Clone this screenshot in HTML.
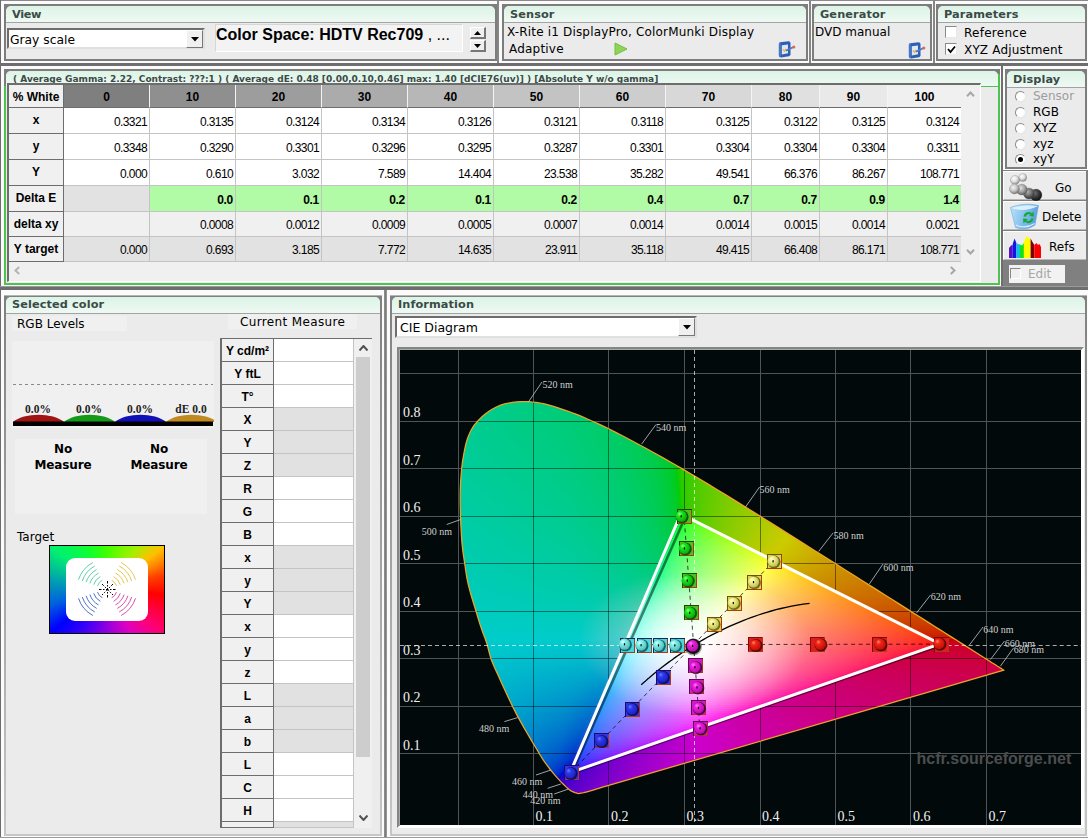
<!DOCTYPE html><html><head><meta charset="utf-8"><title>HCFR Colorimeter</title><style>
*{box-sizing:border-box;margin:0;padding:0}
html,body{width:1088px;height:838px;overflow:hidden;background:#fbfbfb}
body{position:relative;font-family:"DejaVu Sans","Liberation Sans",sans-serif;font-size:12px;color:#000}
div,span,svg{position:absolute}
.pn{background:#7d7d7d}
.pn>.in{left:2px;top:2px;right:2px;bottom:2px;background:#ebebeb;border-radius:5px 5px 0 0;overflow:hidden}
.pn>.in>.hd{left:0;top:0;right:0;height:17px;background:linear-gradient(#dcf4e6,#eef9f3);border-bottom:1px solid #a3a3a3;border-radius:5px 5px 0 0}
.pn .tt{left:6px;top:2px;font-weight:bold;font-size:11.3px;color:#3b4a47;white-space:nowrap;letter-spacing:0.1px}
.t{white-space:nowrap;line-height:1}
.sp{background:#6e6e6e}
.ln{background:#8a8a8a}
.cell{font-family:"Liberation Sans",sans-serif;font-size:12px;white-space:nowrap;line-height:1}
.num{text-align:right;letter-spacing:-0.62px}
.lab{text-align:center;font-weight:bold;letter-spacing:0}
</style></head><body><div class="ln" style="left:0px;top:0px;width:1088px;height:1px;"></div><div class="" style="left:0px;top:0px;width:1px;height:838px;background:#6c6c6c"></div><div class="sp" style="left:0px;top:63px;width:1088px;height:3px;"></div><div class="sp" style="left:0px;top:286px;width:1088px;height:4px;background:linear-gradient(#9a9a9a 0,#9a9a9a 25%,#6e6e6e 25%)"></div><div class="sp" style="left:384px;top:290px;width:3px;height:548px;background:linear-gradient(90deg,#949494,#7c7c7c 50%,#a4a4a4)"></div><div class="sp" style="left:1001px;top:66px;width:2px;height:220px;"></div><div class="" style="left:497px;top:0px;width:2px;height:63px;background:#868686"></div><div class="" style="left:809px;top:0px;width:2px;height:63px;background:#868686"></div><div class="" style="left:933px;top:0px;width:2px;height:63px;background:#868686"></div><div class="" style="left:0px;top:837px;width:1088px;height:1px;background:#9a9a9a"></div><div class="pn" style="left:4px;top:4px;width:493px;height:57px;"><div class="in"><div class="hd" style="height:17px"></div><span class="tt" style="letter-spacing:-0.35px">View</span><div class="" style="left:1px;top:22px;width:198px;height:21px;background:#fff;border:2px solid #6d6d6d;border-right-color:#e0e0e0;border-bottom-color:#e0e0e0"><span class="t" style="left:1px;top:3.5px;font-size:12.3px">Gray scale</span><div style="right:0;top:0;width:17px;height:18px;background:#f0f0f0;border:1px solid #fff;border-right-color:#777;border-bottom-color:#777"></div><svg style="right:4px;top:7px" width="8" height="5"><path d="M0 0H8L4 4.5Z" fill="#000"/></svg></div><div class="" style="left:209px;top:18px;width:248px;height:28px;background:#f3f3f3;border:1px solid #d6d6d6;border-right-color:#fff;border-bottom-color:#fff"><span class="t" style="left:0px;top:2px;font-family:'Liberation Sans',sans-serif;font-weight:bold;font-size:16px;letter-spacing:0">Color Space: HDTV Rec709 <span style="position:static;font-weight:normal">, ...</span></span></div><div class="" style="left:464px;top:21px;width:16px;height:12px;background:#f0f0f0;border:1px solid #fff;border-right:2px solid #777;border-bottom:2px solid #777"><svg style="left:3px;top:3px" width="7" height="4"><path d="M0 4H7L3.5 0Z" fill="#000"/></svg></div><div class="" style="left:464px;top:34px;width:16px;height:12px;background:#f0f0f0;border:1px solid #fff;border-right:2px solid #777;border-bottom:2px solid #777"><svg style="left:3px;top:3px" width="7" height="4"><path d="M0 0H7L3.5 4Z" fill="#000"/></svg></div></div></div><div class="pn" style="left:502px;top:4px;width:306px;height:57px;"><div class="in"><div class="hd" style="height:17px"></div><span class="tt" style="">Sensor</span><span class="t" style="left:3px;top:20px;font-size:12px;letter-spacing:0.17px">X-Rite i1 DisplayPro, ColorMunki Display</span><span class="t" style="left:5px;top:37px;font-size:12px;letter-spacing:0.2px">Adaptive</span><svg style="left:110px;top:36px" width="14" height="14"><path d="M1 1L13 7L1 13Z" fill="#8fd45a" stroke="#6fbf3c" stroke-width="1"/></svg><svg style="left:273px;top:33px" width="20" height="20" viewBox="0 0 20 20"><path d="M3 3.2L11.5 2.2Q13.5 2.2 13.5 4V15.2Q13.5 16.8 12 17.2L4 18.6Q1.8 18.6 1.8 16.6V5Q1.8 3.4 3 3.2Z" fill="#2c5fb4"/><path d="M2.6 4.4L3.4 3.6V18L2.6 17.6Z" fill="#6f9be0"/><path d="M4.8 6.2L11 5.5V14.3L4.8 15.4Z" fill="#dce8f8"/><path d="M5.8 10.5L7.6 12.2L9.2 10" stroke="#e4b740" stroke-width="1.5" fill="none"/><path d="M9 11.6L16 8.3" stroke="#4a78c9" stroke-width="1.8"/><circle cx="16.8" cy="8" r="1.6" fill="#d86a5a"/></svg></div></div><div class="pn" style="left:812px;top:4px;width:120px;height:57px;"><div class="in"><div class="hd" style="height:17px"></div><span class="tt" style="">Generator</span><span class="t" style="left:1px;top:20px;font-size:12px">DVD manual</span><svg style="left:93px;top:34px" width="20" height="20" viewBox="0 0 20 20"><path d="M3 3.2L11.5 2.2Q13.5 2.2 13.5 4V15.2Q13.5 16.8 12 17.2L4 18.6Q1.8 18.6 1.8 16.6V5Q1.8 3.4 3 3.2Z" fill="#2c5fb4"/><path d="M2.6 4.4L3.4 3.6V18L2.6 17.6Z" fill="#6f9be0"/><path d="M4.8 6.2L11 5.5V14.3L4.8 15.4Z" fill="#dce8f8"/><path d="M5.8 10.5L7.6 12.2L9.2 10" stroke="#e4b740" stroke-width="1.5" fill="none"/><path d="M9 11.6L16 8.3" stroke="#4a78c9" stroke-width="1.8"/><circle cx="16.8" cy="8" r="1.6" fill="#d86a5a"/></svg></div></div><div class="pn" style="left:936px;top:4px;width:151px;height:57px;"><div class="in"><div class="hd" style="height:17px"></div><span class="tt" style="">Parameters</span><div class="" style="left:7px;top:20px;width:12px;height:12px;background:#fff;border:1px solid #8a8a8a;border-right-color:#e8e8e8;border-bottom-color:#e8e8e8"></div><div class="" style="left:7px;top:37px;width:12px;height:12px;background:#fff;border:1px solid #8a8a8a;border-right-color:#e8e8e8;border-bottom-color:#e8e8e8"><svg style="left:1px;top:1px" width="9" height="9"><path d="M1 4L3.5 7L8 1.5" fill="none" stroke="#000" stroke-width="1.8"/></svg></div><span class="t" style="left:26px;top:21px;font-size:12px;letter-spacing:0.27px">Reference</span><span class="t" style="left:26px;top:38px;font-size:12px;letter-spacing:0.16px">XYZ Adjustment</span></div></div><div class="" style="left:4px;top:69px;width:996px;height:216px;background:#4fc24f"></div><div class="" style="left:4px;top:69px;width:994px;height:17px;background:#7d7d7d"></div><div class="" style="left:996px;top:69px;width:4px;height:5px;background:#7d7d7d"></div><div class="" style="left:6px;top:71px;width:992px;height:212px;background:#ebebeb;border-radius:5px 5px 0 0;overflow:hidden"><div style="left:0;top:0;right:0;height:15px;background:linear-gradient(#dcf4e6,#eef9f3)"></div><span class="tt t" style="left:7px;top:4px;font-weight:bold;font-size:9px;color:#3b4a47;letter-spacing:0;white-space:nowrap">( Average Gamma: 2.22, Contrast: ???:1 ) ( Average dE: 0.48 [0.00,0.10,0.46] max: 1.40 [dCIE76(uv)] ) [Absolute Y w/o gamma]</span></div><div class="" style="left:981px;top:86px;width:19px;height:1px;background:#4fc24f"></div><div class="" style="left:7px;top:83px;width:974px;height:199px;background:#f0f0f0;border-left:2px solid #6d6d6d;border-top:2px solid #6d6d6d;border-right:1px solid #fff;border-bottom:1px solid #fff"></div><div class="" style="left:9px;top:85px;width:55px;height:23px;background:#f0f0f0;border-right:1px solid #6d6d6d;border-bottom:1px solid #6d6d6d"><span class="cell lab" style="left:0;right:0;top:6px">% White</span></div><div class="" style="left:64px;top:85px;width:86px;height:23px;background:#7f7f7f;border-right:1px solid #f4f4f4;border-bottom:1px solid #6d6d6d"><span class="cell lab" style="left:0;right:0;top:6px">0</span></div><div class="" style="left:150px;top:85px;width:86px;height:23px;background:#8f8f8f;border-right:1px solid #f4f4f4;border-bottom:1px solid #6d6d6d"><span class="cell lab" style="left:0;right:0;top:6px">10</span></div><div class="" style="left:236px;top:85px;width:86px;height:23px;background:#9d9d9d;border-right:1px solid #f4f4f4;border-bottom:1px solid #6d6d6d"><span class="cell lab" style="left:0;right:0;top:6px">20</span></div><div class="" style="left:322px;top:85px;width:86px;height:23px;background:#ababab;border-right:1px solid #f4f4f4;border-bottom:1px solid #6d6d6d"><span class="cell lab" style="left:0;right:0;top:6px">30</span></div><div class="" style="left:408px;top:85px;width:86px;height:23px;background:#b7b7b7;border-right:1px solid #f4f4f4;border-bottom:1px solid #6d6d6d"><span class="cell lab" style="left:0;right:0;top:6px">40</span></div><div class="" style="left:494px;top:85px;width:86px;height:23px;background:#c3c3c3;border-right:1px solid #f4f4f4;border-bottom:1px solid #6d6d6d"><span class="cell lab" style="left:0;right:0;top:6px">50</span></div><div class="" style="left:580px;top:85px;width:86px;height:23px;background:#cdcdcd;border-right:1px solid #f4f4f4;border-bottom:1px solid #6d6d6d"><span class="cell lab" style="left:0;right:0;top:6px">60</span></div><div class="" style="left:666px;top:85px;width:86px;height:23px;background:#d8d8d8;border-right:1px solid #f4f4f4;border-bottom:1px solid #6d6d6d"><span class="cell lab" style="left:0;right:0;top:6px">70</span></div><div class="" style="left:752px;top:85px;width:68px;height:23px;background:#e0e0e0;border-right:1px solid #f4f4f4;border-bottom:1px solid #6d6d6d"><span class="cell lab" style="left:0;right:0;top:6px">80</span></div><div class="" style="left:820px;top:85px;width:68px;height:23px;background:#e9e9e9;border-right:1px solid #f4f4f4;border-bottom:1px solid #6d6d6d"><span class="cell lab" style="left:0;right:0;top:6px">90</span></div><div class="" style="left:888px;top:85px;width:74px;height:23px;background:#f0f0f0;border-right:1px solid #6d6d6d;border-bottom:1px solid #6d6d6d"><span class="cell lab" style="left:0;right:0;top:6px">100</span></div><div class="" style="left:9px;top:108px;width:55px;height:26px;background:#f0f0f0;border-right:1px solid #6d6d6d;border-bottom:1px solid #6d6d6d"><span class="cell lab" style="left:0;right:0;top:6px">x</span></div><div class="" style="left:64px;top:108px;width:86px;height:26px;background:#ffffff;border-right:1px solid #c4c4c4;border-bottom:1px solid #c4c4c4"><span class="cell num" style="right:2px;top:8px;">0.3321</span></div><div class="" style="left:150px;top:108px;width:86px;height:26px;background:#ffffff;border-right:1px solid #c4c4c4;border-bottom:1px solid #c4c4c4"><span class="cell num" style="right:2px;top:8px;">0.3135</span></div><div class="" style="left:236px;top:108px;width:86px;height:26px;background:#ffffff;border-right:1px solid #c4c4c4;border-bottom:1px solid #c4c4c4"><span class="cell num" style="right:2px;top:8px;">0.3124</span></div><div class="" style="left:322px;top:108px;width:86px;height:26px;background:#ffffff;border-right:1px solid #c4c4c4;border-bottom:1px solid #c4c4c4"><span class="cell num" style="right:2px;top:8px;">0.3134</span></div><div class="" style="left:408px;top:108px;width:86px;height:26px;background:#ffffff;border-right:1px solid #c4c4c4;border-bottom:1px solid #c4c4c4"><span class="cell num" style="right:2px;top:8px;">0.3126</span></div><div class="" style="left:494px;top:108px;width:86px;height:26px;background:#ffffff;border-right:1px solid #c4c4c4;border-bottom:1px solid #c4c4c4"><span class="cell num" style="right:2px;top:8px;">0.3121</span></div><div class="" style="left:580px;top:108px;width:86px;height:26px;background:#ffffff;border-right:1px solid #c4c4c4;border-bottom:1px solid #c4c4c4"><span class="cell num" style="right:2px;top:8px;">0.3118</span></div><div class="" style="left:666px;top:108px;width:86px;height:26px;background:#ffffff;border-right:1px solid #c4c4c4;border-bottom:1px solid #c4c4c4"><span class="cell num" style="right:2px;top:8px;">0.3125</span></div><div class="" style="left:752px;top:108px;width:68px;height:26px;background:#ffffff;border-right:1px solid #c4c4c4;border-bottom:1px solid #c4c4c4"><span class="cell num" style="right:2px;top:8px;">0.3122</span></div><div class="" style="left:820px;top:108px;width:68px;height:26px;background:#ffffff;border-right:1px solid #c4c4c4;border-bottom:1px solid #c4c4c4"><span class="cell num" style="right:2px;top:8px;">0.3125</span></div><div class="" style="left:888px;top:108px;width:74px;height:26px;background:#ffffff;border-right:1px solid #c4c4c4;border-bottom:1px solid #c4c4c4"><span class="cell num" style="right:2px;top:8px;">0.3124</span></div><div class="" style="left:9px;top:134px;width:55px;height:26px;background:#f0f0f0;border-right:1px solid #6d6d6d;border-bottom:1px solid #6d6d6d"><span class="cell lab" style="left:0;right:0;top:6px">y</span></div><div class="" style="left:64px;top:134px;width:86px;height:26px;background:#ffffff;border-right:1px solid #c4c4c4;border-bottom:1px solid #c4c4c4"><span class="cell num" style="right:2px;top:8px;">0.3348</span></div><div class="" style="left:150px;top:134px;width:86px;height:26px;background:#ffffff;border-right:1px solid #c4c4c4;border-bottom:1px solid #c4c4c4"><span class="cell num" style="right:2px;top:8px;">0.3290</span></div><div class="" style="left:236px;top:134px;width:86px;height:26px;background:#ffffff;border-right:1px solid #c4c4c4;border-bottom:1px solid #c4c4c4"><span class="cell num" style="right:2px;top:8px;">0.3301</span></div><div class="" style="left:322px;top:134px;width:86px;height:26px;background:#ffffff;border-right:1px solid #c4c4c4;border-bottom:1px solid #c4c4c4"><span class="cell num" style="right:2px;top:8px;">0.3296</span></div><div class="" style="left:408px;top:134px;width:86px;height:26px;background:#ffffff;border-right:1px solid #c4c4c4;border-bottom:1px solid #c4c4c4"><span class="cell num" style="right:2px;top:8px;">0.3295</span></div><div class="" style="left:494px;top:134px;width:86px;height:26px;background:#ffffff;border-right:1px solid #c4c4c4;border-bottom:1px solid #c4c4c4"><span class="cell num" style="right:2px;top:8px;">0.3287</span></div><div class="" style="left:580px;top:134px;width:86px;height:26px;background:#ffffff;border-right:1px solid #c4c4c4;border-bottom:1px solid #c4c4c4"><span class="cell num" style="right:2px;top:8px;">0.3301</span></div><div class="" style="left:666px;top:134px;width:86px;height:26px;background:#ffffff;border-right:1px solid #c4c4c4;border-bottom:1px solid #c4c4c4"><span class="cell num" style="right:2px;top:8px;">0.3304</span></div><div class="" style="left:752px;top:134px;width:68px;height:26px;background:#ffffff;border-right:1px solid #c4c4c4;border-bottom:1px solid #c4c4c4"><span class="cell num" style="right:2px;top:8px;">0.3304</span></div><div class="" style="left:820px;top:134px;width:68px;height:26px;background:#ffffff;border-right:1px solid #c4c4c4;border-bottom:1px solid #c4c4c4"><span class="cell num" style="right:2px;top:8px;">0.3304</span></div><div class="" style="left:888px;top:134px;width:74px;height:26px;background:#ffffff;border-right:1px solid #c4c4c4;border-bottom:1px solid #c4c4c4"><span class="cell num" style="right:2px;top:8px;">0.3311</span></div><div class="" style="left:9px;top:160px;width:55px;height:26px;background:#f0f0f0;border-right:1px solid #6d6d6d;border-bottom:1px solid #6d6d6d"><span class="cell lab" style="left:0;right:0;top:6px">Y</span></div><div class="" style="left:64px;top:160px;width:86px;height:26px;background:#ffffff;border-right:1px solid #c4c4c4;border-bottom:1px solid #c4c4c4"><span class="cell num" style="right:2px;top:8px;">0.000</span></div><div class="" style="left:150px;top:160px;width:86px;height:26px;background:#ffffff;border-right:1px solid #c4c4c4;border-bottom:1px solid #c4c4c4"><span class="cell num" style="right:2px;top:8px;">0.610</span></div><div class="" style="left:236px;top:160px;width:86px;height:26px;background:#ffffff;border-right:1px solid #c4c4c4;border-bottom:1px solid #c4c4c4"><span class="cell num" style="right:2px;top:8px;">3.032</span></div><div class="" style="left:322px;top:160px;width:86px;height:26px;background:#ffffff;border-right:1px solid #c4c4c4;border-bottom:1px solid #c4c4c4"><span class="cell num" style="right:2px;top:8px;">7.589</span></div><div class="" style="left:408px;top:160px;width:86px;height:26px;background:#ffffff;border-right:1px solid #c4c4c4;border-bottom:1px solid #c4c4c4"><span class="cell num" style="right:2px;top:8px;">14.404</span></div><div class="" style="left:494px;top:160px;width:86px;height:26px;background:#ffffff;border-right:1px solid #c4c4c4;border-bottom:1px solid #c4c4c4"><span class="cell num" style="right:2px;top:8px;">23.538</span></div><div class="" style="left:580px;top:160px;width:86px;height:26px;background:#ffffff;border-right:1px solid #c4c4c4;border-bottom:1px solid #c4c4c4"><span class="cell num" style="right:2px;top:8px;">35.282</span></div><div class="" style="left:666px;top:160px;width:86px;height:26px;background:#ffffff;border-right:1px solid #c4c4c4;border-bottom:1px solid #c4c4c4"><span class="cell num" style="right:2px;top:8px;">49.541</span></div><div class="" style="left:752px;top:160px;width:68px;height:26px;background:#ffffff;border-right:1px solid #c4c4c4;border-bottom:1px solid #c4c4c4"><span class="cell num" style="right:2px;top:8px;">66.376</span></div><div class="" style="left:820px;top:160px;width:68px;height:26px;background:#ffffff;border-right:1px solid #c4c4c4;border-bottom:1px solid #c4c4c4"><span class="cell num" style="right:2px;top:8px;">86.267</span></div><div class="" style="left:888px;top:160px;width:74px;height:26px;background:#ffffff;border-right:1px solid #c4c4c4;border-bottom:1px solid #c4c4c4"><span class="cell num" style="right:2px;top:8px;">108.771</span></div><div class="" style="left:9px;top:186px;width:55px;height:26px;background:#f0f0f0;border-right:1px solid #6d6d6d;border-bottom:1px solid #6d6d6d"><span class="cell lab" style="left:0;right:0;top:6px">Delta E</span></div><div class="" style="left:64px;top:186px;width:86px;height:26px;background:#e2e2e2;border-right:1px solid #c4c4c4;border-bottom:1px solid #c4c4c4"><span class="cell num" style="right:2px;top:8px;font-weight:bold;letter-spacing:-0.3px;"></span></div><div class="" style="left:150px;top:186px;width:86px;height:26px;background:#b1fba6;border-right:1px solid #c4c4c4;border-bottom:1px solid #c4c4c4"><span class="cell num" style="right:2px;top:8px;font-weight:bold;letter-spacing:-0.3px;">0.0</span></div><div class="" style="left:236px;top:186px;width:86px;height:26px;background:#b1fba6;border-right:1px solid #c4c4c4;border-bottom:1px solid #c4c4c4"><span class="cell num" style="right:2px;top:8px;font-weight:bold;letter-spacing:-0.3px;">0.1</span></div><div class="" style="left:322px;top:186px;width:86px;height:26px;background:#b1fba6;border-right:1px solid #c4c4c4;border-bottom:1px solid #c4c4c4"><span class="cell num" style="right:2px;top:8px;font-weight:bold;letter-spacing:-0.3px;">0.2</span></div><div class="" style="left:408px;top:186px;width:86px;height:26px;background:#b1fba6;border-right:1px solid #c4c4c4;border-bottom:1px solid #c4c4c4"><span class="cell num" style="right:2px;top:8px;font-weight:bold;letter-spacing:-0.3px;">0.1</span></div><div class="" style="left:494px;top:186px;width:86px;height:26px;background:#b1fba6;border-right:1px solid #c4c4c4;border-bottom:1px solid #c4c4c4"><span class="cell num" style="right:2px;top:8px;font-weight:bold;letter-spacing:-0.3px;">0.2</span></div><div class="" style="left:580px;top:186px;width:86px;height:26px;background:#b1fba6;border-right:1px solid #c4c4c4;border-bottom:1px solid #c4c4c4"><span class="cell num" style="right:2px;top:8px;font-weight:bold;letter-spacing:-0.3px;">0.4</span></div><div class="" style="left:666px;top:186px;width:86px;height:26px;background:#b1fba6;border-right:1px solid #c4c4c4;border-bottom:1px solid #c4c4c4"><span class="cell num" style="right:2px;top:8px;font-weight:bold;letter-spacing:-0.3px;">0.7</span></div><div class="" style="left:752px;top:186px;width:68px;height:26px;background:#b1fba6;border-right:1px solid #c4c4c4;border-bottom:1px solid #c4c4c4"><span class="cell num" style="right:2px;top:8px;font-weight:bold;letter-spacing:-0.3px;">0.7</span></div><div class="" style="left:820px;top:186px;width:68px;height:26px;background:#b1fba6;border-right:1px solid #c4c4c4;border-bottom:1px solid #c4c4c4"><span class="cell num" style="right:2px;top:8px;font-weight:bold;letter-spacing:-0.3px;">0.9</span></div><div class="" style="left:888px;top:186px;width:74px;height:26px;background:#b1fba6;border-right:1px solid #c4c4c4;border-bottom:1px solid #c4c4c4"><span class="cell num" style="right:2px;top:8px;font-weight:bold;letter-spacing:-0.3px;">1.4</span></div><div class="" style="left:9px;top:212px;width:55px;height:25px;background:#f0f0f0;border-right:1px solid #6d6d6d;border-bottom:1px solid #6d6d6d"><span class="cell lab" style="left:0;right:0;top:6px">delta xy</span></div><div class="" style="left:64px;top:212px;width:86px;height:25px;background:#f0f0f0;border-right:1px solid #c4c4c4;border-bottom:1px solid #c4c4c4"><span class="cell num" style="right:2px;top:7px;"></span></div><div class="" style="left:150px;top:212px;width:86px;height:25px;background:#f0f0f0;border-right:1px solid #c4c4c4;border-bottom:1px solid #c4c4c4"><span class="cell num" style="right:2px;top:7px;">0.0008</span></div><div class="" style="left:236px;top:212px;width:86px;height:25px;background:#f0f0f0;border-right:1px solid #c4c4c4;border-bottom:1px solid #c4c4c4"><span class="cell num" style="right:2px;top:7px;">0.0012</span></div><div class="" style="left:322px;top:212px;width:86px;height:25px;background:#f0f0f0;border-right:1px solid #c4c4c4;border-bottom:1px solid #c4c4c4"><span class="cell num" style="right:2px;top:7px;">0.0009</span></div><div class="" style="left:408px;top:212px;width:86px;height:25px;background:#f0f0f0;border-right:1px solid #c4c4c4;border-bottom:1px solid #c4c4c4"><span class="cell num" style="right:2px;top:7px;">0.0005</span></div><div class="" style="left:494px;top:212px;width:86px;height:25px;background:#f0f0f0;border-right:1px solid #c4c4c4;border-bottom:1px solid #c4c4c4"><span class="cell num" style="right:2px;top:7px;">0.0007</span></div><div class="" style="left:580px;top:212px;width:86px;height:25px;background:#f0f0f0;border-right:1px solid #c4c4c4;border-bottom:1px solid #c4c4c4"><span class="cell num" style="right:2px;top:7px;">0.0014</span></div><div class="" style="left:666px;top:212px;width:86px;height:25px;background:#f0f0f0;border-right:1px solid #c4c4c4;border-bottom:1px solid #c4c4c4"><span class="cell num" style="right:2px;top:7px;">0.0014</span></div><div class="" style="left:752px;top:212px;width:68px;height:25px;background:#f0f0f0;border-right:1px solid #c4c4c4;border-bottom:1px solid #c4c4c4"><span class="cell num" style="right:2px;top:7px;">0.0015</span></div><div class="" style="left:820px;top:212px;width:68px;height:25px;background:#f0f0f0;border-right:1px solid #c4c4c4;border-bottom:1px solid #c4c4c4"><span class="cell num" style="right:2px;top:7px;">0.0014</span></div><div class="" style="left:888px;top:212px;width:74px;height:25px;background:#f0f0f0;border-right:1px solid #c4c4c4;border-bottom:1px solid #c4c4c4"><span class="cell num" style="right:2px;top:7px;">0.0021</span></div><div class="" style="left:9px;top:237px;width:55px;height:25px;background:#f0f0f0;border-right:1px solid #6d6d6d;border-bottom:1px solid #6d6d6d"><span class="cell lab" style="left:0;right:0;top:6px">Y target</span></div><div class="" style="left:64px;top:237px;width:86px;height:25px;background:#e2e2e2;border-right:1px solid #c4c4c4;border-bottom:1px solid #c4c4c4"><span class="cell num" style="right:2px;top:7px;">0.000</span></div><div class="" style="left:150px;top:237px;width:86px;height:25px;background:#e2e2e2;border-right:1px solid #c4c4c4;border-bottom:1px solid #c4c4c4"><span class="cell num" style="right:2px;top:7px;">0.693</span></div><div class="" style="left:236px;top:237px;width:86px;height:25px;background:#e2e2e2;border-right:1px solid #c4c4c4;border-bottom:1px solid #c4c4c4"><span class="cell num" style="right:2px;top:7px;">3.185</span></div><div class="" style="left:322px;top:237px;width:86px;height:25px;background:#e2e2e2;border-right:1px solid #c4c4c4;border-bottom:1px solid #c4c4c4"><span class="cell num" style="right:2px;top:7px;">7.772</span></div><div class="" style="left:408px;top:237px;width:86px;height:25px;background:#e2e2e2;border-right:1px solid #c4c4c4;border-bottom:1px solid #c4c4c4"><span class="cell num" style="right:2px;top:7px;">14.635</span></div><div class="" style="left:494px;top:237px;width:86px;height:25px;background:#e2e2e2;border-right:1px solid #c4c4c4;border-bottom:1px solid #c4c4c4"><span class="cell num" style="right:2px;top:7px;">23.911</span></div><div class="" style="left:580px;top:237px;width:86px;height:25px;background:#e2e2e2;border-right:1px solid #c4c4c4;border-bottom:1px solid #c4c4c4"><span class="cell num" style="right:2px;top:7px;">35.118</span></div><div class="" style="left:666px;top:237px;width:86px;height:25px;background:#e2e2e2;border-right:1px solid #c4c4c4;border-bottom:1px solid #c4c4c4"><span class="cell num" style="right:2px;top:7px;">49.415</span></div><div class="" style="left:752px;top:237px;width:68px;height:25px;background:#e2e2e2;border-right:1px solid #c4c4c4;border-bottom:1px solid #c4c4c4"><span class="cell num" style="right:2px;top:7px;">66.408</span></div><div class="" style="left:820px;top:237px;width:68px;height:25px;background:#e2e2e2;border-right:1px solid #c4c4c4;border-bottom:1px solid #c4c4c4"><span class="cell num" style="right:2px;top:7px;">86.171</span></div><div class="" style="left:888px;top:237px;width:74px;height:25px;background:#e2e2e2;border-right:1px solid #c4c4c4;border-bottom:1px solid #c4c4c4"><span class="cell num" style="right:2px;top:7px;">108.771</span></div><div class="" style="left:961px;top:85px;width:18px;height:177px;background:#f0f0f0"><svg style="left:5px;top:6px" width="9" height="6"><path d="M1 5.2L4.5 1.5L8 5.2" fill="none" stroke="#a6a6a6" stroke-width="2"/></svg><svg style="left:5px;top:164px" width="9" height="6"><path d="M1 0.8L4.5 4.5L8 0.8" fill="none" stroke="#a6a6a6" stroke-width="2"/></svg></div><div class="" style="left:9px;top:262px;width:952px;height:18px;background:#f0f0f0"><svg style="left:5px;top:4px" width="6" height="9"><path d="M5.2 1L1.4 4.5L5.2 8" fill="none" stroke="#b4b4b4" stroke-width="2"/></svg><svg style="left:941px;top:4px" width="6" height="9"><path d="M0.8 1L4.6 4.5L0.8 8" fill="none" stroke="#a6a6a6" stroke-width="2"/></svg></div><div class="pn" style="left:1005px;top:69px;width:82px;height:100px;"><div class="in"><div class="hd" style="height:17px"></div><span class="tt" style="">Display</span><div style="left:8px;top:19.7px;width:11px;height:11px;border-radius:50%;background:#fff;border:1px solid #8c8c8c;border-right-color:#e4e4e4;border-bottom-color:#e4e4e4"></div><span class="t" style="left:26px;top:18.7px;font-size:12px;color:#9d9d9d">Sensor</span><div style="left:8px;top:35.7px;width:11px;height:11px;border-radius:50%;background:#fff;border:1px solid #8c8c8c;border-right-color:#e4e4e4;border-bottom-color:#e4e4e4"></div><span class="t" style="left:26px;top:34.7px;font-size:12px;color:#000">RGB</span><div style="left:8px;top:51.7px;width:11px;height:11px;border-radius:50%;background:#fff;border:1px solid #8c8c8c;border-right-color:#e4e4e4;border-bottom-color:#e4e4e4"></div><span class="t" style="left:26px;top:50.7px;font-size:12px;color:#000">XYZ</span><div style="left:8px;top:67.7px;width:11px;height:11px;border-radius:50%;background:#fff;border:1px solid #8c8c8c;border-right-color:#e4e4e4;border-bottom-color:#e4e4e4"></div><span class="t" style="left:26px;top:66.7px;font-size:12px;color:#000">xyz</span><div style="left:8px;top:82.7px;width:11px;height:11px;border-radius:50%;background:#fff;border:1px solid #8c8c8c;border-right-color:#e4e4e4;border-bottom-color:#e4e4e4"></div><div style="left:11px;top:85.7px;width:5px;height:5px;border-radius:50%;background:#000"></div><span class="t" style="left:26px;top:81.7px;font-size:12px;color:#000">xyY</span></div></div><div class="" style="left:1003px;top:170px;width:85px;height:116px;background:#808080"></div><div class="" style="left:1003px;top:171px;width:83px;height:29px;background:#ececec;border-top:1px solid #fff;border-left:1px solid #fff;border-bottom:1px solid #b8b8b8"><svg style="left:0px;top:0px" width="42" height="29" viewBox="0 0 42 29"><defs><radialGradient id="gs0" cx="0.4" cy="0.35" r="0.65"><stop offset="0" stop-color="#ffffff"/><stop offset="0.55" stop-color="#dcdcdc"/><stop offset="1" stop-color="#8c8c8c"/></radialGradient><radialGradient id="gs1" cx="0.4" cy="0.35" r="0.65"><stop offset="0" stop-color="#f4f4f4"/><stop offset="0.55" stop-color="#c4c4c4"/><stop offset="1" stop-color="#747474"/></radialGradient><radialGradient id="gs2" cx="0.4" cy="0.35" r="0.65"><stop offset="0" stop-color="#e0e0e0"/><stop offset="0.55" stop-color="#a4a4a4"/><stop offset="1" stop-color="#5c5c5c"/></radialGradient><radialGradient id="gs3" cx="0.4" cy="0.35" r="0.65"><stop offset="0" stop-color="#b0b0b0"/><stop offset="0.55" stop-color="#6c6c6c"/><stop offset="1" stop-color="#303030"/></radialGradient><radialGradient id="gs4" cx="0.4" cy="0.35" r="0.65"><stop offset="0" stop-color="#707070"/><stop offset="0.55" stop-color="#363636"/><stop offset="1" stop-color="#101010"/></radialGradient></defs><circle cx="32" cy="23" r="6" fill="url(#gs4)" stroke="#6a6a6a" stroke-opacity="0.5" stroke-width="0.5"/><circle cx="25" cy="21.5" r="5.6" fill="url(#gs3)" stroke="#6a6a6a" stroke-opacity="0.5" stroke-width="0.5"/><circle cx="18.7" cy="5.5" r="4" fill="url(#gs0)" stroke="#6a6a6a" stroke-opacity="0.5" stroke-width="0.5"/><circle cx="17.8" cy="17.6" r="5.5" fill="url(#gs2)" stroke="#6a6a6a" stroke-opacity="0.5" stroke-width="0.5"/><circle cx="11" cy="8" r="4.6" fill="url(#gs0)" stroke="#6a6a6a" stroke-opacity="0.5" stroke-width="0.5"/><circle cx="10.4" cy="17" r="5" fill="url(#gs1)" stroke="#6a6a6a" stroke-opacity="0.5" stroke-width="0.5"/></svg><span class="t" style="left:51px;top:10px;font-size:12px">Go</span></div><div class="" style="left:1003px;top:201px;width:83px;height:29px;background:#ececec;border-top:1px solid #fff;border-left:1px solid #fff;border-bottom:1px solid #b8b8b8"><svg style="left:5px;top:1px" width="32" height="28" viewBox="0 0 32 28"><defs><linearGradient id="db" x1="0" y1="0" x2="1" y2="0.3"><stop offset="0" stop-color="#bfe3fa"/><stop offset="0.5" stop-color="#8cc6ee"/><stop offset="1" stop-color="#5aa0dc"/></linearGradient></defs><path d="M1.5 4.5Q15 -1 29.5 2.5L26 22Q17 28.5 6.5 24.5Z" fill="url(#db)" stroke="#6aaee0" stroke-width="0.6"/><path d="M2.5 5Q15 9.5 29 3.2Q16 0.5 2.5 5Z" fill="#e4f4fd" opacity="0.9"/><path d="M6.8 22Q16 26.5 25.6 20.5" stroke="#d8effc" stroke-width="1.2" fill="none"/><path d="M14.5 13.5A5.2 5.2 0 0 1 23 10.2L24.5 8.5L25 13.5L20 13L21.6 11.6A3.2 3.2 0 0 0 16.8 13.8Z" fill="#18a838"/><path d="M24.6 15.5A5.2 5.2 0 0 1 16 18.8L14.5 20.4L14 15.5L19 16L17.4 17.4A3.2 3.2 0 0 0 22.3 15.3Z" fill="#18a838"/></svg><span class="t" style="left:38px;top:9px;font-size:12px">Delete</span></div><div class="" style="left:1003px;top:231px;width:83px;height:29px;background:#ececec;border-top:1px solid #fff;border-left:1px solid #fff;border-bottom:1px solid #b8b8b8"><svg style="left:4px;top:3px" width="34" height="24" viewBox="0 0 34 24"><path d="M1 23L1 13L3 10.5L4.7 10L4.7 23Z" fill="#5a10c0"/><path d="M4.7 23L4.7 9L6.5 3.5L8.4 8L8.4 23Z" fill="#1414e6"/><path d="M8.4 23L8.4 8L10 9L12 9.5L12 23Z" fill="#12c2e2"/><path d="M12 23L12 9.5L14 10.5L15.9 8L15.9 23Z" fill="#14e214"/><path d="M15.9 23L15.9 7L18.5 1L20.5 3L22.6 4L22.6 23Z" fill="#ffff00"/><path d="M22.6 23L22.6 3.5L24.5 7L26.3 10L26.3 23Z" fill="#7c0000"/><path d="M26.3 23L26.3 10L28.5 8L30 10L31.5 9L33 12L33 23Z" fill="#ff0000"/></svg><span class="t" style="left:45px;top:9px;font-size:12px">Refs</span></div><div class="" style="left:1009px;top:265px;width:56px;height:18px;background:#f2f2f2"><div style="left:1px;top:3px;width:11px;height:11px;background:#f0f0f0;border:1px solid #8a8a8a;border-right-color:#fff;border-bottom-color:#fff"></div><span class="t" style="left:19px;top:3px;font-size:12px;color:#a6a6a6">Edit</span></div><div class="pn" style="left:4px;top:295px;width:378px;height:541px;background:linear-gradient(#b4b4b4 0,#b4b4b4 1px,#808080 1px,#c6c6c6)"><div class="in"><div class="hd" style="height:17px"></div><span class="tt" style="top:1px">Selected color</span><div class="" style="left:6px;top:19px;width:115px;height:15px;background:#f0f0f0"><span class="t" style="left:5px;top:2px;font-size:12px">RGB Levels</span></div><div class="" style="left:222px;top:17px;width:129px;height:15px;background:#f0f0f0"><span class="t" style="left:12px;top:2px;font-size:12px;letter-spacing:0.36px">Current Measure</span></div><div class="" style="left:6px;top:44px;width:202px;height:87px;background:#f0f0f0"><svg style="left:0;top:0" width="202" height="86" viewBox="0 0 202 86"><line x1="1" y1="43.5" x2="201" y2="43.5" stroke="#8a8a8a" stroke-width="1" stroke-dasharray="3 3"/><path d="M1 81 Q4 78 12 75.5 Q26.5 72 41 75.5 Q49 78 52 81 Z" fill="#a01414"/><path d="M52 81 Q55 78 63 75.5 Q77.5 72 92 75.5 Q100 78 103 81 Z" fill="#149a18"/><path d="M103 81 Q106 78 114 75.5 Q128.5 72 143 75.5 Q151 78 154 81 Z" fill="#1010b8"/><path d="M154 81 Q157 78 165 75.5 Q179.5 72 194 75.5 Q202 78 205 81 Z" fill="#c08a20"/><rect x="1" y="80.5" width="200" height="4.5" fill="#000"/><text x="26" y="72" text-anchor="middle" font-family="Liberation Serif,serif" font-weight="bold" font-size="11.5" fill="#222">0.0%</text><text x="77" y="72" text-anchor="middle" font-family="Liberation Serif,serif" font-weight="bold" font-size="11.5" fill="#222">0.0%</text><text x="128" y="72" text-anchor="middle" font-family="Liberation Serif,serif" font-weight="bold" font-size="11.5" fill="#222">0.0%</text><text x="179" y="72" text-anchor="middle" font-family="Liberation Serif,serif" font-weight="bold" font-size="11.5" fill="#222">dE 0.0</text></svg></div><div class="" style="left:9px;top:142px;width:192px;height:75px;background:#f0f0f0"><span class="t" style="left:0px;top:4px;width:96px;text-align:center;font-weight:bold;font-size:12px;letter-spacing:-0.15px">No</span><span class="t" style="left:0px;top:20px;width:96px;text-align:center;font-weight:bold;font-size:12px;letter-spacing:-0.15px">Measure</span><span class="t" style="left:96px;top:4px;width:96px;text-align:center;font-weight:bold;font-size:12px;letter-spacing:-0.15px">No</span><span class="t" style="left:96px;top:20px;width:96px;text-align:center;font-weight:bold;font-size:12px;letter-spacing:-0.15px">Measure</span></div><div class="" style="left:6px;top:231px;width:58px;height:17px;"><span class="t" style="left:5px;top:3px;font-size:12px">Target</span></div><div class="" style="left:43px;top:248px;width:116px;height:89px;background:conic-gradient(from 0deg at 50% 50%,#40ff00 0deg,#a0f000 35deg,#ffc000 53deg,#ff4000 75deg,#ff0000 95deg,#ff0070 127deg,#e000c0 150deg,#9000e0 180deg,#3000f8 215deg,#0000ff 233deg,#0060e0 255deg,#00a0b0 280deg,#00f070 307deg,#10ff30 335deg,#40ff00 360deg);border:1px solid #000"><svg style="left:0;top:0" width="114" height="86" viewBox="0 0 114 86"><defs><linearGradient id="tgH" x1="0" x2="1" y1="0" y2="0"><stop offset="0" stop-color="#00ff60"/><stop offset="0.55" stop-color="#30ff00"/><stop offset="0.8" stop-color="#c0e000"/><stop offset="1" stop-color="#ff8000"/></linearGradient><linearGradient id="tgB" x1="0" x2="1" y1="0" y2="0"><stop offset="0" stop-color="#0000ff"/><stop offset="0.5" stop-color="#8000e0"/><stop offset="0.8" stop-color="#e000c0"/><stop offset="1" stop-color="#ff0080"/></linearGradient><linearGradient id="tgL" x1="0" x2="0" y1="0" y2="1"><stop offset="0" stop-color="#00ff60"/><stop offset="0.4" stop-color="#00c0a0"/><stop offset="0.7" stop-color="#0070e0"/><stop offset="1" stop-color="#0000ff"/></linearGradient><linearGradient id="tgR" x1="0" x2="0" y1="0" y2="1"><stop offset="0" stop-color="#ff9000"/><stop offset="0.45" stop-color="#ff0000"/><stop offset="0.75" stop-color="#ff0050"/><stop offset="1" stop-color="#ff00a0"/></linearGradient></defs><rect x="16" y="12" width="82" height="63" rx="9" fill="#fff"/><path d="M47.5 39.9A10 10 0 0 1 52.3 34.2" fill="none" stroke="#4fc9a0" stroke-width="0.9"/><path d="M43.7 38.7A14 14 0 0 1 50.4 30.6" fill="none" stroke="#4fc9a0" stroke-width="0.9"/><path d="M39.9 37.4A18 18 0 0 1 48.5 27.1" fill="none" stroke="#4fc9a0" stroke-width="0.9"/><path d="M36.1 36.2A22 22 0 0 1 46.7 23.6" fill="none" stroke="#4fc9a0" stroke-width="0.9"/><path d="M32.3 35.0A26 26 0 0 1 44.8 20.0" fill="none" stroke="#4fc9a0" stroke-width="0.9"/><path d="M28.5 33.7A30 30 0 0 1 42.9 16.5" fill="none" stroke="#4fc9a0" stroke-width="0.9"/><path d="M61.7 34.2A10 10 0 0 1 66.5 39.9" fill="none" stroke="#e0c040" stroke-width="0.9"/><path d="M63.6 30.6A14 14 0 0 1 70.3 38.7" fill="none" stroke="#e0c040" stroke-width="0.9"/><path d="M65.5 27.1A18 18 0 0 1 74.1 37.4" fill="none" stroke="#e0c040" stroke-width="0.9"/><path d="M67.3 23.6A22 22 0 0 1 77.9 36.2" fill="none" stroke="#e0c040" stroke-width="0.9"/><path d="M69.2 20.0A26 26 0 0 1 81.7 35.0" fill="none" stroke="#e0c040" stroke-width="0.9"/><path d="M71.1 16.5A30 30 0 0 1 85.5 33.7" fill="none" stroke="#e0c040" stroke-width="0.9"/><path d="M52.3 51.8A10 10 0 0 1 47.5 46.1" fill="none" stroke="#4060c0" stroke-width="0.9"/><path d="M50.4 55.4A14 14 0 0 1 43.7 47.3" fill="none" stroke="#4060c0" stroke-width="0.9"/><path d="M48.5 58.9A18 18 0 0 1 39.9 48.6" fill="none" stroke="#4060c0" stroke-width="0.9"/><path d="M46.7 62.4A22 22 0 0 1 36.1 49.8" fill="none" stroke="#4060c0" stroke-width="0.9"/><path d="M44.8 66.0A26 26 0 0 1 32.3 51.0" fill="none" stroke="#4060c0" stroke-width="0.9"/><path d="M42.9 69.5A30 30 0 0 1 28.5 52.3" fill="none" stroke="#4060c0" stroke-width="0.9"/><path d="M66.5 46.1A10 10 0 0 1 61.7 51.8" fill="none" stroke="#d040a0" stroke-width="0.9"/><path d="M70.3 47.3A14 14 0 0 1 63.6 55.4" fill="none" stroke="#d040a0" stroke-width="0.9"/><path d="M74.1 48.6A18 18 0 0 1 65.5 58.9" fill="none" stroke="#d040a0" stroke-width="0.9"/><path d="M77.9 49.8A22 22 0 0 1 67.3 62.4" fill="none" stroke="#d040a0" stroke-width="0.9"/><path d="M81.7 51.0A26 26 0 0 1 69.2 66.0" fill="none" stroke="#d040a0" stroke-width="0.9"/><path d="M85.5 52.3A30 30 0 0 1 71.1 69.5" fill="none" stroke="#d040a0" stroke-width="0.9"/><path d="M49 43.5H66M57.5 35V52M52 38L63 49M63 38L52 49" stroke="#000" stroke-width="1" stroke-dasharray="2.5 1.5 1.5 1.5"/></svg></div><div class="" style="left:214px;top:41px;width:152px;height:490px;background:#f0f0f0;border-left:2px solid #6d6d6d;border-top:2px solid #6d6d6d;overflow:hidden"></div><div class="" style="left:216px;top:42px;width:52px;height:23px;background:#f0f0f0;border-right:1px solid #6d6d6d;border-bottom:1px solid #6d6d6d"><span class="cell lab" style="left:0;right:0;top:6px;font-size:12px">Y cd/m²</span></div><div class="" style="left:268px;top:42px;width:80px;height:23px;background:#fff;border-right:1px solid #c4c4c4;border-bottom:1px solid #c4c4c4"></div><div class="" style="left:216px;top:65px;width:52px;height:23px;background:#f0f0f0;border-right:1px solid #6d6d6d;border-bottom:1px solid #6d6d6d"><span class="cell lab" style="left:0;right:0;top:6px;font-size:12px">Y ftL</span></div><div class="" style="left:268px;top:65px;width:80px;height:23px;background:#fff;border-right:1px solid #c4c4c4;border-bottom:1px solid #c4c4c4"></div><div class="" style="left:216px;top:88px;width:52px;height:23px;background:#f0f0f0;border-right:1px solid #6d6d6d;border-bottom:1px solid #6d6d6d"><span class="cell lab" style="left:0;right:0;top:6px;font-size:12px">T°</span></div><div class="" style="left:268px;top:88px;width:80px;height:23px;background:#fff;border-right:1px solid #c4c4c4;border-bottom:1px solid #c4c4c4"></div><div class="" style="left:216px;top:111px;width:52px;height:23px;background:#f0f0f0;border-right:1px solid #6d6d6d;border-bottom:1px solid #6d6d6d"><span class="cell lab" style="left:0;right:0;top:6px;font-size:12px">X</span></div><div class="" style="left:268px;top:111px;width:80px;height:23px;background:#e1e1e1;border-right:1px solid #c4c4c4;border-bottom:1px solid #c4c4c4"></div><div class="" style="left:216px;top:134px;width:52px;height:23px;background:#f0f0f0;border-right:1px solid #6d6d6d;border-bottom:1px solid #6d6d6d"><span class="cell lab" style="left:0;right:0;top:6px;font-size:12px">Y</span></div><div class="" style="left:268px;top:134px;width:80px;height:23px;background:#e1e1e1;border-right:1px solid #c4c4c4;border-bottom:1px solid #c4c4c4"></div><div class="" style="left:216px;top:157px;width:52px;height:23px;background:#f0f0f0;border-right:1px solid #6d6d6d;border-bottom:1px solid #6d6d6d"><span class="cell lab" style="left:0;right:0;top:6px;font-size:12px">Z</span></div><div class="" style="left:268px;top:157px;width:80px;height:23px;background:#e1e1e1;border-right:1px solid #c4c4c4;border-bottom:1px solid #c4c4c4"></div><div class="" style="left:216px;top:180px;width:52px;height:23px;background:#f0f0f0;border-right:1px solid #6d6d6d;border-bottom:1px solid #6d6d6d"><span class="cell lab" style="left:0;right:0;top:6px;font-size:12px">R</span></div><div class="" style="left:268px;top:180px;width:80px;height:23px;background:#fff;border-right:1px solid #c4c4c4;border-bottom:1px solid #c4c4c4"></div><div class="" style="left:216px;top:203px;width:52px;height:23px;background:#f0f0f0;border-right:1px solid #6d6d6d;border-bottom:1px solid #6d6d6d"><span class="cell lab" style="left:0;right:0;top:6px;font-size:12px">G</span></div><div class="" style="left:268px;top:203px;width:80px;height:23px;background:#fff;border-right:1px solid #c4c4c4;border-bottom:1px solid #c4c4c4"></div><div class="" style="left:216px;top:226px;width:52px;height:23px;background:#f0f0f0;border-right:1px solid #6d6d6d;border-bottom:1px solid #6d6d6d"><span class="cell lab" style="left:0;right:0;top:6px;font-size:12px">B</span></div><div class="" style="left:268px;top:226px;width:80px;height:23px;background:#fff;border-right:1px solid #c4c4c4;border-bottom:1px solid #c4c4c4"></div><div class="" style="left:216px;top:249px;width:52px;height:23px;background:#f0f0f0;border-right:1px solid #6d6d6d;border-bottom:1px solid #6d6d6d"><span class="cell lab" style="left:0;right:0;top:6px;font-size:12px">x</span></div><div class="" style="left:268px;top:249px;width:80px;height:23px;background:#e1e1e1;border-right:1px solid #c4c4c4;border-bottom:1px solid #c4c4c4"></div><div class="" style="left:216px;top:272px;width:52px;height:23px;background:#f0f0f0;border-right:1px solid #6d6d6d;border-bottom:1px solid #6d6d6d"><span class="cell lab" style="left:0;right:0;top:6px;font-size:12px">y</span></div><div class="" style="left:268px;top:272px;width:80px;height:23px;background:#e1e1e1;border-right:1px solid #c4c4c4;border-bottom:1px solid #c4c4c4"></div><div class="" style="left:216px;top:295px;width:52px;height:23px;background:#f0f0f0;border-right:1px solid #6d6d6d;border-bottom:1px solid #6d6d6d"><span class="cell lab" style="left:0;right:0;top:6px;font-size:12px">Y</span></div><div class="" style="left:268px;top:295px;width:80px;height:23px;background:#e1e1e1;border-right:1px solid #c4c4c4;border-bottom:1px solid #c4c4c4"></div><div class="" style="left:216px;top:318px;width:52px;height:23px;background:#f0f0f0;border-right:1px solid #6d6d6d;border-bottom:1px solid #6d6d6d"><span class="cell lab" style="left:0;right:0;top:6px;font-size:12px">x</span></div><div class="" style="left:268px;top:318px;width:80px;height:23px;background:#fff;border-right:1px solid #c4c4c4;border-bottom:1px solid #c4c4c4"></div><div class="" style="left:216px;top:341px;width:52px;height:23px;background:#f0f0f0;border-right:1px solid #6d6d6d;border-bottom:1px solid #6d6d6d"><span class="cell lab" style="left:0;right:0;top:6px;font-size:12px">y</span></div><div class="" style="left:268px;top:341px;width:80px;height:23px;background:#fff;border-right:1px solid #c4c4c4;border-bottom:1px solid #c4c4c4"></div><div class="" style="left:216px;top:364px;width:52px;height:23px;background:#f0f0f0;border-right:1px solid #6d6d6d;border-bottom:1px solid #6d6d6d"><span class="cell lab" style="left:0;right:0;top:6px;font-size:12px">z</span></div><div class="" style="left:268px;top:364px;width:80px;height:23px;background:#fff;border-right:1px solid #c4c4c4;border-bottom:1px solid #c4c4c4"></div><div class="" style="left:216px;top:387px;width:52px;height:23px;background:#f0f0f0;border-right:1px solid #6d6d6d;border-bottom:1px solid #6d6d6d"><span class="cell lab" style="left:0;right:0;top:6px;font-size:12px">L</span></div><div class="" style="left:268px;top:387px;width:80px;height:23px;background:#e1e1e1;border-right:1px solid #c4c4c4;border-bottom:1px solid #c4c4c4"></div><div class="" style="left:216px;top:410px;width:52px;height:23px;background:#f0f0f0;border-right:1px solid #6d6d6d;border-bottom:1px solid #6d6d6d"><span class="cell lab" style="left:0;right:0;top:6px;font-size:12px">a</span></div><div class="" style="left:268px;top:410px;width:80px;height:23px;background:#e1e1e1;border-right:1px solid #c4c4c4;border-bottom:1px solid #c4c4c4"></div><div class="" style="left:216px;top:433px;width:52px;height:23px;background:#f0f0f0;border-right:1px solid #6d6d6d;border-bottom:1px solid #6d6d6d"><span class="cell lab" style="left:0;right:0;top:6px;font-size:12px">b</span></div><div class="" style="left:268px;top:433px;width:80px;height:23px;background:#e1e1e1;border-right:1px solid #c4c4c4;border-bottom:1px solid #c4c4c4"></div><div class="" style="left:216px;top:456px;width:52px;height:23px;background:#f0f0f0;border-right:1px solid #6d6d6d;border-bottom:1px solid #6d6d6d"><span class="cell lab" style="left:0;right:0;top:6px;font-size:12px">L</span></div><div class="" style="left:268px;top:456px;width:80px;height:23px;background:#fff;border-right:1px solid #c4c4c4;border-bottom:1px solid #c4c4c4"></div><div class="" style="left:216px;top:479px;width:52px;height:23px;background:#f0f0f0;border-right:1px solid #6d6d6d;border-bottom:1px solid #6d6d6d"><span class="cell lab" style="left:0;right:0;top:6px;font-size:12px">C</span></div><div class="" style="left:268px;top:479px;width:80px;height:23px;background:#fff;border-right:1px solid #c4c4c4;border-bottom:1px solid #c4c4c4"></div><div class="" style="left:216px;top:502px;width:52px;height:23px;background:#f0f0f0;border-right:1px solid #6d6d6d;border-bottom:1px solid #6d6d6d"><span class="cell lab" style="left:0;right:0;top:6px;font-size:12px">H</span></div><div class="" style="left:268px;top:502px;width:80px;height:23px;background:#fff;border-right:1px solid #c4c4c4;border-bottom:1px solid #c4c4c4"></div><div class="" style="left:216px;top:525px;width:52px;height:6px;background:#f0f0f0;border-right:1px solid #6d6d6d;border-bottom:1px solid #6d6d6d"><span class="cell lab" style="left:0;right:0;top:6px;font-size:12px"></span></div><div class="" style="left:268px;top:525px;width:80px;height:6px;background:#e1e1e1;border-right:1px solid #c4c4c4;border-bottom:1px solid #c4c4c4"></div><div class="" style="left:348px;top:42px;width:18px;height:489px;background:#f0f0f0"><div style="left:2px;top:18px;width:14px;height:400px;background:#cdcdcd"></div><svg style="left:5px;top:6px" width="9" height="6"><path d="M0.5 5.5L4.5 1L8.5 5.5" fill="none" stroke="#505050" stroke-width="2"/></svg><svg style="left:5px;top:476px" width="9" height="6"><path d="M0.5 0.5L4.5 5L8.5 0.5" fill="none" stroke="#505050" stroke-width="2"/></svg></div></div></div><div class="pn" style="left:390px;top:295px;width:697px;height:541px;background:linear-gradient(#b4b4b4 0,#b4b4b4 1px,#808080 1px,#c6c6c6)"><div class="in"><div class="hd" style="height:17px"></div><span class="tt" style="top:1px">Information</span><div class="" style="left:3px;top:19px;width:302px;height:22px;background:#fff;border:2px solid #6d6d6d;border-right-color:#e0e0e0;border-bottom-color:#e0e0e0"><span class="t" style="left:3px;top:4px;font-size:12.5px">CIE Diagram</span><div style="right:0;top:0;width:17px;height:18px;background:#f0f0f0;border:1px solid #fff;border-right-color:#777;border-bottom-color:#777"></div><svg style="right:4px;top:7px" width="8" height="5"><path d="M0 0H8L4 4.5Z" fill="#000"/></svg></div><div class="" style="left:5px;top:50px;width:687px;height:481px;background:#aaa;border:2px solid #fff;border-left-color:#858585;border-top-color:#858585"><div style="left:1px;top:1px;right:0;bottom:0;background:#fff"></div><div style="left:1px;top:1px;right:1px;bottom:1px;background:#02090b"><svg style="left:0;top:0" width="681" height="475" viewBox="0 0 681 475"><defs><linearGradient id="o0" gradientUnits="userSpaceOnUse" x1="107.5" x2="141.3" y1="0" y2="0"><stop offset="0.000" stop-color="#00cc87"/><stop offset="1.000" stop-color="#00cc7e"/></linearGradient><linearGradient id="o1" gradientUnits="userSpaceOnUse" x1="100.1" x2="149.7" y1="0" y2="0"><stop offset="0.000" stop-color="#00cc89"/><stop offset="1.000" stop-color="#00cc7c"/></linearGradient><linearGradient id="o2" gradientUnits="userSpaceOnUse" x1="95.2" x2="156.5" y1="0" y2="0"><stop offset="0.000" stop-color="#00cc8a"/><stop offset="1.000" stop-color="#00cc7a"/></linearGradient><linearGradient id="o3" gradientUnits="userSpaceOnUse" x1="91.5" x2="162.6" y1="0" y2="0"><stop offset="0.000" stop-color="#00cc8b"/><stop offset="1.000" stop-color="#00cc79"/></linearGradient><linearGradient id="o4" gradientUnits="userSpaceOnUse" x1="88.3" x2="168.3" y1="0" y2="0"><stop offset="0.000" stop-color="#00cc8c"/><stop offset="1.000" stop-color="#00cc77"/></linearGradient><linearGradient id="o5" gradientUnits="userSpaceOnUse" x1="85.5" x2="173.8" y1="0" y2="0"><stop offset="0.000" stop-color="#00cc8d"/><stop offset="1.000" stop-color="#00cc75"/></linearGradient><linearGradient id="o6" gradientUnits="userSpaceOnUse" x1="83.0" x2="179.1" y1="0" y2="0"><stop offset="0.000" stop-color="#00cc8e"/><stop offset="1.000" stop-color="#00cc74"/></linearGradient><linearGradient id="o7" gradientUnits="userSpaceOnUse" x1="80.8" x2="184.0" y1="0" y2="0"><stop offset="0.000" stop-color="#00cc8f"/><stop offset="0.942" stop-color="#00cc75"/><stop offset="1.000" stop-color="#00cc72"/></linearGradient><linearGradient id="o8" gradientUnits="userSpaceOnUse" x1="78.8" x2="188.5" y1="0" y2="0"><stop offset="0.000" stop-color="#00cc8f"/><stop offset="0.891" stop-color="#00cc76"/><stop offset="1.000" stop-color="#00cc71"/></linearGradient><linearGradient id="o9" gradientUnits="userSpaceOnUse" x1="76.9" x2="192.9" y1="0" y2="0"><stop offset="0.000" stop-color="#00cc90"/><stop offset="0.847" stop-color="#00cc76"/><stop offset="1.000" stop-color="#00cc6f"/></linearGradient><linearGradient id="o10" gradientUnits="userSpaceOnUse" x1="75.0" x2="197.4" y1="0" y2="0"><stop offset="0.000" stop-color="#00cc91"/><stop offset="0.806" stop-color="#00cc77"/><stop offset="1.000" stop-color="#00cc6d"/></linearGradient><linearGradient id="o11" gradientUnits="userSpaceOnUse" x1="73.3" x2="201.8" y1="0" y2="0"><stop offset="0.000" stop-color="#00cc91"/><stop offset="0.785" stop-color="#00cc78"/><stop offset="1.000" stop-color="#00cc6c"/></linearGradient><linearGradient id="o12" gradientUnits="userSpaceOnUse" x1="72.0" x2="206.1" y1="0" y2="0"><stop offset="0.000" stop-color="#00cc92"/><stop offset="0.750" stop-color="#00cc79"/><stop offset="1.000" stop-color="#00cc6a"/></linearGradient><linearGradient id="o13" gradientUnits="userSpaceOnUse" x1="70.8" x2="210.2" y1="0" y2="0"><stop offset="0.000" stop-color="#00cc92"/><stop offset="0.729" stop-color="#00cc79"/><stop offset="1.000" stop-color="#00cc68"/></linearGradient><linearGradient id="o14" gradientUnits="userSpaceOnUse" x1="69.7" x2="214.1" y1="0" y2="0"><stop offset="0.000" stop-color="#00cc93"/><stop offset="0.712" stop-color="#00cc7a"/><stop offset="1.000" stop-color="#00cc66"/></linearGradient><linearGradient id="o15" gradientUnits="userSpaceOnUse" x1="68.8" x2="218.0" y1="0" y2="0"><stop offset="0.000" stop-color="#00cc93"/><stop offset="0.680" stop-color="#00cc7b"/><stop offset="1.000" stop-color="#00cc64"/></linearGradient><linearGradient id="o16" gradientUnits="userSpaceOnUse" x1="67.9" x2="221.9" y1="0" y2="0"><stop offset="0.000" stop-color="#00cc94"/><stop offset="0.667" stop-color="#00cc7b"/><stop offset="1.000" stop-color="#00cc62"/></linearGradient><linearGradient id="o17" gradientUnits="userSpaceOnUse" x1="67.1" x2="225.7" y1="0" y2="0"><stop offset="0.000" stop-color="#00cc94"/><stop offset="0.650" stop-color="#00cc7c"/><stop offset="1.000" stop-color="#00cc60"/></linearGradient><linearGradient id="o18" gradientUnits="userSpaceOnUse" x1="66.3" x2="229.5" y1="0" y2="0"><stop offset="0.000" stop-color="#00cc95"/><stop offset="0.634" stop-color="#00cc7c"/><stop offset="0.976" stop-color="#00cc60"/><stop offset="1.000" stop-color="#00cc5d"/></linearGradient><linearGradient id="o19" gradientUnits="userSpaceOnUse" x1="65.7" x2="233.3" y1="0" y2="0"><stop offset="0.000" stop-color="#00cc95"/><stop offset="0.619" stop-color="#00cc7d"/><stop offset="0.952" stop-color="#00cc61"/><stop offset="1.000" stop-color="#00cc5b"/></linearGradient><linearGradient id="o20" gradientUnits="userSpaceOnUse" x1="65.2" x2="237.0" y1="0" y2="0"><stop offset="0.000" stop-color="#00cc96"/><stop offset="0.605" stop-color="#00cc7d"/><stop offset="0.930" stop-color="#00cc62"/><stop offset="1.000" stop-color="#00cc58"/></linearGradient><linearGradient id="o21" gradientUnits="userSpaceOnUse" x1="64.7" x2="240.7" y1="0" y2="0"><stop offset="0.000" stop-color="#00cc96"/><stop offset="0.596" stop-color="#00cc7e"/><stop offset="0.910" stop-color="#00cc62"/><stop offset="1.000" stop-color="#00cc55"/></linearGradient><linearGradient id="o22" gradientUnits="userSpaceOnUse" x1="64.2" x2="244.4" y1="0" y2="0"><stop offset="0.000" stop-color="#00cc97"/><stop offset="0.582" stop-color="#00cc7e"/><stop offset="0.890" stop-color="#00cc63"/><stop offset="1.000" stop-color="#00cc52"/></linearGradient><linearGradient id="o23" gradientUnits="userSpaceOnUse" x1="63.8" x2="248.1" y1="0" y2="0"><stop offset="0.000" stop-color="#00cc97"/><stop offset="0.570" stop-color="#00cc7f"/><stop offset="0.871" stop-color="#00cc63"/><stop offset="1.000" stop-color="#00cc4e"/></linearGradient><linearGradient id="o24" gradientUnits="userSpaceOnUse" x1="63.4" x2="251.8" y1="0" y2="0"><stop offset="0.000" stop-color="#00cc98"/><stop offset="0.558" stop-color="#00cc7f"/><stop offset="0.853" stop-color="#00cc64"/><stop offset="1.000" stop-color="#00cc4b"/></linearGradient><linearGradient id="o25" gradientUnits="userSpaceOnUse" x1="63.0" x2="255.4" y1="0" y2="0"><stop offset="0.000" stop-color="#00cc98"/><stop offset="0.546" stop-color="#00cc80"/><stop offset="0.835" stop-color="#00cc65"/><stop offset="0.990" stop-color="#00cc49"/><stop offset="1.000" stop-color="#00cc46"/></linearGradient><linearGradient id="o26" gradientUnits="userSpaceOnUse" x1="62.6" x2="259.0" y1="0" y2="0"><stop offset="0.000" stop-color="#00cc98"/><stop offset="0.535" stop-color="#00cc80"/><stop offset="0.818" stop-color="#00cc66"/><stop offset="0.970" stop-color="#00cc4a"/><stop offset="1.000" stop-color="#00cc41"/></linearGradient><linearGradient id="o27" gradientUnits="userSpaceOnUse" x1="62.2" x2="262.6" y1="0" y2="0"><stop offset="0.000" stop-color="#00cc99"/><stop offset="0.525" stop-color="#00cc81"/><stop offset="0.802" stop-color="#00cc66"/><stop offset="0.950" stop-color="#00cc4b"/><stop offset="1.000" stop-color="#00cc3c"/></linearGradient><linearGradient id="o28" gradientUnits="userSpaceOnUse" x1="61.9" x2="266.1" y1="0" y2="0"><stop offset="0.000" stop-color="#00cc99"/><stop offset="0.515" stop-color="#00cc82"/><stop offset="0.796" stop-color="#00cc66"/><stop offset="0.942" stop-color="#00cc49"/><stop offset="1.000" stop-color="#00cc35"/></linearGradient><linearGradient id="o29" gradientUnits="userSpaceOnUse" x1="61.6" x2="269.7" y1="0" y2="0"><stop offset="0.000" stop-color="#00cc9a"/><stop offset="0.514" stop-color="#00cc81"/><stop offset="0.781" stop-color="#00cc67"/><stop offset="0.924" stop-color="#00cc4a"/><stop offset="0.990" stop-color="#00cc32"/><stop offset="1.000" stop-color="#00cc2d"/></linearGradient><linearGradient id="o30" gradientUnits="userSpaceOnUse" x1="61.3" x2="273.2" y1="0" y2="0"><stop offset="0.000" stop-color="#00cc9a"/><stop offset="0.500" stop-color="#00cc82"/><stop offset="0.764" stop-color="#00cc68"/><stop offset="0.906" stop-color="#00cc4c"/><stop offset="0.972" stop-color="#00cc34"/><stop offset="1.000" stop-color="#00cc21"/></linearGradient><linearGradient id="o31" gradientUnits="userSpaceOnUse" x1="61.1" x2="276.7" y1="0" y2="0"><stop offset="0.000" stop-color="#00cc9b"/><stop offset="0.491" stop-color="#00cc83"/><stop offset="0.750" stop-color="#00cc69"/><stop offset="0.889" stop-color="#00cc4d"/><stop offset="0.963" stop-color="#00cc31"/><stop offset="0.991" stop-color="#00cc1b"/><stop offset="1.000" stop-color="#00cc07"/></linearGradient><linearGradient id="o32" gradientUnits="userSpaceOnUse" x1="60.8" x2="280.1" y1="0" y2="0"><stop offset="0.000" stop-color="#00cc9b"/><stop offset="0.482" stop-color="#00cc84"/><stop offset="0.736" stop-color="#00cc69"/><stop offset="0.873" stop-color="#00cc4e"/><stop offset="0.945" stop-color="#00cc33"/><stop offset="0.973" stop-color="#00cc1e"/><stop offset="0.982" stop-color="#00cc11"/><stop offset="0.991" stop-color="#15cc00"/><stop offset="1.000" stop-color="#21cc00"/></linearGradient><linearGradient id="o33" gradientUnits="userSpaceOnUse" x1="60.6" x2="283.6" y1="0" y2="0"><stop offset="0.000" stop-color="#00cc9b"/><stop offset="0.482" stop-color="#00cc84"/><stop offset="0.732" stop-color="#00cc69"/><stop offset="0.866" stop-color="#00cc4d"/><stop offset="0.929" stop-color="#00cc34"/><stop offset="0.955" stop-color="#00cc22"/><stop offset="0.964" stop-color="#00cc17"/><stop offset="0.973" stop-color="#0fcc00"/><stop offset="0.982" stop-color="#1ecc00"/><stop offset="1.000" stop-color="#2ecc00"/></linearGradient><linearGradient id="o34" gradientUnits="userSpaceOnUse" x1="60.4" x2="287.0" y1="0" y2="0"><stop offset="0.000" stop-color="#00cc9c"/><stop offset="0.474" stop-color="#00cc84"/><stop offset="0.719" stop-color="#00cc6a"/><stop offset="0.851" stop-color="#00cc4e"/><stop offset="0.921" stop-color="#00cc31"/><stop offset="0.947" stop-color="#00cc1b"/><stop offset="0.956" stop-color="#00cc08"/><stop offset="0.965" stop-color="#1acc00"/><stop offset="0.991" stop-color="#32cc00"/><stop offset="1.000" stop-color="#37cc00"/></linearGradient><linearGradient id="o35" gradientUnits="userSpaceOnUse" x1="60.3" x2="290.4" y1="0" y2="0"><stop offset="0.000" stop-color="#00cc9c"/><stop offset="0.466" stop-color="#00cc85"/><stop offset="0.707" stop-color="#00cc6b"/><stop offset="0.836" stop-color="#00cc4f"/><stop offset="0.905" stop-color="#00cc33"/><stop offset="0.931" stop-color="#00cc1f"/><stop offset="0.940" stop-color="#00cc12"/><stop offset="0.948" stop-color="#15cc00"/><stop offset="0.966" stop-color="#29cc00"/><stop offset="1.000" stop-color="#3fcc00"/></linearGradient><linearGradient id="o36" gradientUnits="userSpaceOnUse" x1="60.1" x2="293.8" y1="0" y2="0"><stop offset="0.000" stop-color="#00cc9d"/><stop offset="0.462" stop-color="#00cc85"/><stop offset="0.701" stop-color="#00cc6a"/><stop offset="0.829" stop-color="#00cc4e"/><stop offset="0.889" stop-color="#00cc36"/><stop offset="0.915" stop-color="#00cc23"/><stop offset="0.923" stop-color="#00cc19"/><stop offset="0.932" stop-color="#0ccc00"/><stop offset="0.940" stop-color="#1dcc00"/><stop offset="0.966" stop-color="#34cc00"/><stop offset="1.000" stop-color="#46cc00"/></linearGradient><linearGradient id="o37" gradientUnits="userSpaceOnUse" x1="60.0" x2="297.1" y1="0" y2="0"><stop offset="0.000" stop-color="#00cc9d"/><stop offset="0.454" stop-color="#00cc86"/><stop offset="0.689" stop-color="#00cc6b"/><stop offset="0.815" stop-color="#00cc50"/><stop offset="0.882" stop-color="#00cc33"/><stop offset="0.908" stop-color="#00cc1d"/><stop offset="0.916" stop-color="#00cc0e"/><stop offset="0.924" stop-color="#18cc00"/><stop offset="0.941" stop-color="#2bcc00"/><stop offset="0.992" stop-color="#49cc00"/><stop offset="1.000" stop-color="#4dcc00"/></linearGradient><linearGradient id="o38" gradientUnits="userSpaceOnUse" x1="59.8" x2="300.5" y1="0" y2="0"><stop offset="0.000" stop-color="#00cc9e"/><stop offset="0.446" stop-color="#00cc86"/><stop offset="0.678" stop-color="#00cc6c"/><stop offset="0.802" stop-color="#00cc51"/><stop offset="0.868" stop-color="#00cc35"/><stop offset="0.893" stop-color="#00cc21"/><stop offset="0.901" stop-color="#00cc15"/><stop offset="0.909" stop-color="#12cc00"/><stop offset="0.926" stop-color="#29cc00"/><stop offset="0.967" stop-color="#44cc00"/><stop offset="1.000" stop-color="#52cc00"/></linearGradient><linearGradient id="o39" gradientUnits="userSpaceOnUse" x1="59.7" x2="303.8" y1="0" y2="0"><stop offset="0.000" stop-color="#00cc9e"/><stop offset="0.439" stop-color="#00cc87"/><stop offset="0.667" stop-color="#00cc6d"/><stop offset="0.789" stop-color="#00cc52"/><stop offset="0.854" stop-color="#00cc37"/><stop offset="0.878" stop-color="#00cc25"/><stop offset="0.886" stop-color="#00cc1b"/><stop offset="0.894" stop-color="#07cc00"/><stop offset="0.902" stop-color="#1ccc00"/><stop offset="0.927" stop-color="#34cc00"/><stop offset="0.992" stop-color="#55cc00"/><stop offset="1.000" stop-color="#58cc00"/></linearGradient><linearGradient id="o40" gradientUnits="userSpaceOnUse" x1="59.6" x2="307.2" y1="0" y2="0"><stop offset="0.000" stop-color="#00cc9e"/><stop offset="0.435" stop-color="#00cc87"/><stop offset="0.661" stop-color="#00cc6d"/><stop offset="0.782" stop-color="#00cc51"/><stop offset="0.847" stop-color="#00cc35"/><stop offset="0.871" stop-color="#00cc20"/><stop offset="0.879" stop-color="#00cc13"/><stop offset="0.887" stop-color="#15cc00"/><stop offset="0.903" stop-color="#2acc00"/><stop offset="0.952" stop-color="#49cc00"/><stop offset="1.000" stop-color="#5dcc00"/></linearGradient><linearGradient id="o41" gradientUnits="userSpaceOnUse" x1="59.5" x2="310.5" y1="0" y2="0"><stop offset="0.000" stop-color="#00cc9f"/><stop offset="0.429" stop-color="#00cc88"/><stop offset="0.651" stop-color="#00cc6e"/><stop offset="0.770" stop-color="#00cc53"/><stop offset="0.833" stop-color="#00cc37"/><stop offset="0.857" stop-color="#00cc24"/><stop offset="0.865" stop-color="#00cc19"/><stop offset="0.873" stop-color="#0dcc00"/><stop offset="0.881" stop-color="#1ecc00"/><stop offset="0.905" stop-color="#35cc00"/><stop offset="0.968" stop-color="#56cc00"/><stop offset="1.000" stop-color="#62cc00"/></linearGradient><linearGradient id="o42" gradientUnits="userSpaceOnUse" x1="59.4" x2="313.8" y1="0" y2="0"><stop offset="0.000" stop-color="#00cc9f"/><stop offset="0.422" stop-color="#00cc89"/><stop offset="0.641" stop-color="#00cc6f"/><stop offset="0.758" stop-color="#00cc54"/><stop offset="0.820" stop-color="#00cc39"/><stop offset="0.844" stop-color="#00cc27"/><stop offset="0.852" stop-color="#00cc1e"/><stop offset="0.859" stop-color="#00cc0d"/><stop offset="0.867" stop-color="#19cc00"/><stop offset="0.883" stop-color="#2dcc00"/><stop offset="0.930" stop-color="#4bcc00"/><stop offset="1.000" stop-color="#67cc00"/></linearGradient><linearGradient id="o43" gradientUnits="userSpaceOnUse" x1="59.4" x2="317.1" y1="0" y2="0"><stop offset="0.000" stop-color="#00cca0"/><stop offset="0.419" stop-color="#00cc89"/><stop offset="0.636" stop-color="#00cc6f"/><stop offset="0.752" stop-color="#00cc53"/><stop offset="0.814" stop-color="#00cc37"/><stop offset="0.837" stop-color="#00cc23"/><stop offset="0.845" stop-color="#00cc18"/><stop offset="0.853" stop-color="#10cc00"/><stop offset="0.860" stop-color="#20cc00"/><stop offset="0.884" stop-color="#37cc00"/><stop offset="0.946" stop-color="#58cc00"/><stop offset="1.000" stop-color="#6ccc00"/></linearGradient><linearGradient id="o44" gradientUnits="userSpaceOnUse" x1="59.3" x2="320.4" y1="0" y2="0"><stop offset="0.000" stop-color="#00cca0"/><stop offset="0.412" stop-color="#00cc89"/><stop offset="0.626" stop-color="#00cc70"/><stop offset="0.740" stop-color="#00cc55"/><stop offset="0.802" stop-color="#00cc39"/><stop offset="0.824" stop-color="#00cc27"/><stop offset="0.832" stop-color="#00cc1d"/><stop offset="0.840" stop-color="#00cc09"/><stop offset="0.847" stop-color="#1bcc00"/><stop offset="0.870" stop-color="#35cc00"/><stop offset="0.924" stop-color="#54cc00"/><stop offset="1.000" stop-color="#71cc00"/></linearGradient><linearGradient id="o45" gradientUnits="userSpaceOnUse" x1="59.3" x2="323.6" y1="0" y2="0"><stop offset="0.000" stop-color="#00cca0"/><stop offset="0.406" stop-color="#00cc8a"/><stop offset="0.617" stop-color="#00cc71"/><stop offset="0.729" stop-color="#00cc56"/><stop offset="0.789" stop-color="#00cc3b"/><stop offset="0.820" stop-color="#00cc21"/><stop offset="0.827" stop-color="#00cc14"/><stop offset="0.835" stop-color="#16cc00"/><stop offset="0.850" stop-color="#2bcc00"/><stop offset="0.895" stop-color="#4bcc00"/><stop offset="0.992" stop-color="#73cc00"/><stop offset="1.000" stop-color="#75cc00"/></linearGradient><linearGradient id="o46" gradientUnits="userSpaceOnUse" x1="59.2" x2="326.9" y1="0" y2="0"><stop offset="0.000" stop-color="#00cca1"/><stop offset="0.403" stop-color="#00cc8b"/><stop offset="0.612" stop-color="#00cc71"/><stop offset="0.724" stop-color="#00cc55"/><stop offset="0.784" stop-color="#00cc3a"/><stop offset="0.806" stop-color="#00cc27"/><stop offset="0.813" stop-color="#00cc1c"/><stop offset="0.821" stop-color="#02cc00"/><stop offset="0.828" stop-color="#1dcc00"/><stop offset="0.851" stop-color="#36cc00"/><stop offset="0.903" stop-color="#55cc00"/><stop offset="1.000" stop-color="#79cc00"/></linearGradient><linearGradient id="o47" gradientUnits="userSpaceOnUse" x1="59.2" x2="330.2" y1="0" y2="0"><stop offset="0.000" stop-color="#00cca1"/><stop offset="0.397" stop-color="#00cc8b"/><stop offset="0.603" stop-color="#00cc72"/><stop offset="0.713" stop-color="#00cc57"/><stop offset="0.772" stop-color="#00cc3c"/><stop offset="0.794" stop-color="#00cc2a"/><stop offset="0.801" stop-color="#00cc21"/><stop offset="0.809" stop-color="#00cc12"/><stop offset="0.816" stop-color="#17cc00"/><stop offset="0.831" stop-color="#2dcc00"/><stop offset="0.875" stop-color="#4dcc00"/><stop offset="0.971" stop-color="#74cc00"/><stop offset="1.000" stop-color="#7ecc00"/></linearGradient><linearGradient id="o48" gradientUnits="userSpaceOnUse" x1="59.2" x2="333.4" y1="0" y2="0"><stop offset="0.000" stop-color="#00cca2"/><stop offset="0.391" stop-color="#00cc8c"/><stop offset="0.601" stop-color="#00cc71"/><stop offset="0.710" stop-color="#00cc56"/><stop offset="0.768" stop-color="#00cc39"/><stop offset="0.790" stop-color="#00cc25"/><stop offset="0.797" stop-color="#00cc19"/><stop offset="0.804" stop-color="#10cc00"/><stop offset="0.812" stop-color="#20cc00"/><stop offset="0.833" stop-color="#38cc00"/><stop offset="0.891" stop-color="#5acc00"/><stop offset="1.000" stop-color="#82cc00"/></linearGradient><linearGradient id="o49" gradientUnits="userSpaceOnUse" x1="59.2" x2="336.7" y1="0" y2="0"><stop offset="0.000" stop-color="#00cca2"/><stop offset="0.388" stop-color="#00cc8c"/><stop offset="0.590" stop-color="#00cc73"/><stop offset="0.698" stop-color="#00cc58"/><stop offset="0.755" stop-color="#00cc3c"/><stop offset="0.777" stop-color="#00cc2a"/><stop offset="0.784" stop-color="#00cc21"/><stop offset="0.791" stop-color="#00cc11"/><stop offset="0.799" stop-color="#19cc00"/><stop offset="0.813" stop-color="#2ecc00"/><stop offset="0.856" stop-color="#4ecc00"/><stop offset="0.950" stop-color="#76cc00"/><stop offset="1.000" stop-color="#86cc00"/></linearGradient><linearGradient id="o50" gradientUnits="userSpaceOnUse" x1="59.2" x2="339.9" y1="0" y2="0"><stop offset="0.000" stop-color="#00cca3"/><stop offset="0.383" stop-color="#00cc8d"/><stop offset="0.582" stop-color="#00cc74"/><stop offset="0.688" stop-color="#00cc59"/><stop offset="0.745" stop-color="#00cc3e"/><stop offset="0.773" stop-color="#00cc25"/><stop offset="0.780" stop-color="#00cc19"/><stop offset="0.787" stop-color="#11cc00"/><stop offset="0.794" stop-color="#21cc00"/><stop offset="0.816" stop-color="#39cc00"/><stop offset="0.872" stop-color="#5ccc00"/><stop offset="0.986" stop-color="#86cc00"/><stop offset="1.000" stop-color="#8acc00"/></linearGradient><linearGradient id="o51" gradientUnits="userSpaceOnUse" x1="59.2" x2="343.1" y1="0" y2="0"><stop offset="0.000" stop-color="#00cca3"/><stop offset="0.380" stop-color="#00cc8d"/><stop offset="0.577" stop-color="#00cc74"/><stop offset="0.683" stop-color="#00cc59"/><stop offset="0.739" stop-color="#00cc3d"/><stop offset="0.761" stop-color="#00cc2a"/><stop offset="0.768" stop-color="#00cc21"/><stop offset="0.775" stop-color="#00cc10"/><stop offset="0.782" stop-color="#1acc00"/><stop offset="0.796" stop-color="#2fcc00"/><stop offset="0.838" stop-color="#4fcc00"/><stop offset="0.930" stop-color="#78cc00"/><stop offset="1.000" stop-color="#8ecc00"/></linearGradient><linearGradient id="o52" gradientUnits="userSpaceOnUse" x1="59.3" x2="346.4" y1="0" y2="0"><stop offset="0.000" stop-color="#00cca4"/><stop offset="0.375" stop-color="#00cc8e"/><stop offset="0.569" stop-color="#00cc75"/><stop offset="0.674" stop-color="#00cc5a"/><stop offset="0.729" stop-color="#00cc3f"/><stop offset="0.757" stop-color="#00cc25"/><stop offset="0.764" stop-color="#00cc18"/><stop offset="0.771" stop-color="#12cc00"/><stop offset="0.778" stop-color="#22cc00"/><stop offset="0.799" stop-color="#3acc00"/><stop offset="0.854" stop-color="#5dcc00"/><stop offset="0.965" stop-color="#88cc00"/><stop offset="1.000" stop-color="#93cc00"/></linearGradient><linearGradient id="o53" gradientUnits="userSpaceOnUse" x1="59.3" x2="349.6" y1="0" y2="0"><stop offset="0.000" stop-color="#00cca4"/><stop offset="0.377" stop-color="#00cc8e"/><stop offset="0.568" stop-color="#00cc74"/><stop offset="0.671" stop-color="#00cc59"/><stop offset="0.726" stop-color="#00cc3c"/><stop offset="0.747" stop-color="#00cc29"/><stop offset="0.753" stop-color="#00cc1e"/><stop offset="0.760" stop-color="#00cc05"/><stop offset="0.767" stop-color="#1ecc00"/><stop offset="0.788" stop-color="#38cc00"/><stop offset="0.836" stop-color="#59cc00"/><stop offset="0.938" stop-color="#84cc00"/><stop offset="1.000" stop-color="#97cc00"/></linearGradient><linearGradient id="o54" gradientUnits="userSpaceOnUse" x1="59.3" x2="352.8" y1="0" y2="0"><stop offset="0.000" stop-color="#00cca4"/><stop offset="0.367" stop-color="#00cc8f"/><stop offset="0.558" stop-color="#00cc76"/><stop offset="0.660" stop-color="#00cc5b"/><stop offset="0.714" stop-color="#00cc40"/><stop offset="0.741" stop-color="#00cc25"/><stop offset="0.748" stop-color="#00cc18"/><stop offset="0.755" stop-color="#13cc00"/><stop offset="0.762" stop-color="#23cc00"/><stop offset="0.782" stop-color="#3bcc00"/><stop offset="0.837" stop-color="#5fcc00"/><stop offset="0.946" stop-color="#8acc00"/><stop offset="1.000" stop-color="#9bcc00"/></linearGradient><linearGradient id="o55" gradientUnits="userSpaceOnUse" x1="59.4" x2="356.0" y1="0" y2="0"><stop offset="0.000" stop-color="#00cca5"/><stop offset="0.369" stop-color="#00cc8f"/><stop offset="0.557" stop-color="#00cc76"/><stop offset="0.658" stop-color="#00cc5a"/><stop offset="0.711" stop-color="#00cc3d"/><stop offset="0.732" stop-color="#00cc29"/><stop offset="0.738" stop-color="#00cc1e"/><stop offset="0.745" stop-color="#05cc03"/><stop offset="0.752" stop-color="#1fcc00"/><stop offset="0.772" stop-color="#39cc00"/><stop offset="0.819" stop-color="#5acc00"/><stop offset="0.919" stop-color="#86cc00"/><stop offset="1.000" stop-color="#9fcc00"/></linearGradient><linearGradient id="o56" gradientUnits="userSpaceOnUse" x1="59.4" x2="359.2" y1="0" y2="0"><stop offset="0.000" stop-color="#00cca5"/><stop offset="0.360" stop-color="#00cc90"/><stop offset="0.547" stop-color="#00cc77"/><stop offset="0.647" stop-color="#00cc5c"/><stop offset="0.700" stop-color="#00cc41"/><stop offset="0.727" stop-color="#00cc26"/><stop offset="0.733" stop-color="#00cc18"/><stop offset="0.740" stop-color="#1acc12"/><stop offset="0.753" stop-color="#2ecc00"/><stop offset="0.787" stop-color="#4ccc00"/><stop offset="0.860" stop-color="#73cc00"/><stop offset="1.000" stop-color="#a3cc00"/></linearGradient><linearGradient id="o57" gradientUnits="userSpaceOnUse" x1="59.5" x2="362.4" y1="0" y2="0"><stop offset="0.000" stop-color="#00cca6"/><stop offset="0.362" stop-color="#00cc90"/><stop offset="0.546" stop-color="#00cc77"/><stop offset="0.645" stop-color="#00cc5b"/><stop offset="0.697" stop-color="#00cc3e"/><stop offset="0.717" stop-color="#00cc29"/><stop offset="0.724" stop-color="#08cc1f"/><stop offset="0.730" stop-color="#1ccc1c"/><stop offset="0.750" stop-color="#34cc0e"/><stop offset="0.757" stop-color="#3acc00"/><stop offset="0.803" stop-color="#5ccc00"/><stop offset="0.895" stop-color="#85cc00"/><stop offset="1.000" stop-color="#a7cc00"/></linearGradient><linearGradient id="o58" gradientUnits="userSpaceOnUse" x1="59.5" x2="365.6" y1="0" y2="0"><stop offset="0.000" stop-color="#00cca6"/><stop offset="0.357" stop-color="#00cc91"/><stop offset="0.539" stop-color="#00cc78"/><stop offset="0.636" stop-color="#00cc5c"/><stop offset="0.688" stop-color="#00cc40"/><stop offset="0.708" stop-color="#00cc2d"/><stop offset="0.714" stop-color="#0ecc25"/><stop offset="0.721" stop-color="#1ecc23"/><stop offset="0.740" stop-color="#35cc1a"/><stop offset="0.753" stop-color="#40cc10"/><stop offset="0.766" stop-color="#4acc00"/><stop offset="0.831" stop-color="#6fcc00"/><stop offset="0.955" stop-color="#9dcc00"/><stop offset="1.000" stop-color="#abcc00"/></linearGradient><linearGradient id="o59" gradientUnits="userSpaceOnUse" x1="59.6" x2="368.8" y1="0" y2="0"><stop offset="0.000" stop-color="#00cca7"/><stop offset="0.355" stop-color="#00cc91"/><stop offset="0.535" stop-color="#00cc78"/><stop offset="0.632" stop-color="#00cc5c"/><stop offset="0.684" stop-color="#00cc3e"/><stop offset="0.697" stop-color="#00cc32"/><stop offset="0.703" stop-color="#0bcc2b"/><stop offset="0.710" stop-color="#1dcc29"/><stop offset="0.729" stop-color="#35cc22"/><stop offset="0.755" stop-color="#49cc13"/><stop offset="0.761" stop-color="#4dcc0d"/><stop offset="0.768" stop-color="#51cc00"/><stop offset="0.839" stop-color="#77cc00"/><stop offset="0.974" stop-color="#a8cc00"/><stop offset="1.000" stop-color="#afcc00"/></linearGradient><linearGradient id="o60" gradientUnits="userSpaceOnUse" x1="59.7" x2="372.0" y1="0" y2="0"><stop offset="0.000" stop-color="#00cca7"/><stop offset="0.350" stop-color="#00cc92"/><stop offset="0.529" stop-color="#00cc79"/><stop offset="0.624" stop-color="#00cc5d"/><stop offset="0.675" stop-color="#00cc41"/><stop offset="0.688" stop-color="#00cc35"/><stop offset="0.701" stop-color="#1fcc2d"/><stop offset="0.726" stop-color="#3ccc25"/><stop offset="0.758" stop-color="#51cc15"/><stop offset="0.764" stop-color="#55cc0f"/><stop offset="0.771" stop-color="#59cc00"/><stop offset="0.854" stop-color="#82cc00"/><stop offset="1.000" stop-color="#b3cc00"/></linearGradient><linearGradient id="o61" gradientUnits="userSpaceOnUse" x1="59.8" x2="375.2" y1="0" y2="0"><stop offset="0.000" stop-color="#00cca8"/><stop offset="0.348" stop-color="#00cc93"/><stop offset="0.525" stop-color="#00cc79"/><stop offset="0.620" stop-color="#00cc5d"/><stop offset="0.665" stop-color="#00cc44"/><stop offset="0.677" stop-color="#00cc39"/><stop offset="0.684" stop-color="#0ccc34"/><stop offset="0.690" stop-color="#1ecc32"/><stop offset="0.709" stop-color="#36cc2d"/><stop offset="0.759" stop-color="#58cc17"/><stop offset="0.772" stop-color="#5fcc0b"/><stop offset="0.778" stop-color="#63cc00"/><stop offset="0.873" stop-color="#8ecc00"/><stop offset="1.000" stop-color="#b7cc00"/></linearGradient><linearGradient id="o62" gradientUnits="userSpaceOnUse" x1="59.8" x2="378.4" y1="0" y2="0"><stop offset="0.000" stop-color="#00cca8"/><stop offset="0.344" stop-color="#00cc93"/><stop offset="0.519" stop-color="#00cc7a"/><stop offset="0.612" stop-color="#00cc5e"/><stop offset="0.663" stop-color="#00cc41"/><stop offset="0.669" stop-color="#00cc3c"/><stop offset="0.681" stop-color="#20cc36"/><stop offset="0.706" stop-color="#3ccc2f"/><stop offset="0.762" stop-color="#60cc19"/><stop offset="0.775" stop-color="#66cc0e"/><stop offset="0.781" stop-color="#69cc00"/><stop offset="0.881" stop-color="#96cc00"/><stop offset="1.000" stop-color="#bbcc00"/></linearGradient><linearGradient id="o63" gradientUnits="userSpaceOnUse" x1="59.9" x2="381.6" y1="0" y2="0"><stop offset="0.000" stop-color="#00cca9"/><stop offset="0.342" stop-color="#00cc94"/><stop offset="0.516" stop-color="#00cc7b"/><stop offset="0.609" stop-color="#00cc5e"/><stop offset="0.652" stop-color="#00cc45"/><stop offset="0.658" stop-color="#00cc40"/><stop offset="0.671" stop-color="#1fcc3a"/><stop offset="0.689" stop-color="#36cc36"/><stop offset="0.739" stop-color="#59cc27"/><stop offset="0.776" stop-color="#6ccc12"/><stop offset="0.789" stop-color="#72cc00"/><stop offset="0.901" stop-color="#a1cc00"/><stop offset="1.000" stop-color="#c0cc00"/></linearGradient><linearGradient id="o64" gradientUnits="userSpaceOnUse" x1="60.0" x2="384.8" y1="0" y2="0"><stop offset="0.000" stop-color="#00cca9"/><stop offset="0.337" stop-color="#00cc94"/><stop offset="0.509" stop-color="#00cc7c"/><stop offset="0.601" stop-color="#00cc60"/><stop offset="0.650" stop-color="#00cc42"/><stop offset="0.663" stop-color="#21cc3d"/><stop offset="0.687" stop-color="#3dcc38"/><stop offset="0.748" stop-color="#64cc25"/><stop offset="0.779" stop-color="#73cc13"/><stop offset="0.791" stop-color="#78cc00"/><stop offset="0.914" stop-color="#aacc00"/><stop offset="1.000" stop-color="#c4cc00"/></linearGradient><linearGradient id="o65" gradientUnits="userSpaceOnUse" x1="60.2" x2="387.9" y1="0" y2="0"><stop offset="0.000" stop-color="#00ccaa"/><stop offset="0.335" stop-color="#00cc95"/><stop offset="0.506" stop-color="#00cc7c"/><stop offset="0.591" stop-color="#00cc62"/><stop offset="0.640" stop-color="#00cc46"/><stop offset="0.652" stop-color="#1fcc41"/><stop offset="0.671" stop-color="#37cc3d"/><stop offset="0.720" stop-color="#5acc31"/><stop offset="0.774" stop-color="#76cc1b"/><stop offset="0.787" stop-color="#7bcc10"/><stop offset="0.793" stop-color="#7ecc04"/><stop offset="0.811" stop-color="#86cc00"/><stop offset="0.951" stop-color="#bacc00"/><stop offset="1.000" stop-color="#c8cc00"/></linearGradient><linearGradient id="o66" gradientUnits="userSpaceOnUse" x1="60.3" x2="391.1" y1="0" y2="0"><stop offset="0.000" stop-color="#00ccaa"/><stop offset="0.331" stop-color="#00cc96"/><stop offset="0.500" stop-color="#00cc7d"/><stop offset="0.590" stop-color="#00cc61"/><stop offset="0.633" stop-color="#00cc48"/><stop offset="0.639" stop-color="#14cc45"/><stop offset="0.651" stop-color="#2bcc43"/><stop offset="0.681" stop-color="#48cc3d"/><stop offset="0.753" stop-color="#71cc28"/><stop offset="0.789" stop-color="#81cc13"/><stop offset="0.801" stop-color="#86cc00"/><stop offset="0.934" stop-color="#b9cc00"/><stop offset="1.000" stop-color="#cccc00"/></linearGradient><linearGradient id="o67" gradientUnits="userSpaceOnUse" x1="60.4" x2="394.3" y1="0" y2="0"><stop offset="0.000" stop-color="#00ccaa"/><stop offset="0.329" stop-color="#00cc96"/><stop offset="0.491" stop-color="#00cc7f"/><stop offset="0.581" stop-color="#00cc63"/><stop offset="0.623" stop-color="#00cc4c"/><stop offset="0.635" stop-color="#20cc47"/><stop offset="0.653" stop-color="#38cc44"/><stop offset="0.701" stop-color="#5bcc3a"/><stop offset="0.772" stop-color="#7fcc21"/><stop offset="0.796" stop-color="#89cc0f"/><stop offset="0.802" stop-color="#8bcc00"/><stop offset="0.940" stop-color="#bfcc00"/><stop offset="0.994" stop-color="#ccc900"/><stop offset="1.000" stop-color="#ccc700"/></linearGradient><linearGradient id="o68" gradientUnits="userSpaceOnUse" x1="60.5" x2="397.5" y1="0" y2="0"><stop offset="0.000" stop-color="#00ccab"/><stop offset="0.325" stop-color="#00cc97"/><stop offset="0.491" stop-color="#00cc7e"/><stop offset="0.580" stop-color="#00cc62"/><stop offset="0.615" stop-color="#00cc4e"/><stop offset="0.621" stop-color="#15cc4b"/><stop offset="0.633" stop-color="#2bcc49"/><stop offset="0.663" stop-color="#48cc44"/><stop offset="0.734" stop-color="#72cc33"/><stop offset="0.787" stop-color="#8acc1c"/><stop offset="0.799" stop-color="#8fcc12"/><stop offset="0.811" stop-color="#94cc00"/><stop offset="0.959" stop-color="#c9cc00"/><stop offset="1.000" stop-color="#ccc300"/></linearGradient><linearGradient id="o69" gradientUnits="userSpaceOnUse" x1="60.7" x2="400.6" y1="0" y2="0"><stop offset="0.000" stop-color="#00ccab"/><stop offset="0.324" stop-color="#00cc98"/><stop offset="0.482" stop-color="#00cc80"/><stop offset="0.571" stop-color="#00cc65"/><stop offset="0.606" stop-color="#00cc51"/><stop offset="0.618" stop-color="#21cc4d"/><stop offset="0.635" stop-color="#38cc4a"/><stop offset="0.682" stop-color="#5ccc41"/><stop offset="0.771" stop-color="#88cc27"/><stop offset="0.800" stop-color="#94cc15"/><stop offset="0.806" stop-color="#96cc0e"/><stop offset="0.812" stop-color="#99cc00"/><stop offset="0.953" stop-color="#cccc00"/><stop offset="1.000" stop-color="#ccbf00"/></linearGradient><linearGradient id="o70" gradientUnits="userSpaceOnUse" x1="60.8" x2="403.8" y1="0" y2="0"><stop offset="0.000" stop-color="#00ccac"/><stop offset="0.320" stop-color="#00cc98"/><stop offset="0.483" stop-color="#00cc80"/><stop offset="0.564" stop-color="#00cc66"/><stop offset="0.599" stop-color="#00cc53"/><stop offset="0.605" stop-color="#16cc51"/><stop offset="0.616" stop-color="#2ccc4f"/><stop offset="0.651" stop-color="#4ecc49"/><stop offset="0.727" stop-color="#79cc38"/><stop offset="0.791" stop-color="#95cc1f"/><stop offset="0.808" stop-color="#9ccc11"/><stop offset="0.814" stop-color="#9ecc00"/><stop offset="0.942" stop-color="#cccb00"/><stop offset="1.000" stop-color="#ccbb00"/></linearGradient><linearGradient id="o71" gradientUnits="userSpaceOnUse" x1="61.0" x2="407.0" y1="0" y2="0"><stop offset="0.000" stop-color="#00ccac"/><stop offset="0.318" stop-color="#00cc99"/><stop offset="0.474" stop-color="#00cc82"/><stop offset="0.561" stop-color="#00cc66"/><stop offset="0.590" stop-color="#00cc57"/><stop offset="0.601" stop-color="#21cc53"/><stop offset="0.618" stop-color="#39cc50"/><stop offset="0.665" stop-color="#5dcc48"/><stop offset="0.769" stop-color="#91cc2c"/><stop offset="0.803" stop-color="#9fcc1a"/><stop offset="0.815" stop-color="#a3cc0c"/><stop offset="0.821" stop-color="#a6cc00"/><stop offset="0.931" stop-color="#ccca00"/><stop offset="1.000" stop-color="#ccb800"/></linearGradient><linearGradient id="o72" gradientUnits="userSpaceOnUse" x1="61.2" x2="410.1" y1="0" y2="0"><stop offset="0.000" stop-color="#00ccad"/><stop offset="0.320" stop-color="#00cc99"/><stop offset="0.474" stop-color="#00cc81"/><stop offset="0.554" stop-color="#00cc68"/><stop offset="0.583" stop-color="#00cc58"/><stop offset="0.589" stop-color="#17cc56"/><stop offset="0.600" stop-color="#2dcc55"/><stop offset="0.634" stop-color="#4ecc4f"/><stop offset="0.709" stop-color="#7acc40"/><stop offset="0.789" stop-color="#9dcc26"/><stop offset="0.811" stop-color="#a7cc16"/><stop offset="0.817" stop-color="#a9cc0f"/><stop offset="0.823" stop-color="#abcc00"/><stop offset="0.914" stop-color="#cccb00"/><stop offset="1.000" stop-color="#ccb400"/></linearGradient><linearGradient id="o73" gradientUnits="userSpaceOnUse" x1="61.4" x2="413.3" y1="0" y2="0"><stop offset="0.000" stop-color="#00ccad"/><stop offset="0.313" stop-color="#00cc9a"/><stop offset="0.466" stop-color="#00cc83"/><stop offset="0.551" stop-color="#00cc68"/><stop offset="0.574" stop-color="#00cc5c"/><stop offset="0.585" stop-color="#22cc58"/><stop offset="0.608" stop-color="#40cc55"/><stop offset="0.659" stop-color="#65cc4c"/><stop offset="0.767" stop-color="#99cc31"/><stop offset="0.807" stop-color="#a9cc1e"/><stop offset="0.818" stop-color="#aecc13"/><stop offset="0.830" stop-color="#b2cc00"/><stop offset="0.903" stop-color="#ccca00"/><stop offset="1.000" stop-color="#ccb000"/></linearGradient><linearGradient id="o74" gradientUnits="userSpaceOnUse" x1="61.6" x2="416.4" y1="0" y2="0"><stop offset="0.000" stop-color="#00ccae"/><stop offset="0.315" stop-color="#00cc9a"/><stop offset="0.466" stop-color="#00cc83"/><stop offset="0.545" stop-color="#00cc69"/><stop offset="0.567" stop-color="#00cc5d"/><stop offset="0.573" stop-color="#18cc5c"/><stop offset="0.584" stop-color="#2ecc5a"/><stop offset="0.618" stop-color="#4fcc55"/><stop offset="0.691" stop-color="#7bcc48"/><stop offset="0.781" stop-color="#a4cc2e"/><stop offset="0.815" stop-color="#b1cc1b"/><stop offset="0.826" stop-color="#b6cc0d"/><stop offset="0.831" stop-color="#b8cc00"/><stop offset="0.888" stop-color="#cccb00"/><stop offset="1.000" stop-color="#ccad00"/></linearGradient><linearGradient id="o75" gradientUnits="userSpaceOnUse" x1="61.8" x2="419.6" y1="0" y2="0"><stop offset="0.000" stop-color="#00ccae"/><stop offset="0.313" stop-color="#00cc9b"/><stop offset="0.464" stop-color="#00cc83"/><stop offset="0.542" stop-color="#00cc69"/><stop offset="0.559" stop-color="#00cc60"/><stop offset="0.564" stop-color="#15cc5e"/><stop offset="0.575" stop-color="#2dcc5d"/><stop offset="0.603" stop-color="#4bcc59"/><stop offset="0.670" stop-color="#76cc4e"/><stop offset="0.777" stop-color="#a7cc32"/><stop offset="0.816" stop-color="#b6cc1d"/><stop offset="0.827" stop-color="#bbcc12"/><stop offset="0.832" stop-color="#bdcc04"/><stop offset="0.844" stop-color="#c1cc00"/><stop offset="0.877" stop-color="#ccca00"/><stop offset="1.000" stop-color="#cca900"/></linearGradient><linearGradient id="o76" gradientUnits="userSpaceOnUse" x1="62.1" x2="422.8" y1="0" y2="0"><stop offset="0.000" stop-color="#00ccaf"/><stop offset="0.309" stop-color="#00cc9c"/><stop offset="0.459" stop-color="#00cc85"/><stop offset="0.536" stop-color="#00cc6b"/><stop offset="0.552" stop-color="#00cc62"/><stop offset="0.558" stop-color="#1acc61"/><stop offset="0.569" stop-color="#2fcc5f"/><stop offset="0.602" stop-color="#50cc5b"/><stop offset="0.674" stop-color="#7dcc4f"/><stop offset="0.779" stop-color="#accc33"/><stop offset="0.818" stop-color="#bccc1f"/><stop offset="0.829" stop-color="#c0cc15"/><stop offset="0.840" stop-color="#c5cc00"/><stop offset="0.867" stop-color="#ccc900"/><stop offset="0.994" stop-color="#cca700"/><stop offset="1.000" stop-color="#cca600"/></linearGradient><linearGradient id="o77" gradientUnits="userSpaceOnUse" x1="62.4" x2="425.9" y1="0" y2="0"><stop offset="0.000" stop-color="#00ccaf"/><stop offset="0.308" stop-color="#00cc9c"/><stop offset="0.456" stop-color="#00cc85"/><stop offset="0.533" stop-color="#00cc6b"/><stop offset="0.544" stop-color="#00cc65"/><stop offset="0.549" stop-color="#17cc63"/><stop offset="0.560" stop-color="#2ecc62"/><stop offset="0.588" stop-color="#4ccc5e"/><stop offset="0.654" stop-color="#77cc54"/><stop offset="0.769" stop-color="#adcc38"/><stop offset="0.819" stop-color="#c1cc21"/><stop offset="0.835" stop-color="#c8cc11"/><stop offset="0.841" stop-color="#cacc00"/><stop offset="0.978" stop-color="#cca700"/><stop offset="1.000" stop-color="#cca200"/></linearGradient><linearGradient id="o78" gradientUnits="userSpaceOnUse" x1="62.7" x2="429.1" y1="0" y2="0"><stop offset="0.000" stop-color="#00ccb0"/><stop offset="0.304" stop-color="#00cc9d"/><stop offset="0.451" stop-color="#00cc86"/><stop offset="0.527" stop-color="#00cc6c"/><stop offset="0.538" stop-color="#00cc67"/><stop offset="0.543" stop-color="#1ccc66"/><stop offset="0.554" stop-color="#30cc64"/><stop offset="0.587" stop-color="#52cc60"/><stop offset="0.658" stop-color="#7ecc55"/><stop offset="0.772" stop-color="#b3cc39"/><stop offset="0.821" stop-color="#c7cc23"/><stop offset="0.837" stop-color="#ccca13"/><stop offset="0.848" stop-color="#ccc600"/><stop offset="0.967" stop-color="#cca500"/><stop offset="1.000" stop-color="#cc9f00"/></linearGradient><linearGradient id="o79" gradientUnits="userSpaceOnUse" x1="63.0" x2="432.2" y1="0" y2="0"><stop offset="0.000" stop-color="#00ccb1"/><stop offset="0.303" stop-color="#00cc9e"/><stop offset="0.449" stop-color="#00cc87"/><stop offset="0.524" stop-color="#00cc6c"/><stop offset="0.530" stop-color="#00cc6a"/><stop offset="0.535" stop-color="#19cc68"/><stop offset="0.546" stop-color="#2fcc67"/><stop offset="0.578" stop-color="#51cc63"/><stop offset="0.649" stop-color="#7ecc58"/><stop offset="0.773" stop-color="#b8cc3b"/><stop offset="0.822" stop-color="#cccc25"/><stop offset="0.843" stop-color="#ccc30e"/><stop offset="0.849" stop-color="#ccc100"/><stop offset="0.973" stop-color="#cca100"/><stop offset="1.000" stop-color="#cc9c00"/></linearGradient><linearGradient id="o80" gradientUnits="userSpaceOnUse" x1="63.3" x2="435.4" y1="0" y2="0"><stop offset="0.000" stop-color="#00ccb1"/><stop offset="0.299" stop-color="#00cc9f"/><stop offset="0.444" stop-color="#00cc88"/><stop offset="0.519" stop-color="#00cc6e"/><stop offset="0.524" stop-color="#00cc6b"/><stop offset="0.529" stop-color="#1dcc6a"/><stop offset="0.545" stop-color="#39cc69"/><stop offset="0.583" stop-color="#5bcc64"/><stop offset="0.668" stop-color="#8ecc56"/><stop offset="0.781" stop-color="#c1cc3a"/><stop offset="0.813" stop-color="#ccca2c"/><stop offset="0.840" stop-color="#ccc018"/><stop offset="0.845" stop-color="#ccbe11"/><stop offset="0.850" stop-color="#ccbc00"/><stop offset="0.984" stop-color="#cc9b00"/><stop offset="1.000" stop-color="#cc9900"/></linearGradient><linearGradient id="o81" gradientUnits="userSpaceOnUse" x1="63.6" x2="438.6" y1="0" y2="0"><stop offset="0.000" stop-color="#00ccb2"/><stop offset="0.298" stop-color="#00cc9f"/><stop offset="0.441" stop-color="#00cc88"/><stop offset="0.516" stop-color="#00cc6e"/><stop offset="0.521" stop-color="#1bcc6d"/><stop offset="0.532" stop-color="#30cc6c"/><stop offset="0.564" stop-color="#53cc68"/><stop offset="0.633" stop-color="#80cc5e"/><stop offset="0.766" stop-color="#bfcc41"/><stop offset="0.803" stop-color="#ccc933"/><stop offset="0.840" stop-color="#ccbb1a"/><stop offset="0.851" stop-color="#ccb70b"/><stop offset="0.856" stop-color="#ccb600"/><stop offset="0.995" stop-color="#cc9600"/><stop offset="1.000" stop-color="#cc9500"/></linearGradient><linearGradient id="o82" gradientUnits="userSpaceOnUse" x1="63.9" x2="441.7" y1="0" y2="0"><stop offset="0.000" stop-color="#00ccb2"/><stop offset="0.296" stop-color="#00cca0"/><stop offset="0.434" stop-color="#00cc8a"/><stop offset="0.508" stop-color="#00cc71"/><stop offset="0.513" stop-color="#18cc6f"/><stop offset="0.524" stop-color="#2fcc6e"/><stop offset="0.550" stop-color="#4dcc6b"/><stop offset="0.614" stop-color="#7acc63"/><stop offset="0.757" stop-color="#c0cc46"/><stop offset="0.788" stop-color="#ccca3b"/><stop offset="0.841" stop-color="#ccb61c"/><stop offset="0.852" stop-color="#ccb310"/><stop offset="0.857" stop-color="#ccb100"/><stop offset="1.000" stop-color="#cc9200"/></linearGradient><linearGradient id="o83" gradientUnits="userSpaceOnUse" x1="64.2" x2="444.9" y1="0" y2="0"><stop offset="0.000" stop-color="#00ccb3"/><stop offset="0.293" stop-color="#00cca1"/><stop offset="0.435" stop-color="#00cc8a"/><stop offset="0.503" stop-color="#00cc72"/><stop offset="0.508" stop-color="#1dcc72"/><stop offset="0.518" stop-color="#32cc71"/><stop offset="0.550" stop-color="#54cc6d"/><stop offset="0.618" stop-color="#82cc64"/><stop offset="0.759" stop-color="#c6cc47"/><stop offset="0.785" stop-color="#ccc73d"/><stop offset="0.843" stop-color="#ccb21d"/><stop offset="0.853" stop-color="#ccae12"/><stop offset="0.864" stop-color="#ccab00"/><stop offset="1.000" stop-color="#cc8f00"/></linearGradient><linearGradient id="o84" gradientUnits="userSpaceOnUse" x1="64.5" x2="448.0" y1="0" y2="0"><stop offset="0.000" stop-color="#00ccb3"/><stop offset="0.292" stop-color="#00cca2"/><stop offset="0.427" stop-color="#00cc8c"/><stop offset="0.495" stop-color="#00cc75"/><stop offset="0.500" stop-color="#1acc74"/><stop offset="0.510" stop-color="#30cc73"/><stop offset="0.536" stop-color="#4fcc70"/><stop offset="0.589" stop-color="#76cc6b"/><stop offset="0.740" stop-color="#c2cc4e"/><stop offset="0.766" stop-color="#ccca47"/><stop offset="0.844" stop-color="#ccad1e"/><stop offset="0.859" stop-color="#cca80d"/><stop offset="0.865" stop-color="#cca700"/><stop offset="1.000" stop-color="#cc8c00"/></linearGradient><linearGradient id="o85" gradientUnits="userSpaceOnUse" x1="64.8" x2="451.2" y1="0" y2="0"><stop offset="0.000" stop-color="#00ccb4"/><stop offset="0.294" stop-color="#00cca2"/><stop offset="0.428" stop-color="#00cc8c"/><stop offset="0.490" stop-color="#00cc77"/><stop offset="0.495" stop-color="#1fcc76"/><stop offset="0.510" stop-color="#3bcc76"/><stop offset="0.541" stop-color="#5dcc74"/><stop offset="0.603" stop-color="#86cc6d"/><stop offset="0.753" stop-color="#cccb4c"/><stop offset="0.840" stop-color="#ccaa22"/><stop offset="0.861" stop-color="#cca410"/><stop offset="0.866" stop-color="#cca300"/><stop offset="1.000" stop-color="#cc8900"/></linearGradient><linearGradient id="o86" gradientUnits="userSpaceOnUse" x1="65.1" x2="454.4" y1="0" y2="0"><stop offset="0.000" stop-color="#00ccb4"/><stop offset="0.292" stop-color="#00cca3"/><stop offset="0.426" stop-color="#00cc8d"/><stop offset="0.482" stop-color="#02cc7b"/><stop offset="0.487" stop-color="#1fcc7a"/><stop offset="0.497" stop-color="#36cc7a"/><stop offset="0.523" stop-color="#56cc7a"/><stop offset="0.574" stop-color="#7dcc76"/><stop offset="0.672" stop-color="#adcc62"/><stop offset="0.744" stop-color="#ccca50"/><stop offset="0.846" stop-color="#cca520"/><stop offset="0.862" stop-color="#cca013"/><stop offset="0.872" stop-color="#cc9d00"/><stop offset="1.000" stop-color="#cc8600"/></linearGradient><linearGradient id="o87" gradientUnits="userSpaceOnUse" x1="65.4" x2="457.5" y1="0" y2="0"><stop offset="0.000" stop-color="#00ccb5"/><stop offset="0.289" stop-color="#00cca4"/><stop offset="0.421" stop-color="#00cc8e"/><stop offset="0.462" stop-color="#04cc83"/><stop offset="0.472" stop-color="#06cc80"/><stop offset="0.477" stop-color="#13cc7f"/><stop offset="0.482" stop-color="#28cc7f"/><stop offset="0.497" stop-color="#44cc7e"/><stop offset="0.533" stop-color="#68cc7d"/><stop offset="0.599" stop-color="#91cc76"/><stop offset="0.731" stop-color="#ccca56"/><stop offset="0.843" stop-color="#cca224"/><stop offset="0.868" stop-color="#cc9b0e"/><stop offset="0.873" stop-color="#cc9900"/><stop offset="1.000" stop-color="#cc8300"/></linearGradient><linearGradient id="o88" gradientUnits="userSpaceOnUse" x1="65.8" x2="460.7" y1="0" y2="0"><stop offset="0.000" stop-color="#00ccb6"/><stop offset="0.288" stop-color="#00cca5"/><stop offset="0.419" stop-color="#00cc8f"/><stop offset="0.470" stop-color="#0ccc83"/><stop offset="0.475" stop-color="#2acc83"/><stop offset="0.485" stop-color="#3fcc83"/><stop offset="0.510" stop-color="#5ecc82"/><stop offset="0.561" stop-color="#83cc7f"/><stop offset="0.662" stop-color="#b3cc6d"/><stop offset="0.722" stop-color="#ccc959"/><stop offset="0.833" stop-color="#cca12a"/><stop offset="0.864" stop-color="#cc9816"/><stop offset="0.879" stop-color="#cc9500"/><stop offset="1.000" stop-color="#cc8000"/></linearGradient><linearGradient id="o89" gradientUnits="userSpaceOnUse" x1="66.1" x2="463.8" y1="0" y2="0"><stop offset="0.000" stop-color="#00ccb6"/><stop offset="0.286" stop-color="#00cca5"/><stop offset="0.417" stop-color="#02cc90"/><stop offset="0.462" stop-color="#11cc87"/><stop offset="0.467" stop-color="#2bcc87"/><stop offset="0.477" stop-color="#41cc87"/><stop offset="0.503" stop-color="#61cc87"/><stop offset="0.553" stop-color="#85cc84"/><stop offset="0.653" stop-color="#b4cc73"/><stop offset="0.709" stop-color="#cccb5f"/><stop offset="0.819" stop-color="#cca131"/><stop offset="0.864" stop-color="#cc9518"/><stop offset="0.874" stop-color="#cc920d"/><stop offset="0.879" stop-color="#cc9100"/><stop offset="1.000" stop-color="#cc7e00"/></linearGradient><linearGradient id="o90" gradientUnits="userSpaceOnUse" x1="66.5" x2="467.0" y1="0" y2="0"><stop offset="0.000" stop-color="#00ccb7"/><stop offset="0.284" stop-color="#00cca6"/><stop offset="0.403" stop-color="#02cc94"/><stop offset="0.453" stop-color="#14cc8c"/><stop offset="0.458" stop-color="#1fcc8a"/><stop offset="0.463" stop-color="#34cc8b"/><stop offset="0.478" stop-color="#4fcc8b"/><stop offset="0.512" stop-color="#72cc8a"/><stop offset="0.577" stop-color="#98cc86"/><stop offset="0.672" stop-color="#c1cc71"/><stop offset="0.701" stop-color="#ccc965"/><stop offset="0.756" stop-color="#ccb24b"/><stop offset="0.856" stop-color="#cc9320"/><stop offset="0.876" stop-color="#cc8e0f"/><stop offset="0.881" stop-color="#cc8d02"/><stop offset="1.000" stop-color="#cc7b00"/></linearGradient><linearGradient id="o91" gradientUnits="userSpaceOnUse" x1="66.9" x2="470.2" y1="0" y2="0"><stop offset="0.000" stop-color="#00ccb7"/><stop offset="0.287" stop-color="#00cca7"/><stop offset="0.386" stop-color="#01cc98"/><stop offset="0.450" stop-color="#1acc8e"/><stop offset="0.455" stop-color="#36cc8e"/><stop offset="0.470" stop-color="#52cc8f"/><stop offset="0.505" stop-color="#75cc8f"/><stop offset="0.569" stop-color="#9acc8a"/><stop offset="0.668" stop-color="#c5cc75"/><stop offset="0.693" stop-color="#ccc86b"/><stop offset="0.738" stop-color="#ccb552"/><stop offset="0.856" stop-color="#cc9021"/><stop offset="0.876" stop-color="#cc8b12"/><stop offset="0.886" stop-color="#cc8900"/><stop offset="1.000" stop-color="#cc7800"/></linearGradient><linearGradient id="o92" gradientUnits="userSpaceOnUse" x1="67.4" x2="473.4" y1="0" y2="0"><stop offset="0.000" stop-color="#00ccb8"/><stop offset="0.286" stop-color="#00cca7"/><stop offset="0.374" stop-color="#02cc9b"/><stop offset="0.443" stop-color="#1ecc92"/><stop offset="0.448" stop-color="#37cc92"/><stop offset="0.458" stop-color="#4dcc92"/><stop offset="0.483" stop-color="#6bcc93"/><stop offset="0.532" stop-color="#8ecc91"/><stop offset="0.635" stop-color="#bbcc82"/><stop offset="0.680" stop-color="#ccca73"/><stop offset="0.739" stop-color="#ccb052"/><stop offset="0.857" stop-color="#cc8c22"/><stop offset="0.882" stop-color="#cc860e"/><stop offset="0.887" stop-color="#cc8500"/><stop offset="1.000" stop-color="#cc7500"/></linearGradient><linearGradient id="o93" gradientUnits="userSpaceOnUse" x1="67.9" x2="476.5" y1="0" y2="0"><stop offset="0.000" stop-color="#00ccb9"/><stop offset="0.283" stop-color="#00cca8"/><stop offset="0.361" stop-color="#02cc9e"/><stop offset="0.434" stop-color="#22cc96"/><stop offset="0.439" stop-color="#2ecc95"/><stop offset="0.444" stop-color="#41cc95"/><stop offset="0.459" stop-color="#5bcc96"/><stop offset="0.493" stop-color="#7ccc96"/><stop offset="0.556" stop-color="#a0cc93"/><stop offset="0.654" stop-color="#c7cc80"/><stop offset="0.678" stop-color="#ccc675"/><stop offset="0.741" stop-color="#ccab51"/><stop offset="0.859" stop-color="#cc8822"/><stop offset="0.883" stop-color="#cc8310"/><stop offset="0.893" stop-color="#cc8100"/><stop offset="1.000" stop-color="#cc7200"/></linearGradient><linearGradient id="o94" gradientUnits="userSpaceOnUse" x1="68.4" x2="479.7" y1="0" y2="0"><stop offset="0.000" stop-color="#00ccb9"/><stop offset="0.282" stop-color="#00cca9"/><stop offset="0.350" stop-color="#02cca1"/><stop offset="0.432" stop-color="#27cc98"/><stop offset="0.437" stop-color="#43cc99"/><stop offset="0.451" stop-color="#5dcc99"/><stop offset="0.485" stop-color="#7ecc9a"/><stop offset="0.549" stop-color="#a2cc97"/><stop offset="0.646" stop-color="#c8cc86"/><stop offset="0.675" stop-color="#ccc378"/><stop offset="0.743" stop-color="#cca650"/><stop offset="0.864" stop-color="#cc8420"/><stop offset="0.883" stop-color="#cc7f12"/><stop offset="0.888" stop-color="#cc7e0c"/><stop offset="0.893" stop-color="#cc7d00"/><stop offset="1.000" stop-color="#cc6f00"/></linearGradient><linearGradient id="o95" gradientUnits="userSpaceOnUse" x1="69.0" x2="482.9" y1="0" y2="0"><stop offset="0.000" stop-color="#00ccba"/><stop offset="0.280" stop-color="#00ccaa"/><stop offset="0.338" stop-color="#02cca3"/><stop offset="0.425" stop-color="#2bcc9c"/><stop offset="0.430" stop-color="#44cc9c"/><stop offset="0.444" stop-color="#60cc9c"/><stop offset="0.478" stop-color="#81cc9d"/><stop offset="0.541" stop-color="#a4cc9b"/><stop offset="0.643" stop-color="#cbcc89"/><stop offset="0.744" stop-color="#cca250"/><stop offset="0.865" stop-color="#cc8021"/><stop offset="0.889" stop-color="#cc7b0f"/><stop offset="0.894" stop-color="#cc7a05"/><stop offset="0.903" stop-color="#cc7800"/><stop offset="1.000" stop-color="#cc6c00"/></linearGradient><linearGradient id="o96" gradientUnits="userSpaceOnUse" x1="69.5" x2="486.0" y1="0" y2="0"><stop offset="0.000" stop-color="#00ccba"/><stop offset="0.282" stop-color="#00ccab"/><stop offset="0.330" stop-color="#03cca5"/><stop offset="0.416" stop-color="#2ecc9f"/><stop offset="0.426" stop-color="#4dcc9f"/><stop offset="0.440" stop-color="#66cca0"/><stop offset="0.474" stop-color="#85cca1"/><stop offset="0.536" stop-color="#a7cc9f"/><stop offset="0.632" stop-color="#cbcc8f"/><stop offset="0.727" stop-color="#cca457"/><stop offset="0.871" stop-color="#cc7c1f"/><stop offset="0.890" stop-color="#cc7710"/><stop offset="0.900" stop-color="#cc7600"/><stop offset="1.000" stop-color="#cc6a00"/></linearGradient><linearGradient id="o97" gradientUnits="userSpaceOnUse" x1="70.1" x2="489.2" y1="0" y2="0"><stop offset="0.000" stop-color="#00ccbb"/><stop offset="0.281" stop-color="#00ccac"/><stop offset="0.319" stop-color="#02cca8"/><stop offset="0.410" stop-color="#32cca2"/><stop offset="0.414" stop-color="#3ccca2"/><stop offset="0.419" stop-color="#4fcca2"/><stop offset="0.433" stop-color="#68cca3"/><stop offset="0.467" stop-color="#88cca4"/><stop offset="0.529" stop-color="#a9cca3"/><stop offset="0.624" stop-color="#cccc94"/><stop offset="0.724" stop-color="#cca25a"/><stop offset="0.767" stop-color="#cc9348"/><stop offset="0.871" stop-color="#cc781f"/><stop offset="0.895" stop-color="#cc730d"/><stop offset="0.900" stop-color="#cc7200"/><stop offset="1.000" stop-color="#cc6700"/></linearGradient><linearGradient id="o98" gradientUnits="userSpaceOnUse" x1="70.7" x2="492.3" y1="0" y2="0"><stop offset="0.000" stop-color="#00ccbc"/><stop offset="0.280" stop-color="#00ccad"/><stop offset="0.308" stop-color="#01ccaa"/><stop offset="0.408" stop-color="#37cca4"/><stop offset="0.412" stop-color="#51cca5"/><stop offset="0.427" stop-color="#6acca6"/><stop offset="0.460" stop-color="#8acca7"/><stop offset="0.517" stop-color="#a9cca7"/><stop offset="0.611" stop-color="#cbcc9a"/><stop offset="0.706" stop-color="#cca665"/><stop offset="0.744" stop-color="#cc964f"/><stop offset="0.872" stop-color="#cc7520"/><stop offset="0.896" stop-color="#cc700f"/><stop offset="0.905" stop-color="#cc6e00"/><stop offset="1.000" stop-color="#cc6400"/></linearGradient><linearGradient id="o99" gradientUnits="userSpaceOnUse" x1="71.3" x2="495.5" y1="0" y2="0"><stop offset="0.000" stop-color="#00ccbc"/><stop offset="0.282" stop-color="#00ccad"/><stop offset="0.300" stop-color="#02ccac"/><stop offset="0.399" stop-color="#3acca7"/><stop offset="0.408" stop-color="#59cca7"/><stop offset="0.427" stop-color="#75cca9"/><stop offset="0.465" stop-color="#94ccaa"/><stop offset="0.535" stop-color="#b4cca8"/><stop offset="0.610" stop-color="#ccca9b"/><stop offset="0.709" stop-color="#cca163"/><stop offset="0.742" stop-color="#cc9350"/><stop offset="0.873" stop-color="#cc7221"/><stop offset="0.897" stop-color="#cc6d11"/><stop offset="0.906" stop-color="#cc6b00"/><stop offset="1.000" stop-color="#cc6100"/></linearGradient><linearGradient id="o100" gradientUnits="userSpaceOnUse" x1="71.9" x2="498.6" y1="0" y2="0"><stop offset="0.000" stop-color="#00ccbd"/><stop offset="0.280" stop-color="#00ccae"/><stop offset="0.294" stop-color="#03ccad"/><stop offset="0.393" stop-color="#3dccaa"/><stop offset="0.402" stop-color="#5bccaa"/><stop offset="0.421" stop-color="#78ccab"/><stop offset="0.458" stop-color="#97ccad"/><stop offset="0.523" stop-color="#b4ccac"/><stop offset="0.598" stop-color="#cccba1"/><stop offset="0.696" stop-color="#cca36b"/><stop offset="0.738" stop-color="#cc9151"/><stop offset="0.874" stop-color="#cc6e21"/><stop offset="0.902" stop-color="#cc690e"/><stop offset="0.907" stop-color="#cc6804"/><stop offset="0.916" stop-color="#cc6700"/><stop offset="1.000" stop-color="#cc5e00"/></linearGradient><linearGradient id="o101" gradientUnits="userSpaceOnUse" x1="72.5" x2="501.8" y1="0" y2="0"><stop offset="0.000" stop-color="#00ccbe"/><stop offset="0.279" stop-color="#00ccb0"/><stop offset="0.386" stop-color="#40ccac"/><stop offset="0.391" stop-color="#4accac"/><stop offset="0.395" stop-color="#5cccac"/><stop offset="0.409" stop-color="#74ccad"/><stop offset="0.442" stop-color="#93ccaf"/><stop offset="0.498" stop-color="#afccb0"/><stop offset="0.586" stop-color="#cccca6"/><stop offset="0.684" stop-color="#cca673"/><stop offset="0.735" stop-color="#cc8e52"/><stop offset="0.874" stop-color="#cc6b22"/><stop offset="0.902" stop-color="#cc6510"/><stop offset="0.912" stop-color="#cc6400"/><stop offset="1.000" stop-color="#cc5b00"/></linearGradient><linearGradient id="o102" gradientUnits="userSpaceOnUse" x1="73.1" x2="504.9" y1="0" y2="0"><stop offset="0.000" stop-color="#00ccbe"/><stop offset="0.278" stop-color="#02ccb1"/><stop offset="0.384" stop-color="#45ccae"/><stop offset="0.389" stop-color="#5dccaf"/><stop offset="0.403" stop-color="#76ccb0"/><stop offset="0.435" stop-color="#95ccb2"/><stop offset="0.491" stop-color="#b1ccb3"/><stop offset="0.579" stop-color="#cccbaa"/><stop offset="0.676" stop-color="#cca677"/><stop offset="0.736" stop-color="#cc8a52"/><stop offset="0.880" stop-color="#cc6720"/><stop offset="0.907" stop-color="#cc610d"/><stop offset="0.912" stop-color="#cc6000"/><stop offset="1.000" stop-color="#cc5800"/></linearGradient><linearGradient id="o103" gradientUnits="userSpaceOnUse" x1="73.7" x2="508.1" y1="0" y2="0"><stop offset="0.000" stop-color="#00ccbf"/><stop offset="0.271" stop-color="#02ccb3"/><stop offset="0.376" stop-color="#47ccb1"/><stop offset="0.385" stop-color="#65ccb1"/><stop offset="0.404" stop-color="#80ccb3"/><stop offset="0.440" stop-color="#9fccb5"/><stop offset="0.505" stop-color="#baccb5"/><stop offset="0.573" stop-color="#cccaac"/><stop offset="0.670" stop-color="#cca57b"/><stop offset="0.734" stop-color="#cc8752"/><stop offset="0.881" stop-color="#cc6421"/><stop offset="0.908" stop-color="#cc5e0e"/><stop offset="0.917" stop-color="#cc5d00"/><stop offset="1.000" stop-color="#cc5500"/></linearGradient><linearGradient id="o104" gradientUnits="userSpaceOnUse" x1="74.3" x2="511.2" y1="0" y2="0"><stop offset="0.000" stop-color="#00ccc0"/><stop offset="0.265" stop-color="#02ccb4"/><stop offset="0.370" stop-color="#49ccb3"/><stop offset="0.379" stop-color="#66ccb3"/><stop offset="0.397" stop-color="#82ccb5"/><stop offset="0.434" stop-color="#a0ccb7"/><stop offset="0.493" stop-color="#baccb8"/><stop offset="0.566" stop-color="#cccaaf"/><stop offset="0.662" stop-color="#cca57f"/><stop offset="0.731" stop-color="#cc8553"/><stop offset="0.881" stop-color="#cc6121"/><stop offset="0.909" stop-color="#cc5b10"/><stop offset="0.913" stop-color="#cc5a0b"/><stop offset="0.918" stop-color="#cc5900"/><stop offset="1.000" stop-color="#cc5200"/></linearGradient><linearGradient id="o105" gradientUnits="userSpaceOnUse" x1="75.0" x2="514.4" y1="0" y2="0"><stop offset="0.000" stop-color="#00ccc0"/><stop offset="0.255" stop-color="#00ccb6"/><stop offset="0.364" stop-color="#4bccb5"/><stop offset="0.368" stop-color="#56ccb5"/><stop offset="0.373" stop-color="#67ccb5"/><stop offset="0.386" stop-color="#7eccb6"/><stop offset="0.418" stop-color="#9cccb9"/><stop offset="0.468" stop-color="#b5ccbb"/><stop offset="0.555" stop-color="#cccab3"/><stop offset="0.645" stop-color="#cca988"/><stop offset="0.727" stop-color="#cc8254"/><stop offset="0.882" stop-color="#cc5d22"/><stop offset="0.914" stop-color="#cc570d"/><stop offset="0.923" stop-color="#cc5500"/><stop offset="1.000" stop-color="#cc4f00"/></linearGradient><linearGradient id="o106" gradientUnits="userSpaceOnUse" x1="75.6" x2="517.6" y1="0" y2="0"><stop offset="0.000" stop-color="#00ccc1"/><stop offset="0.252" stop-color="#02ccb7"/><stop offset="0.360" stop-color="#4fccb7"/><stop offset="0.365" stop-color="#62ccb7"/><stop offset="0.374" stop-color="#76ccb8"/><stop offset="0.401" stop-color="#95ccba"/><stop offset="0.446" stop-color="#b1ccbc"/><stop offset="0.541" stop-color="#ccccb8"/><stop offset="0.631" stop-color="#ccad90"/><stop offset="0.725" stop-color="#cc7f55"/><stop offset="0.883" stop-color="#cc5a22"/><stop offset="0.914" stop-color="#cc530f"/><stop offset="0.923" stop-color="#cc5200"/><stop offset="1.000" stop-color="#cc4c00"/></linearGradient><linearGradient id="o107" gradientUnits="userSpaceOnUse" x1="76.2" x2="520.7" y1="0" y2="0"><stop offset="0.000" stop-color="#00ccc2"/><stop offset="0.247" stop-color="#02ccb9"/><stop offset="0.354" stop-color="#50ccb9"/><stop offset="0.363" stop-color="#6eccb9"/><stop offset="0.381" stop-color="#89ccbb"/><stop offset="0.417" stop-color="#a7ccbd"/><stop offset="0.471" stop-color="#bdccbf"/><stop offset="0.538" stop-color="#cccab9"/><stop offset="0.628" stop-color="#ccab91"/><stop offset="0.722" stop-color="#cc7d56"/><stop offset="0.888" stop-color="#cc5621"/><stop offset="0.915" stop-color="#cc5011"/><stop offset="0.919" stop-color="#cc4f0c"/><stop offset="0.924" stop-color="#cc4e00"/><stop offset="1.000" stop-color="#cc4900"/></linearGradient><linearGradient id="o108" gradientUnits="userSpaceOnUse" x1="76.8" x2="523.9" y1="0" y2="0"><stop offset="0.000" stop-color="#00ccc3"/><stop offset="0.241" stop-color="#02ccba"/><stop offset="0.348" stop-color="#52ccba"/><stop offset="0.357" stop-color="#6eccbb"/><stop offset="0.375" stop-color="#8accbc"/><stop offset="0.411" stop-color="#a9ccbf"/><stop offset="0.464" stop-color="#bfccc1"/><stop offset="0.531" stop-color="#cccabb"/><stop offset="0.616" stop-color="#ccad96"/><stop offset="0.719" stop-color="#cc7a56"/><stop offset="0.888" stop-color="#cc5221"/><stop offset="0.920" stop-color="#cc4c0e"/><stop offset="0.929" stop-color="#cc4a00"/><stop offset="1.000" stop-color="#cc4600"/></linearGradient><linearGradient id="o109" gradientUnits="userSpaceOnUse" x1="77.4" x2="527.1" y1="0" y2="0"><stop offset="0.000" stop-color="#00ccc3"/><stop offset="0.236" stop-color="#01ccbc"/><stop offset="0.342" stop-color="#53ccbc"/><stop offset="0.347" stop-color="#5dccbc"/><stop offset="0.351" stop-color="#6eccbc"/><stop offset="0.369" stop-color="#8bccbe"/><stop offset="0.404" stop-color="#aaccc0"/><stop offset="0.458" stop-color="#c0ccc3"/><stop offset="0.524" stop-color="#cccabd"/><stop offset="0.609" stop-color="#ccae9a"/><stop offset="0.707" stop-color="#cc7b5b"/><stop offset="0.893" stop-color="#cc4e20"/><stop offset="0.920" stop-color="#cc4810"/><stop offset="0.924" stop-color="#cc480b"/><stop offset="0.929" stop-color="#cc4700"/><stop offset="1.000" stop-color="#cc4200"/></linearGradient><linearGradient id="o110" gradientUnits="userSpaceOnUse" x1="78.0" x2="530.2" y1="0" y2="0"><stop offset="0.000" stop-color="#00ccc4"/><stop offset="0.229" stop-color="#00ccbe"/><stop offset="0.339" stop-color="#55ccbe"/><stop offset="0.344" stop-color="#69ccbe"/><stop offset="0.352" stop-color="#7cccbf"/><stop offset="0.379" stop-color="#9cccc0"/><stop offset="0.419" stop-color="#b6ccc3"/><stop offset="0.485" stop-color="#c8ccc4"/><stop offset="0.524" stop-color="#ccc8bd"/><stop offset="0.608" stop-color="#ccab99"/><stop offset="0.714" stop-color="#cc7558"/><stop offset="0.890" stop-color="#cc4b22"/><stop offset="0.921" stop-color="#cc4511"/><stop offset="0.934" stop-color="#cc4300"/><stop offset="1.000" stop-color="#cc3f00"/></linearGradient><linearGradient id="o111" gradientUnits="userSpaceOnUse" x1="78.6" x2="533.4" y1="0" y2="0"><stop offset="0.000" stop-color="#00ccc5"/><stop offset="0.228" stop-color="#02ccbf"/><stop offset="0.333" stop-color="#56ccbf"/><stop offset="0.342" stop-color="#74ccc0"/><stop offset="0.360" stop-color="#8fccc1"/><stop offset="0.395" stop-color="#aeccc3"/><stop offset="0.443" stop-color="#c2ccc6"/><stop offset="0.509" stop-color="#cccac2"/><stop offset="0.588" stop-color="#ccb1a3"/><stop offset="0.684" stop-color="#cc8068"/><stop offset="0.711" stop-color="#cc7258"/><stop offset="0.895" stop-color="#cc4721"/><stop offset="0.925" stop-color="#cc400f"/><stop offset="0.934" stop-color="#cc3f00"/><stop offset="1.000" stop-color="#cc3b00"/></linearGradient><linearGradient id="o112" gradientUnits="userSpaceOnUse" x1="79.3" x2="536.6" y1="0" y2="0"><stop offset="0.000" stop-color="#00ccc6"/><stop offset="0.223" stop-color="#01ccc1"/><stop offset="0.328" stop-color="#56ccc1"/><stop offset="0.336" stop-color="#73ccc1"/><stop offset="0.354" stop-color="#8fccc2"/><stop offset="0.389" stop-color="#aeccc4"/><stop offset="0.437" stop-color="#c3ccc7"/><stop offset="0.502" stop-color="#cccac3"/><stop offset="0.581" stop-color="#ccb1a5"/><stop offset="0.677" stop-color="#cc806c"/><stop offset="0.707" stop-color="#cc7059"/><stop offset="0.895" stop-color="#cc4321"/><stop offset="0.926" stop-color="#cc3c10"/><stop offset="0.930" stop-color="#cc3b0c"/><stop offset="0.934" stop-color="#cc3b00"/><stop offset="1.000" stop-color="#cc3700"/></linearGradient><linearGradient id="o113" gradientUnits="userSpaceOnUse" x1="79.9" x2="539.7" y1="0" y2="0"><stop offset="0.000" stop-color="#00ccc7"/><stop offset="0.217" stop-color="#00ccc2"/><stop offset="0.322" stop-color="#56ccc2"/><stop offset="0.330" stop-color="#72ccc3"/><stop offset="0.348" stop-color="#8fccc4"/><stop offset="0.383" stop-color="#afccc6"/><stop offset="0.430" stop-color="#c4ccc8"/><stop offset="0.496" stop-color="#cccac5"/><stop offset="0.574" stop-color="#ccb2a8"/><stop offset="0.670" stop-color="#cc806f"/><stop offset="0.700" stop-color="#cc6e5b"/><stop offset="0.896" stop-color="#cc4022"/><stop offset="0.930" stop-color="#cc370e"/><stop offset="0.939" stop-color="#cc3600"/><stop offset="1.000" stop-color="#cc3300"/></linearGradient><linearGradient id="o114" gradientUnits="userSpaceOnUse" x1="80.6" x2="542.9" y1="0" y2="0"><stop offset="0.000" stop-color="#00ccc7"/><stop offset="0.216" stop-color="#02ccc4"/><stop offset="0.319" stop-color="#58ccc4"/><stop offset="0.323" stop-color="#6cccc4"/><stop offset="0.336" stop-color="#87ccc5"/><stop offset="0.362" stop-color="#a4ccc6"/><stop offset="0.405" stop-color="#bfccc8"/><stop offset="0.466" stop-color="#cbccc9"/><stop offset="0.530" stop-color="#ccbfba"/><stop offset="0.616" stop-color="#cc9a8f"/><stop offset="0.698" stop-color="#cc6b5b"/><stop offset="0.897" stop-color="#cc3b22"/><stop offset="0.931" stop-color="#cc330f"/><stop offset="0.935" stop-color="#cc320a"/><stop offset="0.940" stop-color="#cc3100"/><stop offset="1.000" stop-color="#cc2e00"/></linearGradient><linearGradient id="o115" gradientUnits="userSpaceOnUse" x1="81.3" x2="546.1" y1="0" y2="0"><stop offset="0.000" stop-color="#00ccc8"/><stop offset="0.210" stop-color="#00ccc5"/><stop offset="0.313" stop-color="#57ccc6"/><stop offset="0.318" stop-color="#6accc6"/><stop offset="0.326" stop-color="#7fccc6"/><stop offset="0.348" stop-color="#9cccc7"/><stop offset="0.386" stop-color="#b9ccc8"/><stop offset="0.433" stop-color="#c9ccca"/><stop offset="0.489" stop-color="#ccc8c6"/><stop offset="0.567" stop-color="#ccafa9"/><stop offset="0.661" stop-color="#cc7c71"/><stop offset="0.691" stop-color="#cc6a5d"/><stop offset="0.897" stop-color="#cc3722"/><stop offset="0.931" stop-color="#cc2e10"/><stop offset="0.944" stop-color="#cc2c00"/><stop offset="1.000" stop-color="#cc2900"/></linearGradient><linearGradient id="o116" gradientUnits="userSpaceOnUse" x1="82.1" x2="549.3" y1="0" y2="0"><stop offset="0.000" stop-color="#00ccc9"/><stop offset="0.209" stop-color="#02ccc7"/><stop offset="0.308" stop-color="#56ccc7"/><stop offset="0.312" stop-color="#68ccc7"/><stop offset="0.321" stop-color="#7eccc7"/><stop offset="0.342" stop-color="#9cccc8"/><stop offset="0.380" stop-color="#b9ccc9"/><stop offset="0.427" stop-color="#c9cccb"/><stop offset="0.483" stop-color="#ccc9c7"/><stop offset="0.560" stop-color="#ccafab"/><stop offset="0.654" stop-color="#cc7c74"/><stop offset="0.688" stop-color="#cc675e"/><stop offset="0.902" stop-color="#cc3221"/><stop offset="0.936" stop-color="#cc280e"/><stop offset="0.944" stop-color="#cc2600"/><stop offset="1.000" stop-color="#cc2400"/></linearGradient><linearGradient id="o117" gradientUnits="userSpaceOnUse" x1="82.8" x2="552.5" y1="0" y2="0"><stop offset="0.000" stop-color="#00ccca"/><stop offset="0.204" stop-color="#01ccc9"/><stop offset="0.302" stop-color="#55ccc9"/><stop offset="0.311" stop-color="#73ccc9"/><stop offset="0.328" stop-color="#91ccc9"/><stop offset="0.357" stop-color="#aeccca"/><stop offset="0.400" stop-color="#c5cccb"/><stop offset="0.455" stop-color="#cccccb"/><stop offset="0.523" stop-color="#ccbcb9"/><stop offset="0.613" stop-color="#cc908c"/><stop offset="0.685" stop-color="#cc645e"/><stop offset="0.902" stop-color="#cc2d22"/><stop offset="0.936" stop-color="#cc2210"/><stop offset="0.940" stop-color="#cc200b"/><stop offset="0.945" stop-color="#cc1f00"/><stop offset="1.000" stop-color="#cc1d00"/></linearGradient><linearGradient id="o118" gradientUnits="userSpaceOnUse" x1="83.6" x2="555.6" y1="0" y2="0"><stop offset="0.000" stop-color="#00cccb"/><stop offset="0.203" stop-color="#02ccca"/><stop offset="0.300" stop-color="#55ccca"/><stop offset="0.304" stop-color="#6dccca"/><stop offset="0.316" stop-color="#88ccca"/><stop offset="0.342" stop-color="#a6cccb"/><stop offset="0.380" stop-color="#bfcccb"/><stop offset="0.426" stop-color="#cbcccc"/><stop offset="0.485" stop-color="#ccc6c5"/><stop offset="0.565" stop-color="#cca6a5"/><stop offset="0.662" stop-color="#cc6c69"/><stop offset="0.688" stop-color="#cc605d"/><stop offset="0.903" stop-color="#cc2722"/><stop offset="0.937" stop-color="#cc1a11"/><stop offset="0.949" stop-color="#cc1500"/><stop offset="1.000" stop-color="#cc1400"/></linearGradient><linearGradient id="o119" gradientUnits="userSpaceOnUse" x1="84.3" x2="558.8" y1="0" y2="0"><stop offset="0.000" stop-color="#00cccc"/><stop offset="0.197" stop-color="#00cccc"/><stop offset="0.294" stop-color="#54cccc"/><stop offset="0.298" stop-color="#6acccc"/><stop offset="0.311" stop-color="#86cccc"/><stop offset="0.336" stop-color="#a5cccc"/><stop offset="0.374" stop-color="#bfcccc"/><stop offset="0.420" stop-color="#cbcccc"/><stop offset="0.479" stop-color="#ccc6c6"/><stop offset="0.559" stop-color="#cca6a6"/><stop offset="0.655" stop-color="#cc6b6c"/><stop offset="0.676" stop-color="#cc6060"/><stop offset="0.899" stop-color="#cc2224"/><stop offset="0.937" stop-color="#cc0e12"/><stop offset="0.945" stop-color="#cc000c"/><stop offset="1.000" stop-color="#cc000c"/></linearGradient><linearGradient id="o120" gradientUnits="userSpaceOnUse" x1="85.0" x2="561.9" y1="0" y2="0"><stop offset="0.000" stop-color="#00cbcc"/><stop offset="0.197" stop-color="#01cacc"/><stop offset="0.289" stop-color="#51cacc"/><stop offset="0.293" stop-color="#67cacc"/><stop offset="0.301" stop-color="#7ccacc"/><stop offset="0.322" stop-color="#9acbcc"/><stop offset="0.360" stop-color="#b9cbcc"/><stop offset="0.406" stop-color="#cacccc"/><stop offset="0.469" stop-color="#ccc7c7"/><stop offset="0.544" stop-color="#ccaaac"/><stop offset="0.636" stop-color="#cc7377"/><stop offset="0.669" stop-color="#cc5e62"/><stop offset="0.883" stop-color="#cc222a"/><stop offset="0.916" stop-color="#cc101e"/><stop offset="0.929" stop-color="#cc001a"/><stop offset="1.000" stop-color="#cc0019"/></linearGradient><linearGradient id="o121" gradientUnits="userSpaceOnUse" x1="85.7" x2="565.1" y1="0" y2="0"><stop offset="0.000" stop-color="#00cacc"/><stop offset="0.196" stop-color="#02c9cc"/><stop offset="0.283" stop-color="#4fc9cc"/><stop offset="0.287" stop-color="#62c9cc"/><stop offset="0.296" stop-color="#79c9cc"/><stop offset="0.317" stop-color="#98c9cc"/><stop offset="0.350" stop-color="#b5cacc"/><stop offset="0.396" stop-color="#c8cbcc"/><stop offset="0.458" stop-color="#ccc7c8"/><stop offset="0.533" stop-color="#ccacaf"/><stop offset="0.625" stop-color="#cc767c"/><stop offset="0.662" stop-color="#cc5c63"/><stop offset="0.867" stop-color="#cc222f"/><stop offset="0.900" stop-color="#cc0f25"/><stop offset="0.908" stop-color="#cc0022"/><stop offset="1.000" stop-color="#cc0020"/></linearGradient><linearGradient id="o122" gradientUnits="userSpaceOnUse" x1="86.3" x2="568.2" y1="0" y2="0"><stop offset="0.000" stop-color="#00c9cc"/><stop offset="0.191" stop-color="#00c7cc"/><stop offset="0.278" stop-color="#4cc7cc"/><stop offset="0.286" stop-color="#6cc7cc"/><stop offset="0.303" stop-color="#8bc7cc"/><stop offset="0.332" stop-color="#aac8cc"/><stop offset="0.373" stop-color="#c2cacc"/><stop offset="0.427" stop-color="#cccbcc"/><stop offset="0.490" stop-color="#ccbcbf"/><stop offset="0.573" stop-color="#cc9399"/><stop offset="0.660" stop-color="#cc5a64"/><stop offset="0.851" stop-color="#cc2134"/><stop offset="0.884" stop-color="#cc0d2a"/><stop offset="0.892" stop-color="#cc0028"/><stop offset="1.000" stop-color="#cc0025"/></linearGradient><linearGradient id="o123" gradientUnits="userSpaceOnUse" x1="86.8" x2="571.4" y1="0" y2="0"><stop offset="0.000" stop-color="#00c8cc"/><stop offset="0.189" stop-color="#00c5cc"/><stop offset="0.276" stop-color="#4bc5cc"/><stop offset="0.280" stop-color="#63c5cc"/><stop offset="0.292" stop-color="#80c6cc"/><stop offset="0.317" stop-color="#9fc7cc"/><stop offset="0.354" stop-color="#bac8cc"/><stop offset="0.403" stop-color="#cacacc"/><stop offset="0.461" stop-color="#ccc3c6"/><stop offset="0.535" stop-color="#cca4ab"/><stop offset="0.626" stop-color="#cc6a76"/><stop offset="0.654" stop-color="#cc5765"/><stop offset="0.831" stop-color="#cc2239"/><stop offset="0.864" stop-color="#cc0f30"/><stop offset="0.868" stop-color="#cc0a2f"/><stop offset="0.872" stop-color="#cc002e"/><stop offset="1.000" stop-color="#cc002a"/></linearGradient><linearGradient id="o124" gradientUnits="userSpaceOnUse" x1="87.4" x2="574.5" y1="0" y2="0"><stop offset="0.000" stop-color="#00c7cc"/><stop offset="0.189" stop-color="#00c3cc"/><stop offset="0.270" stop-color="#48c3cc"/><stop offset="0.275" stop-color="#5ec3cc"/><stop offset="0.283" stop-color="#74c4cc"/><stop offset="0.303" stop-color="#93c5cc"/><stop offset="0.340" stop-color="#b4c6cc"/><stop offset="0.385" stop-color="#c7c9cc"/><stop offset="0.439" stop-color="#ccc6c9"/><stop offset="0.508" stop-color="#ccaeb5"/><stop offset="0.594" stop-color="#cc7b88"/><stop offset="0.648" stop-color="#cc5667"/><stop offset="0.816" stop-color="#cc223d"/><stop offset="0.848" stop-color="#cc0e35"/><stop offset="0.857" stop-color="#cc0033"/><stop offset="1.000" stop-color="#cc002d"/></linearGradient><linearGradient id="o125" gradientUnits="userSpaceOnUse" x1="87.8" x2="577.7" y1="0" y2="0"><stop offset="0.000" stop-color="#00c6cc"/><stop offset="0.188" stop-color="#00c2cc"/><stop offset="0.265" stop-color="#44c1cc"/><stop offset="0.273" stop-color="#66c1cc"/><stop offset="0.290" stop-color="#85c2cc"/><stop offset="0.318" stop-color="#a5c4cc"/><stop offset="0.359" stop-color="#bfc6cc"/><stop offset="0.416" stop-color="#ccc8cc"/><stop offset="0.482" stop-color="#ccb6bd"/><stop offset="0.563" stop-color="#cc8b98"/><stop offset="0.641" stop-color="#cc5468"/><stop offset="0.800" stop-color="#cc2141"/><stop offset="0.829" stop-color="#cc103a"/><stop offset="0.833" stop-color="#cc0c39"/><stop offset="0.837" stop-color="#cc0038"/><stop offset="1.000" stop-color="#cc0031"/></linearGradient><linearGradient id="o126" gradientUnits="userSpaceOnUse" x1="88.3" x2="580.9" y1="0" y2="0"><stop offset="0.000" stop-color="#00c5cc"/><stop offset="0.186" stop-color="#00c0cc"/><stop offset="0.263" stop-color="#43bfcc"/><stop offset="0.267" stop-color="#5cbfcc"/><stop offset="0.279" stop-color="#79c0cc"/><stop offset="0.304" stop-color="#99c2cc"/><stop offset="0.340" stop-color="#b6c4cc"/><stop offset="0.389" stop-color="#c8c7cc"/><stop offset="0.437" stop-color="#ccc2c8"/><stop offset="0.506" stop-color="#cca7b2"/><stop offset="0.591" stop-color="#cc7285"/><stop offset="0.636" stop-color="#cc526a"/><stop offset="0.785" stop-color="#cc2144"/><stop offset="0.814" stop-color="#cc0e3e"/><stop offset="0.822" stop-color="#cc003c"/><stop offset="1.000" stop-color="#cc0034"/></linearGradient><linearGradient id="o127" gradientUnits="userSpaceOnUse" x1="88.8" x2="584.1" y1="0" y2="0"><stop offset="0.000" stop-color="#00c4cc"/><stop offset="0.185" stop-color="#00becc"/><stop offset="0.258" stop-color="#3fbdcc"/><stop offset="0.262" stop-color="#56bdcc"/><stop offset="0.270" stop-color="#6dbecc"/><stop offset="0.290" stop-color="#8dbfcc"/><stop offset="0.327" stop-color="#afc2cc"/><stop offset="0.375" stop-color="#c5c5cc"/><stop offset="0.423" stop-color="#ccc3c9"/><stop offset="0.492" stop-color="#ccaab6"/><stop offset="0.577" stop-color="#cc778c"/><stop offset="0.629" stop-color="#cc506b"/><stop offset="0.770" stop-color="#cc2048"/><stop offset="0.798" stop-color="#cc0c41"/><stop offset="0.802" stop-color="#cc0141"/><stop offset="1.000" stop-color="#cc0037"/></linearGradient><linearGradient id="o128" gradientUnits="userSpaceOnUse" x1="89.5" x2="587.2" y1="0" y2="0"><stop offset="0.000" stop-color="#00c3cc"/><stop offset="0.185" stop-color="#00bccc"/><stop offset="0.253" stop-color="#3bbbcc"/><stop offset="0.257" stop-color="#50bbcc"/><stop offset="0.265" stop-color="#68bbcc"/><stop offset="0.285" stop-color="#8abdcc"/><stop offset="0.317" stop-color="#a9c0cc"/><stop offset="0.361" stop-color="#c1c3cc"/><stop offset="0.418" stop-color="#ccc1ca"/><stop offset="0.486" stop-color="#cca9b6"/><stop offset="0.566" stop-color="#cc788f"/><stop offset="0.622" stop-color="#cc4e6d"/><stop offset="0.755" stop-color="#cc204c"/><stop offset="0.779" stop-color="#cc0f46"/><stop offset="0.787" stop-color="#cc0044"/><stop offset="1.000" stop-color="#cc0039"/></linearGradient><linearGradient id="o129" gradientUnits="userSpaceOnUse" x1="90.1" x2="590.3" y1="0" y2="0"><stop offset="0.000" stop-color="#00c2cc"/><stop offset="0.187" stop-color="#02bacc"/><stop offset="0.247" stop-color="#35b8cc"/><stop offset="0.251" stop-color="#40b8cc"/><stop offset="0.255" stop-color="#56b9cc"/><stop offset="0.267" stop-color="#72bacc"/><stop offset="0.291" stop-color="#93bccc"/><stop offset="0.331" stop-color="#b3bfcc"/><stop offset="0.386" stop-color="#c8c2cc"/><stop offset="0.430" stop-color="#ccbbc6"/><stop offset="0.502" stop-color="#cc9cae"/><stop offset="0.586" stop-color="#cc6381"/><stop offset="0.618" stop-color="#cc4b6e"/><stop offset="0.737" stop-color="#cc2150"/><stop offset="0.765" stop-color="#cc0c49"/><stop offset="0.769" stop-color="#cc0248"/><stop offset="1.000" stop-color="#cc003b"/></linearGradient><linearGradient id="o130" gradientUnits="userSpaceOnUse" x1="90.8" x2="593.5" y1="0" y2="0"><stop offset="0.000" stop-color="#00c1cc"/><stop offset="0.187" stop-color="#02b7cc"/><stop offset="0.246" stop-color="#35b6cc"/><stop offset="0.250" stop-color="#50b6cc"/><stop offset="0.262" stop-color="#6eb7cc"/><stop offset="0.286" stop-color="#90b9cc"/><stop offset="0.325" stop-color="#b1bdcc"/><stop offset="0.381" stop-color="#c8c0cc"/><stop offset="0.425" stop-color="#ccb9c6"/><stop offset="0.496" stop-color="#cc9bae"/><stop offset="0.575" stop-color="#cc6585"/><stop offset="0.611" stop-color="#cc496f"/><stop offset="0.722" stop-color="#cc2053"/><stop offset="0.746" stop-color="#cc104e"/><stop offset="0.754" stop-color="#cc004c"/><stop offset="0.992" stop-color="#cc003e"/><stop offset="1.000" stop-color="#cc003d"/></linearGradient><linearGradient id="o131" gradientUnits="userSpaceOnUse" x1="91.6" x2="596.7" y1="0" y2="0"><stop offset="0.000" stop-color="#00c0cc"/><stop offset="0.186" stop-color="#01b5cc"/><stop offset="0.241" stop-color="#30b3cc"/><stop offset="0.245" stop-color="#4bb4cc"/><stop offset="0.253" stop-color="#62b4cc"/><stop offset="0.273" stop-color="#83b6cc"/><stop offset="0.308" stop-color="#a7bacc"/><stop offset="0.356" stop-color="#c0bdcc"/><stop offset="0.403" stop-color="#ccbcca"/><stop offset="0.474" stop-color="#cca1b5"/><stop offset="0.553" stop-color="#cc6f8f"/><stop offset="0.605" stop-color="#cc4770"/><stop offset="0.708" stop-color="#cc2056"/><stop offset="0.731" stop-color="#cc0e51"/><stop offset="0.739" stop-color="#cc0050"/><stop offset="0.976" stop-color="#cc0040"/><stop offset="1.000" stop-color="#cc003f"/></linearGradient><linearGradient id="o132" gradientUnits="userSpaceOnUse" x1="92.5" x2="599.9" y1="0" y2="0"><stop offset="0.000" stop-color="#00bfcc"/><stop offset="0.185" stop-color="#01b3cc"/><stop offset="0.236" stop-color="#2cb1cc"/><stop offset="0.240" stop-color="#46b1cc"/><stop offset="0.248" stop-color="#5eb2cc"/><stop offset="0.268" stop-color="#80b4cc"/><stop offset="0.299" stop-color="#a1b7cc"/><stop offset="0.346" stop-color="#bdbbcc"/><stop offset="0.402" stop-color="#ccb9ca"/><stop offset="0.472" stop-color="#cc9db4"/><stop offset="0.551" stop-color="#cc6a8d"/><stop offset="0.598" stop-color="#cc4572"/><stop offset="0.693" stop-color="#cc1f5a"/><stop offset="0.717" stop-color="#cc0b54"/><stop offset="0.720" stop-color="#cc0053"/><stop offset="0.957" stop-color="#cc0043"/><stop offset="1.000" stop-color="#cc0041"/></linearGradient><linearGradient id="o133" gradientUnits="userSpaceOnUse" x1="93.3" x2="603.0" y1="0" y2="0"><stop offset="0.000" stop-color="#00becc"/><stop offset="0.184" stop-color="#00b0cc"/><stop offset="0.231" stop-color="#27aecc"/><stop offset="0.235" stop-color="#40aecc"/><stop offset="0.243" stop-color="#59afcc"/><stop offset="0.263" stop-color="#7cb1cc"/><stop offset="0.294" stop-color="#9eb4cc"/><stop offset="0.341" stop-color="#bbb8cc"/><stop offset="0.396" stop-color="#ccb7ca"/><stop offset="0.471" stop-color="#cc99b2"/><stop offset="0.545" stop-color="#cc678e"/><stop offset="0.592" stop-color="#cc4273"/><stop offset="0.678" stop-color="#cc1e5d"/><stop offset="0.698" stop-color="#cc0f58"/><stop offset="0.706" stop-color="#cc0057"/><stop offset="0.941" stop-color="#cc0046"/><stop offset="1.000" stop-color="#cc0043"/></linearGradient><linearGradient id="o134" gradientUnits="userSpaceOnUse" x1="94.2" x2="604.7" y1="0" y2="0"><stop offset="0.000" stop-color="#00bdcc"/><stop offset="0.180" stop-color="#00afcc"/><stop offset="0.195" stop-color="#09adcc"/><stop offset="0.227" stop-color="#22abcc"/><stop offset="0.234" stop-color="#48accc"/><stop offset="0.246" stop-color="#64adcc"/><stop offset="0.270" stop-color="#87afcc"/><stop offset="0.309" stop-color="#aab3cc"/><stop offset="0.367" stop-color="#c5b6cc"/><stop offset="0.398" stop-color="#ccb2c9"/><stop offset="0.473" stop-color="#cc93b0"/><stop offset="0.547" stop-color="#cc608b"/><stop offset="0.586" stop-color="#cc4075"/><stop offset="0.668" stop-color="#cc1d60"/><stop offset="0.684" stop-color="#cc105c"/><stop offset="0.691" stop-color="#cc005a"/><stop offset="0.926" stop-color="#cc0048"/><stop offset="1.000" stop-color="#cc0045"/></linearGradient><linearGradient id="o135" gradientUnits="userSpaceOnUse" x1="95.1" x2="601.5" y1="0" y2="0"><stop offset="0.000" stop-color="#00bccc"/><stop offset="0.177" stop-color="#00adcc"/><stop offset="0.193" stop-color="#04abcc"/><stop offset="0.224" stop-color="#1ea9cc"/><stop offset="0.232" stop-color="#42a9cc"/><stop offset="0.244" stop-color="#60aacc"/><stop offset="0.268" stop-color="#83adcc"/><stop offset="0.307" stop-color="#a7b0cc"/><stop offset="0.366" stop-color="#c4b3cc"/><stop offset="0.398" stop-color="#ccb0c9"/><stop offset="0.472" stop-color="#cc90b0"/><stop offset="0.547" stop-color="#cc5d8c"/><stop offset="0.587" stop-color="#cc3e76"/><stop offset="0.661" stop-color="#cc1c63"/><stop offset="0.677" stop-color="#cc0e5f"/><stop offset="0.685" stop-color="#cc005e"/><stop offset="0.921" stop-color="#cc004b"/><stop offset="1.000" stop-color="#cc0047"/></linearGradient><linearGradient id="o136" gradientUnits="userSpaceOnUse" x1="96.0" x2="594.7" y1="0" y2="0"><stop offset="0.000" stop-color="#00bbcc"/><stop offset="0.172" stop-color="#00accc"/><stop offset="0.192" stop-color="#00a8cc"/><stop offset="0.224" stop-color="#19a6cc"/><stop offset="0.228" stop-color="#28a5cc"/><stop offset="0.232" stop-color="#3da6cc"/><stop offset="0.244" stop-color="#5ca7cc"/><stop offset="0.268" stop-color="#80aacc"/><stop offset="0.308" stop-color="#a5adcc"/><stop offset="0.368" stop-color="#c3b0cc"/><stop offset="0.404" stop-color="#ccacc9"/><stop offset="0.480" stop-color="#cc8baf"/><stop offset="0.556" stop-color="#cc578b"/><stop offset="0.588" stop-color="#cc3c79"/><stop offset="0.660" stop-color="#cc1b66"/><stop offset="0.676" stop-color="#cc0c63"/><stop offset="0.680" stop-color="#cc0062"/><stop offset="0.920" stop-color="#cc004e"/><stop offset="1.000" stop-color="#cc0049"/></linearGradient><linearGradient id="o137" gradientUnits="userSpaceOnUse" x1="96.9" x2="587.8" y1="0" y2="0"><stop offset="0.000" stop-color="#00bacc"/><stop offset="0.171" stop-color="#00aacc"/><stop offset="0.199" stop-color="#02a5cc"/><stop offset="0.224" stop-color="#14a3cc"/><stop offset="0.228" stop-color="#20a2cc"/><stop offset="0.232" stop-color="#38a3cc"/><stop offset="0.244" stop-color="#58a4cc"/><stop offset="0.268" stop-color="#7da6cc"/><stop offset="0.309" stop-color="#a2aacc"/><stop offset="0.370" stop-color="#c2adcc"/><stop offset="0.407" stop-color="#cca9c9"/><stop offset="0.488" stop-color="#cc86ad"/><stop offset="0.561" stop-color="#cc538b"/><stop offset="0.593" stop-color="#cc397a"/><stop offset="0.659" stop-color="#cc1b6a"/><stop offset="0.675" stop-color="#cc0966"/><stop offset="0.679" stop-color="#cc0065"/><stop offset="0.923" stop-color="#cc0050"/><stop offset="1.000" stop-color="#cc004c"/></linearGradient><linearGradient id="o138" gradientUnits="userSpaceOnUse" x1="97.8" x2="581.0" y1="0" y2="0"><stop offset="0.000" stop-color="#00b8cc"/><stop offset="0.169" stop-color="#00a8cc"/><stop offset="0.202" stop-color="#00a2cc"/><stop offset="0.227" stop-color="#129fcc"/><stop offset="0.231" stop-color="#339fcc"/><stop offset="0.240" stop-color="#4ba0cc"/><stop offset="0.260" stop-color="#6fa2cc"/><stop offset="0.298" stop-color="#96a6cc"/><stop offset="0.351" stop-color="#b7a9cc"/><stop offset="0.409" stop-color="#cca6ca"/><stop offset="0.492" stop-color="#cc82ad"/><stop offset="0.566" stop-color="#cc508c"/><stop offset="0.599" stop-color="#cc367b"/><stop offset="0.657" stop-color="#cc1a6d"/><stop offset="0.669" stop-color="#cc0e6a"/><stop offset="0.674" stop-color="#cc0369"/><stop offset="0.740" stop-color="#cc0061"/><stop offset="0.988" stop-color="#cc004f"/><stop offset="1.000" stop-color="#cc004e"/></linearGradient><linearGradient id="o139" gradientUnits="userSpaceOnUse" x1="98.8" x2="574.1" y1="0" y2="0"><stop offset="0.000" stop-color="#00b7cc"/><stop offset="0.168" stop-color="#00a7cc"/><stop offset="0.210" stop-color="#019ecc"/><stop offset="0.227" stop-color="#0d9bcc"/><stop offset="0.231" stop-color="#2e9ccc"/><stop offset="0.239" stop-color="#469dcc"/><stop offset="0.261" stop-color="#6b9fcc"/><stop offset="0.294" stop-color="#90a2cc"/><stop offset="0.345" stop-color="#b1a5cc"/><stop offset="0.412" stop-color="#cca3cb"/><stop offset="0.496" stop-color="#cc7fad"/><stop offset="0.571" stop-color="#cc4c8c"/><stop offset="0.601" stop-color="#cc357e"/><stop offset="0.655" stop-color="#cc1970"/><stop offset="0.668" stop-color="#cc0b6d"/><stop offset="0.672" stop-color="#cc006c"/><stop offset="0.924" stop-color="#cc0055"/><stop offset="1.000" stop-color="#cc0050"/></linearGradient><linearGradient id="o140" gradientUnits="userSpaceOnUse" x1="99.7" x2="567.3" y1="0" y2="0"><stop offset="0.000" stop-color="#00b6cc"/><stop offset="0.167" stop-color="#00a5cc"/><stop offset="0.218" stop-color="#0399cc"/><stop offset="0.226" stop-color="#0898cc"/><stop offset="0.231" stop-color="#2898cc"/><stop offset="0.239" stop-color="#4299cc"/><stop offset="0.261" stop-color="#679bcc"/><stop offset="0.295" stop-color="#8d9ecc"/><stop offset="0.346" stop-color="#afa2cc"/><stop offset="0.419" stop-color="#cc9eca"/><stop offset="0.504" stop-color="#cc79ac"/><stop offset="0.577" stop-color="#cc478c"/><stop offset="0.603" stop-color="#cc3380"/><stop offset="0.654" stop-color="#cc1873"/><stop offset="0.662" stop-color="#cc0f71"/><stop offset="0.671" stop-color="#cc0070"/><stop offset="0.927" stop-color="#cc0057"/><stop offset="1.000" stop-color="#cc0053"/></linearGradient><linearGradient id="o141" gradientUnits="userSpaceOnUse" x1="100.6" x2="560.4" y1="0" y2="0"><stop offset="0.000" stop-color="#00b5cc"/><stop offset="0.165" stop-color="#00a3cc"/><stop offset="0.222" stop-color="#0095cc"/><stop offset="0.226" stop-color="#0394cc"/><stop offset="0.230" stop-color="#2295cc"/><stop offset="0.239" stop-color="#3d95cc"/><stop offset="0.261" stop-color="#6398cc"/><stop offset="0.296" stop-color="#899bcc"/><stop offset="0.348" stop-color="#ad9ecc"/><stop offset="0.422" stop-color="#cc9acb"/><stop offset="0.509" stop-color="#cc75ac"/><stop offset="0.583" stop-color="#cc428d"/><stop offset="0.609" stop-color="#cc2f81"/><stop offset="0.652" stop-color="#cc1777"/><stop offset="0.661" stop-color="#cc0d74"/><stop offset="0.665" stop-color="#cc0074"/><stop offset="0.913" stop-color="#cc005b"/><stop offset="1.000" stop-color="#cc0055"/></linearGradient><linearGradient id="o142" gradientUnits="userSpaceOnUse" x1="101.5" x2="553.6" y1="0" y2="0"><stop offset="0.000" stop-color="#00b4cc"/><stop offset="0.163" stop-color="#00a2cc"/><stop offset="0.225" stop-color="#0092cc"/><stop offset="0.229" stop-color="#1791cc"/><stop offset="0.233" stop-color="#2991cc"/><stop offset="0.247" stop-color="#4892cc"/><stop offset="0.273" stop-color="#6f95cc"/><stop offset="0.317" stop-color="#9798cc"/><stop offset="0.383" stop-color="#bc9acc"/><stop offset="0.427" stop-color="#cc96cb"/><stop offset="0.515" stop-color="#cc6fac"/><stop offset="0.586" stop-color="#cc408e"/><stop offset="0.612" stop-color="#cc2c83"/><stop offset="0.652" stop-color="#cc1479"/><stop offset="0.665" stop-color="#cc0077"/><stop offset="0.907" stop-color="#cc005d"/><stop offset="1.000" stop-color="#cc0057"/></linearGradient><linearGradient id="o143" gradientUnits="userSpaceOnUse" x1="102.4" x2="546.7" y1="0" y2="0"><stop offset="0.000" stop-color="#00b2cc"/><stop offset="0.161" stop-color="#00a0cc"/><stop offset="0.224" stop-color="#008fcc"/><stop offset="0.233" stop-color="#268ecc"/><stop offset="0.251" stop-color="#4c8fcc"/><stop offset="0.283" stop-color="#7592cc"/><stop offset="0.332" stop-color="#9d95cc"/><stop offset="0.413" stop-color="#c594cc"/><stop offset="0.439" stop-color="#cc8fc8"/><stop offset="0.529" stop-color="#cc66a8"/><stop offset="0.596" stop-color="#cc368d"/><stop offset="0.650" stop-color="#cc127d"/><stop offset="0.655" stop-color="#cc0c7c"/><stop offset="0.659" stop-color="#cc007b"/><stop offset="0.892" stop-color="#cc0061"/><stop offset="1.000" stop-color="#cc005a"/></linearGradient><linearGradient id="o144" gradientUnits="userSpaceOnUse" x1="103.4" x2="539.9" y1="0" y2="0"><stop offset="0.000" stop-color="#00b1cc"/><stop offset="0.160" stop-color="#009fcc"/><stop offset="0.224" stop-color="#008dcc"/><stop offset="0.233" stop-color="#248ccc"/><stop offset="0.256" stop-color="#4f8bcc"/><stop offset="0.288" stop-color="#768ecc"/><stop offset="0.338" stop-color="#9e91cc"/><stop offset="0.425" stop-color="#c88ecc"/><stop offset="0.457" stop-color="#cc85c4"/><stop offset="0.543" stop-color="#cc5ba5"/><stop offset="0.621" stop-color="#cc2587"/><stop offset="0.648" stop-color="#cc1080"/><stop offset="0.658" stop-color="#cc007e"/><stop offset="0.886" stop-color="#cc0064"/><stop offset="1.000" stop-color="#cc005c"/></linearGradient><linearGradient id="o145" gradientUnits="userSpaceOnUse" x1="104.3" x2="533.0" y1="0" y2="0"><stop offset="0.000" stop-color="#00b0cc"/><stop offset="0.158" stop-color="#009dcc"/><stop offset="0.223" stop-color="#008bcc"/><stop offset="0.233" stop-color="#2389cc"/><stop offset="0.247" stop-color="#3e88cc"/><stop offset="0.284" stop-color="#6e89cc"/><stop offset="0.335" stop-color="#988ccc"/><stop offset="0.414" stop-color="#c18bcc"/><stop offset="0.447" stop-color="#cc86ca"/><stop offset="0.540" stop-color="#cc5ca9"/><stop offset="0.605" stop-color="#cc2d8f"/><stop offset="0.642" stop-color="#cc1485"/><stop offset="0.647" stop-color="#cc0e84"/><stop offset="0.651" stop-color="#cc0082"/><stop offset="0.870" stop-color="#cc0068"/><stop offset="1.000" stop-color="#cc005e"/></linearGradient><linearGradient id="o146" gradientUnits="userSpaceOnUse" x1="105.2" x2="526.2" y1="0" y2="0"><stop offset="0.000" stop-color="#00aecc"/><stop offset="0.156" stop-color="#009bcc"/><stop offset="0.223" stop-color="#0089cc"/><stop offset="0.227" stop-color="#0d87cc"/><stop offset="0.232" stop-color="#2287cc"/><stop offset="0.246" stop-color="#3d86cc"/><stop offset="0.299" stop-color="#7886cc"/><stop offset="0.355" stop-color="#a188cc"/><stop offset="0.445" stop-color="#cb83cc"/><stop offset="0.536" stop-color="#cc5bac"/><stop offset="0.602" stop-color="#cc2e93"/><stop offset="0.640" stop-color="#cc1288"/><stop offset="0.649" stop-color="#cc0086"/><stop offset="0.867" stop-color="#cc006b"/><stop offset="1.000" stop-color="#cc0061"/></linearGradient><linearGradient id="o147" gradientUnits="userSpaceOnUse" x1="106.1" x2="519.3" y1="0" y2="0"><stop offset="0.000" stop-color="#00adcc"/><stop offset="0.155" stop-color="#009acc"/><stop offset="0.222" stop-color="#0087cc"/><stop offset="0.227" stop-color="#0a85cc"/><stop offset="0.232" stop-color="#2184cc"/><stop offset="0.246" stop-color="#3d83cc"/><stop offset="0.295" stop-color="#7081cc"/><stop offset="0.353" stop-color="#9c83cc"/><stop offset="0.454" stop-color="#cc7ccc"/><stop offset="0.546" stop-color="#cc53ab"/><stop offset="0.604" stop-color="#cc2a95"/><stop offset="0.638" stop-color="#cc108c"/><stop offset="0.647" stop-color="#cc008a"/><stop offset="0.860" stop-color="#cc006e"/><stop offset="1.000" stop-color="#cc0063"/></linearGradient><linearGradient id="o148" gradientUnits="userSpaceOnUse" x1="107.0" x2="512.5" y1="0" y2="0"><stop offset="0.000" stop-color="#00accc"/><stop offset="0.158" stop-color="#0097cc"/><stop offset="0.227" stop-color="#0183cc"/><stop offset="0.232" stop-color="#2082cc"/><stop offset="0.246" stop-color="#3c81cc"/><stop offset="0.281" stop-color="#607dcc"/><stop offset="0.345" stop-color="#937ecc"/><stop offset="0.433" stop-color="#c07acc"/><stop offset="0.468" stop-color="#cc74c9"/><stop offset="0.557" stop-color="#cc4aa9"/><stop offset="0.631" stop-color="#cc1391"/><stop offset="0.635" stop-color="#cc0d8f"/><stop offset="0.640" stop-color="#cc008e"/><stop offset="0.842" stop-color="#cc0072"/><stop offset="1.000" stop-color="#cc0066"/></linearGradient><linearGradient id="o149" gradientUnits="userSpaceOnUse" x1="108.0" x2="505.6" y1="0" y2="0"><stop offset="0.000" stop-color="#00aacc"/><stop offset="0.156" stop-color="#0096cc"/><stop offset="0.226" stop-color="#0080cc"/><stop offset="0.231" stop-color="#1e80cc"/><stop offset="0.241" stop-color="#347fcc"/><stop offset="0.271" stop-color="#577ccc"/><stop offset="0.347" stop-color="#9079cc"/><stop offset="0.437" stop-color="#bf75cc"/><stop offset="0.472" stop-color="#cc6eca"/><stop offset="0.563" stop-color="#cc43aa"/><stop offset="0.628" stop-color="#cc1294"/><stop offset="0.638" stop-color="#cc0092"/><stop offset="0.839" stop-color="#cc0075"/><stop offset="1.000" stop-color="#cc0068"/></linearGradient><linearGradient id="o150" gradientUnits="userSpaceOnUse" x1="108.9" x2="498.8" y1="0" y2="0"><stop offset="0.000" stop-color="#00a9cc"/><stop offset="0.154" stop-color="#0094cc"/><stop offset="0.226" stop-color="#007ecc"/><stop offset="0.231" stop-color="#1d7dcc"/><stop offset="0.241" stop-color="#337ccc"/><stop offset="0.272" stop-color="#5679cc"/><stop offset="0.359" stop-color="#9474cc"/><stop offset="0.462" stop-color="#c66bcc"/><stop offset="0.487" stop-color="#cc64c7"/><stop offset="0.569" stop-color="#cc3baa"/><stop offset="0.621" stop-color="#cc1599"/><stop offset="0.626" stop-color="#cc0f98"/><stop offset="0.631" stop-color="#cc0097"/><stop offset="0.821" stop-color="#cc007a"/><stop offset="1.000" stop-color="#cc006a"/></linearGradient><linearGradient id="o151" gradientUnits="userSpaceOnUse" x1="109.9" x2="491.9" y1="0" y2="0"><stop offset="0.000" stop-color="#00a7cc"/><stop offset="0.151" stop-color="#0093cc"/><stop offset="0.224" stop-color="#007ccc"/><stop offset="0.229" stop-color="#187bcc"/><stop offset="0.240" stop-color="#307acc"/><stop offset="0.266" stop-color="#4f78cc"/><stop offset="0.328" stop-color="#7d70cc"/><stop offset="0.422" stop-color="#b26bcc"/><stop offset="0.490" stop-color="#cc5fc9"/><stop offset="0.573" stop-color="#cc35ab"/><stop offset="0.620" stop-color="#cc119d"/><stop offset="0.630" stop-color="#cc009a"/><stop offset="0.818" stop-color="#cc007d"/><stop offset="1.000" stop-color="#cc006d"/></linearGradient><linearGradient id="o152" gradientUnits="userSpaceOnUse" x1="110.9" x2="485.1" y1="0" y2="0"><stop offset="0.000" stop-color="#00a6cc"/><stop offset="0.149" stop-color="#0091cc"/><stop offset="0.223" stop-color="#007acc"/><stop offset="0.229" stop-color="#1779cc"/><stop offset="0.239" stop-color="#2f78cc"/><stop offset="0.266" stop-color="#4f75cc"/><stop offset="0.330" stop-color="#7c6ecc"/><stop offset="0.447" stop-color="#b962cc"/><stop offset="0.495" stop-color="#cc58cb"/><stop offset="0.574" stop-color="#cc2fae"/><stop offset="0.612" stop-color="#cc15a2"/><stop offset="0.617" stop-color="#cc0ea1"/><stop offset="0.622" stop-color="#cc009f"/><stop offset="0.803" stop-color="#cc0082"/><stop offset="1.000" stop-color="#cc006f"/></linearGradient><linearGradient id="o153" gradientUnits="userSpaceOnUse" x1="111.9" x2="478.2" y1="0" y2="0"><stop offset="0.000" stop-color="#00a4cc"/><stop offset="0.152" stop-color="#008ecc"/><stop offset="0.223" stop-color="#0078cc"/><stop offset="0.228" stop-color="#1676cc"/><stop offset="0.234" stop-color="#2576cc"/><stop offset="0.255" stop-color="#4474cc"/><stop offset="0.304" stop-color="#6b6ecc"/><stop offset="0.424" stop-color="#ab5fcc"/><stop offset="0.505" stop-color="#cc4fc9"/><stop offset="0.592" stop-color="#cc20ab"/><stop offset="0.609" stop-color="#cc13a6"/><stop offset="0.620" stop-color="#cc00a3"/><stop offset="0.793" stop-color="#cc0086"/><stop offset="1.000" stop-color="#cc0072"/></linearGradient><linearGradient id="o154" gradientUnits="userSpaceOnUse" x1="112.9" x2="471.4" y1="0" y2="0"><stop offset="0.000" stop-color="#00a3cc"/><stop offset="0.150" stop-color="#008dcc"/><stop offset="0.222" stop-color="#0076cc"/><stop offset="0.228" stop-color="#1574cc"/><stop offset="0.233" stop-color="#2474cc"/><stop offset="0.250" stop-color="#3d72cc"/><stop offset="0.294" stop-color="#636dcc"/><stop offset="0.394" stop-color="#9a5fcc"/><stop offset="0.511" stop-color="#cc47cb"/><stop offset="0.589" stop-color="#cc1faf"/><stop offset="0.606" stop-color="#cc10ab"/><stop offset="0.611" stop-color="#cc00a9"/><stop offset="0.778" stop-color="#cc008b"/><stop offset="1.000" stop-color="#cc0074"/></linearGradient><linearGradient id="o155" gradientUnits="userSpaceOnUse" x1="113.9" x2="464.5" y1="0" y2="0"><stop offset="0.000" stop-color="#00a1cc"/><stop offset="0.148" stop-color="#008bcc"/><stop offset="0.222" stop-color="#0074cc"/><stop offset="0.233" stop-color="#2471cc"/><stop offset="0.250" stop-color="#3c6fcc"/><stop offset="0.295" stop-color="#626acc"/><stop offset="0.398" stop-color="#995ccc"/><stop offset="0.517" stop-color="#cc41cc"/><stop offset="0.585" stop-color="#cc1eb4"/><stop offset="0.602" stop-color="#cc0caf"/><stop offset="0.608" stop-color="#cc00ad"/><stop offset="0.773" stop-color="#cc008e"/><stop offset="1.000" stop-color="#cc0077"/></linearGradient><linearGradient id="o156" gradientUnits="userSpaceOnUse" x1="114.9" x2="457.7" y1="0" y2="0"><stop offset="0.000" stop-color="#009fcc"/><stop offset="0.145" stop-color="#0089cc"/><stop offset="0.221" stop-color="#0071cc"/><stop offset="0.233" stop-color="#236fcc"/><stop offset="0.250" stop-color="#3c6dcc"/><stop offset="0.297" stop-color="#6268cc"/><stop offset="0.395" stop-color="#965acc"/><stop offset="0.517" stop-color="#c93ecc"/><stop offset="0.558" stop-color="#cc2cc0"/><stop offset="0.587" stop-color="#cc18b7"/><stop offset="0.593" stop-color="#cc12b5"/><stop offset="0.599" stop-color="#cc06b3"/><stop offset="0.605" stop-color="#cc00b2"/><stop offset="0.767" stop-color="#cc0092"/><stop offset="1.000" stop-color="#cc007a"/></linearGradient><linearGradient id="o157" gradientUnits="userSpaceOnUse" x1="116.0" x2="450.8" y1="0" y2="0"><stop offset="0.000" stop-color="#009ecc"/><stop offset="0.149" stop-color="#0086cc"/><stop offset="0.220" stop-color="#006fcc"/><stop offset="0.232" stop-color="#236ccc"/><stop offset="0.250" stop-color="#3c6acc"/><stop offset="0.298" stop-color="#6165cc"/><stop offset="0.399" stop-color="#9556cc"/><stop offset="0.518" stop-color="#c53bcc"/><stop offset="0.542" stop-color="#cc31ca"/><stop offset="0.583" stop-color="#cc16bc"/><stop offset="0.589" stop-color="#cc0fba"/><stop offset="0.595" stop-color="#cc00b8"/><stop offset="0.750" stop-color="#cc0098"/><stop offset="1.000" stop-color="#cc007c"/></linearGradient><linearGradient id="o158" gradientUnits="userSpaceOnUse" x1="117.1" x2="444.0" y1="0" y2="0"><stop offset="0.000" stop-color="#009ccc"/><stop offset="0.146" stop-color="#0085cc"/><stop offset="0.220" stop-color="#006dcc"/><stop offset="0.232" stop-color="#226acc"/><stop offset="0.250" stop-color="#3b68cc"/><stop offset="0.299" stop-color="#6162cc"/><stop offset="0.409" stop-color="#9752cc"/><stop offset="0.524" stop-color="#c435cc"/><stop offset="0.555" stop-color="#cc27c9"/><stop offset="0.579" stop-color="#cc14c1"/><stop offset="0.591" stop-color="#cc00bd"/><stop offset="0.738" stop-color="#cc009d"/><stop offset="0.994" stop-color="#cc007f"/><stop offset="1.000" stop-color="#cc007f"/></linearGradient><linearGradient id="o159" gradientUnits="userSpaceOnUse" x1="118.1" x2="437.1" y1="0" y2="0"><stop offset="0.000" stop-color="#009acc"/><stop offset="0.144" stop-color="#0083cc"/><stop offset="0.219" stop-color="#006acc"/><stop offset="0.231" stop-color="#2267cc"/><stop offset="0.250" stop-color="#3b65cc"/><stop offset="0.300" stop-color="#6060cc"/><stop offset="0.413" stop-color="#964ecc"/><stop offset="0.519" stop-color="#bf33cc"/><stop offset="0.562" stop-color="#cc1dca"/><stop offset="0.575" stop-color="#cc11c6"/><stop offset="0.581" stop-color="#cc00c4"/><stop offset="0.725" stop-color="#cc00a2"/><stop offset="0.969" stop-color="#cc0084"/><stop offset="1.000" stop-color="#cc0082"/></linearGradient><linearGradient id="o160" gradientUnits="userSpaceOnUse" x1="119.2" x2="430.3" y1="0" y2="0"><stop offset="0.000" stop-color="#0098cc"/><stop offset="0.147" stop-color="#0080cc"/><stop offset="0.218" stop-color="#0068cc"/><stop offset="0.231" stop-color="#2265cc"/><stop offset="0.250" stop-color="#3a63cc"/><stop offset="0.301" stop-color="#605dcc"/><stop offset="0.417" stop-color="#954bcc"/><stop offset="0.519" stop-color="#bb30cc"/><stop offset="0.558" stop-color="#c91bcc"/><stop offset="0.571" stop-color="#cc0ccb"/><stop offset="0.577" stop-color="#cc00c9"/><stop offset="0.712" stop-color="#cc00a8"/><stop offset="0.942" stop-color="#cc008a"/><stop offset="1.000" stop-color="#cc0084"/></linearGradient><linearGradient id="o161" gradientUnits="userSpaceOnUse" x1="120.3" x2="423.4" y1="0" y2="0"><stop offset="0.000" stop-color="#0096cc"/><stop offset="0.145" stop-color="#007ecc"/><stop offset="0.217" stop-color="#0065cc"/><stop offset="0.230" stop-color="#2262cc"/><stop offset="0.250" stop-color="#3a60cc"/><stop offset="0.303" stop-color="#5f5acc"/><stop offset="0.421" stop-color="#9547cc"/><stop offset="0.520" stop-color="#b82bcc"/><stop offset="0.553" stop-color="#c319cc"/><stop offset="0.559" stop-color="#c512cc"/><stop offset="0.566" stop-color="#c700cc"/><stop offset="0.592" stop-color="#cc00c8"/><stop offset="0.737" stop-color="#cc00a7"/><stop offset="0.987" stop-color="#cc0088"/><stop offset="1.000" stop-color="#cc0087"/></linearGradient><linearGradient id="o162" gradientUnits="userSpaceOnUse" x1="121.4" x2="416.6" y1="0" y2="0"><stop offset="0.000" stop-color="#0094cc"/><stop offset="0.142" stop-color="#007ccc"/><stop offset="0.216" stop-color="#0063cc"/><stop offset="0.230" stop-color="#2160cc"/><stop offset="0.250" stop-color="#3a5ecc"/><stop offset="0.304" stop-color="#5f57cc"/><stop offset="0.426" stop-color="#9443cc"/><stop offset="0.514" stop-color="#b32acc"/><stop offset="0.547" stop-color="#be16cc"/><stop offset="0.554" stop-color="#c00ecc"/><stop offset="0.561" stop-color="#c200cc"/><stop offset="0.601" stop-color="#cc00c9"/><stop offset="0.750" stop-color="#cc00a8"/><stop offset="1.000" stop-color="#cc008a"/></linearGradient><linearGradient id="o163" gradientUnits="userSpaceOnUse" x1="122.6" x2="409.7" y1="0" y2="0"><stop offset="0.000" stop-color="#0092cc"/><stop offset="0.146" stop-color="#0079cc"/><stop offset="0.215" stop-color="#0061cc"/><stop offset="0.229" stop-color="#215dcc"/><stop offset="0.250" stop-color="#3a5bcc"/><stop offset="0.306" stop-color="#5e54cc"/><stop offset="0.431" stop-color="#933fcc"/><stop offset="0.514" stop-color="#af25cc"/><stop offset="0.542" stop-color="#b813cc"/><stop offset="0.556" stop-color="#bd00cc"/><stop offset="0.611" stop-color="#cc00ca"/><stop offset="0.771" stop-color="#cc00a8"/><stop offset="1.000" stop-color="#cc008d"/></linearGradient><linearGradient id="o164" gradientUnits="userSpaceOnUse" x1="123.7" x2="402.9" y1="0" y2="0"><stop offset="0.000" stop-color="#0090cc"/><stop offset="0.143" stop-color="#0077cc"/><stop offset="0.214" stop-color="#005ecc"/><stop offset="0.229" stop-color="#215bcc"/><stop offset="0.250" stop-color="#3a58cc"/><stop offset="0.307" stop-color="#5e51cc"/><stop offset="0.436" stop-color="#933acc"/><stop offset="0.507" stop-color="#aa23cc"/><stop offset="0.536" stop-color="#b30fcc"/><stop offset="0.543" stop-color="#b500cc"/><stop offset="0.621" stop-color="#cc00cb"/><stop offset="0.786" stop-color="#cc00a9"/><stop offset="1.000" stop-color="#cc0090"/></linearGradient><linearGradient id="o165" gradientUnits="userSpaceOnUse" x1="124.9" x2="396.0" y1="0" y2="0"><stop offset="0.000" stop-color="#008ecc"/><stop offset="0.140" stop-color="#0075cc"/><stop offset="0.213" stop-color="#005bcc"/><stop offset="0.228" stop-color="#2158cc"/><stop offset="0.250" stop-color="#3955cc"/><stop offset="0.309" stop-color="#5e4ecc"/><stop offset="0.441" stop-color="#9235cc"/><stop offset="0.507" stop-color="#a71ecc"/><stop offset="0.522" stop-color="#ac13cc"/><stop offset="0.537" stop-color="#b000cc"/><stop offset="0.640" stop-color="#cc00ca"/><stop offset="0.816" stop-color="#cc00a8"/><stop offset="1.000" stop-color="#cc0093"/></linearGradient><linearGradient id="o166" gradientUnits="userSpaceOnUse" x1="126.0" x2="389.2" y1="0" y2="0"><stop offset="0.000" stop-color="#008ccc"/><stop offset="0.144" stop-color="#0071cc"/><stop offset="0.212" stop-color="#0059cc"/><stop offset="0.227" stop-color="#2155cc"/><stop offset="0.250" stop-color="#3952cc"/><stop offset="0.311" stop-color="#5d4bcc"/><stop offset="0.447" stop-color="#9130cc"/><stop offset="0.500" stop-color="#a21ccc"/><stop offset="0.515" stop-color="#a610cc"/><stop offset="0.523" stop-color="#a900cc"/><stop offset="0.652" stop-color="#cc00cb"/><stop offset="0.833" stop-color="#cc00aa"/><stop offset="1.000" stop-color="#cc0096"/></linearGradient><linearGradient id="o167" gradientUnits="userSpaceOnUse" x1="127.2" x2="382.3" y1="0" y2="0"><stop offset="0.000" stop-color="#008acc"/><stop offset="0.141" stop-color="#006fcc"/><stop offset="0.211" stop-color="#0056cc"/><stop offset="0.227" stop-color="#2152cc"/><stop offset="0.250" stop-color="#394fcc"/><stop offset="0.312" stop-color="#5d47cc"/><stop offset="0.445" stop-color="#8e2ccc"/><stop offset="0.492" stop-color="#9c19cc"/><stop offset="0.508" stop-color="#a10bcc"/><stop offset="0.516" stop-color="#a300cc"/><stop offset="0.672" stop-color="#cc00ca"/><stop offset="0.867" stop-color="#cc00a9"/><stop offset="1.000" stop-color="#cc009a"/></linearGradient><linearGradient id="o168" gradientUnits="userSpaceOnUse" x1="128.4" x2="375.5" y1="0" y2="0"><stop offset="0.000" stop-color="#0087cc"/><stop offset="0.137" stop-color="#006dcc"/><stop offset="0.210" stop-color="#0053cc"/><stop offset="0.226" stop-color="#224fcc"/><stop offset="0.258" stop-color="#3f4bcc"/><stop offset="0.331" stop-color="#6441cc"/><stop offset="0.444" stop-color="#8b28cc"/><stop offset="0.484" stop-color="#9717cc"/><stop offset="0.492" stop-color="#9910cc"/><stop offset="0.500" stop-color="#9c00cc"/><stop offset="0.685" stop-color="#cc00cb"/><stop offset="0.887" stop-color="#cc00aa"/><stop offset="1.000" stop-color="#cc009d"/></linearGradient><linearGradient id="o169" gradientUnits="userSpaceOnUse" x1="129.6" x2="368.6" y1="0" y2="0"><stop offset="0.000" stop-color="#0085cc"/><stop offset="0.142" stop-color="#0069cc"/><stop offset="0.208" stop-color="#0050cc"/><stop offset="0.225" stop-color="#224ccc"/><stop offset="0.258" stop-color="#3f48cc"/><stop offset="0.333" stop-color="#633dcc"/><stop offset="0.442" stop-color="#8824cc"/><stop offset="0.475" stop-color="#9214cc"/><stop offset="0.492" stop-color="#9700cc"/><stop offset="0.700" stop-color="#cc00cc"/><stop offset="0.917" stop-color="#cc00aa"/><stop offset="1.000" stop-color="#cc00a1"/></linearGradient><linearGradient id="o170" gradientUnits="userSpaceOnUse" x1="130.8" x2="361.8" y1="0" y2="0"><stop offset="0.000" stop-color="#0082cc"/><stop offset="0.138" stop-color="#0067cc"/><stop offset="0.207" stop-color="#004dcc"/><stop offset="0.216" stop-color="#144acc"/><stop offset="0.233" stop-color="#2b48cc"/><stop offset="0.276" stop-color="#4843cc"/><stop offset="0.379" stop-color="#7231cc"/><stop offset="0.448" stop-color="#871bcc"/><stop offset="0.466" stop-color="#8c11cc"/><stop offset="0.474" stop-color="#8f03cc"/><stop offset="0.595" stop-color="#b000cc"/><stop offset="0.733" stop-color="#cc00ca"/><stop offset="0.966" stop-color="#cc00a8"/><stop offset="1.000" stop-color="#cc00a4"/></linearGradient><linearGradient id="o171" gradientUnits="userSpaceOnUse" x1="132.0" x2="354.9" y1="0" y2="0"><stop offset="0.000" stop-color="#007fcc"/><stop offset="0.134" stop-color="#0065cc"/><stop offset="0.205" stop-color="#004acc"/><stop offset="0.214" stop-color="#1547cc"/><stop offset="0.232" stop-color="#2b45cc"/><stop offset="0.277" stop-color="#483fcc"/><stop offset="0.384" stop-color="#722bcc"/><stop offset="0.438" stop-color="#8219cc"/><stop offset="0.455" stop-color="#870dcc"/><stop offset="0.464" stop-color="#8a00cc"/><stop offset="0.670" stop-color="#bd00cc"/><stop offset="0.750" stop-color="#cc00cb"/><stop offset="0.991" stop-color="#cc00a9"/><stop offset="1.000" stop-color="#cc00a8"/></linearGradient><linearGradient id="o172" gradientUnits="userSpaceOnUse" x1="133.2" x2="348.1" y1="0" y2="0"><stop offset="0.000" stop-color="#007dcc"/><stop offset="0.130" stop-color="#0063cc"/><stop offset="0.204" stop-color="#0047cc"/><stop offset="0.213" stop-color="#1544cc"/><stop offset="0.231" stop-color="#2b42cc"/><stop offset="0.287" stop-color="#4c3acc"/><stop offset="0.398" stop-color="#7422cc"/><stop offset="0.435" stop-color="#7f11cc"/><stop offset="0.444" stop-color="#8106cc"/><stop offset="0.454" stop-color="#8400cc"/><stop offset="0.657" stop-color="#b700cc"/><stop offset="0.778" stop-color="#cc00ca"/><stop offset="1.000" stop-color="#cc00ac"/></linearGradient><linearGradient id="o173" gradientUnits="userSpaceOnUse" x1="134.4" x2="341.2" y1="0" y2="0"><stop offset="0.000" stop-color="#007acc"/><stop offset="0.135" stop-color="#005ecc"/><stop offset="0.202" stop-color="#0044cc"/><stop offset="0.212" stop-color="#1541cc"/><stop offset="0.231" stop-color="#2b3ecc"/><stop offset="0.288" stop-color="#4c36cc"/><stop offset="0.394" stop-color="#711dcc"/><stop offset="0.423" stop-color="#790dcc"/><stop offset="0.433" stop-color="#7c00cc"/><stop offset="0.625" stop-color="#ad00cc"/><stop offset="0.798" stop-color="#cc00cb"/><stop offset="1.000" stop-color="#cc00b0"/></linearGradient><linearGradient id="o174" gradientUnits="userSpaceOnUse" x1="135.5" x2="334.4" y1="0" y2="0"><stop offset="0.000" stop-color="#0077cc"/><stop offset="0.130" stop-color="#005ccc"/><stop offset="0.200" stop-color="#0040cc"/><stop offset="0.210" stop-color="#163dcc"/><stop offset="0.230" stop-color="#2c3acc"/><stop offset="0.290" stop-color="#4c31cc"/><stop offset="0.380" stop-color="#6b1bcc"/><stop offset="0.400" stop-color="#7111cc"/><stop offset="0.420" stop-color="#7600cc"/><stop offset="0.610" stop-color="#a600cc"/><stop offset="0.820" stop-color="#cc00cb"/><stop offset="1.000" stop-color="#cc00b4"/></linearGradient><linearGradient id="o175" gradientUnits="userSpaceOnUse" x1="136.7" x2="327.5" y1="0" y2="0"><stop offset="0.000" stop-color="#0074cc"/><stop offset="0.125" stop-color="#005acc"/><stop offset="0.198" stop-color="#003dcc"/><stop offset="0.208" stop-color="#1639cc"/><stop offset="0.229" stop-color="#2c37cc"/><stop offset="0.292" stop-color="#4c2ccc"/><stop offset="0.365" stop-color="#6419cc"/><stop offset="0.385" stop-color="#6a0ecc"/><stop offset="0.396" stop-color="#6d00cc"/><stop offset="0.573" stop-color="#9b00cc"/><stop offset="0.844" stop-color="#cc00cc"/><stop offset="1.000" stop-color="#cc00b8"/></linearGradient><linearGradient id="o176" gradientUnits="userSpaceOnUse" x1="137.9" x2="320.7" y1="0" y2="0"><stop offset="0.000" stop-color="#0071cc"/><stop offset="0.130" stop-color="#0054cc"/><stop offset="0.196" stop-color="#0039cc"/><stop offset="0.207" stop-color="#1735cc"/><stop offset="0.228" stop-color="#2c32cc"/><stop offset="0.293" stop-color="#4c27cc"/><stop offset="0.359" stop-color="#6112cc"/><stop offset="0.380" stop-color="#6800cc"/><stop offset="0.554" stop-color="#9400cc"/><stop offset="0.859" stop-color="#c900cc"/><stop offset="1.000" stop-color="#cc00bc"/></linearGradient><linearGradient id="o177" gradientUnits="userSpaceOnUse" x1="139.1" x2="313.8" y1="0" y2="0"><stop offset="0.000" stop-color="#006dcc"/><stop offset="0.125" stop-color="#0052cc"/><stop offset="0.193" stop-color="#0035cc"/><stop offset="0.205" stop-color="#1731cc"/><stop offset="0.227" stop-color="#2c2ecc"/><stop offset="0.295" stop-color="#4b20cc"/><stop offset="0.341" stop-color="#5a0ecc"/><stop offset="0.352" stop-color="#5e00cc"/><stop offset="0.511" stop-color="#8900cc"/><stop offset="0.795" stop-color="#bb00cc"/><stop offset="0.932" stop-color="#cc00c9"/><stop offset="1.000" stop-color="#cc00c1"/></linearGradient><linearGradient id="o178" gradientUnits="userSpaceOnUse" x1="140.4" x2="307.0" y1="0" y2="0"><stop offset="0.000" stop-color="#0069cc"/><stop offset="0.119" stop-color="#004fcc"/><stop offset="0.179" stop-color="#0037cc"/><stop offset="0.190" stop-color="#0030cc"/><stop offset="0.202" stop-color="#182ccc"/><stop offset="0.226" stop-color="#2c28cc"/><stop offset="0.298" stop-color="#4b17cc"/><stop offset="0.321" stop-color="#5309cc"/><stop offset="0.333" stop-color="#5700cc"/><stop offset="0.488" stop-color="#8100cc"/><stop offset="0.762" stop-color="#b200cc"/><stop offset="0.964" stop-color="#cc00ca"/><stop offset="1.000" stop-color="#cc00c6"/></linearGradient><linearGradient id="o179" gradientUnits="userSpaceOnUse" x1="141.7" x2="300.1" y1="0" y2="0"><stop offset="0.000" stop-color="#0066cc"/><stop offset="0.125" stop-color="#0048cc"/><stop offset="0.175" stop-color="#0033cc"/><stop offset="0.187" stop-color="#002bcc"/><stop offset="0.200" stop-color="#1927cc"/><stop offset="0.225" stop-color="#2c22cc"/><stop offset="0.275" stop-color="#4314cc"/><stop offset="0.287" stop-color="#470ecc"/><stop offset="0.300" stop-color="#4b00cc"/><stop offset="0.425" stop-color="#7100cc"/><stop offset="0.663" stop-color="#9f00cc"/><stop offset="1.000" stop-color="#cc00cb"/></linearGradient><linearGradient id="o180" gradientUnits="userSpaceOnUse" x1="143.0" x2="293.3" y1="0" y2="0"><stop offset="0.000" stop-color="#0061cc"/><stop offset="0.118" stop-color="#0045cc"/><stop offset="0.171" stop-color="#002ecc"/><stop offset="0.184" stop-color="#0024cc"/><stop offset="0.197" stop-color="#1a20cc"/><stop offset="0.237" stop-color="#3316cc"/><stop offset="0.276" stop-color="#4400cc"/><stop offset="0.395" stop-color="#6900cc"/><stop offset="0.618" stop-color="#9500cc"/><stop offset="1.000" stop-color="#c800cc"/></linearGradient><linearGradient id="o181" gradientUnits="userSpaceOnUse" x1="144.4" x2="286.4" y1="0" y2="0"><stop offset="0.000" stop-color="#005dcc"/><stop offset="0.111" stop-color="#0042cc"/><stop offset="0.167" stop-color="#0028cc"/><stop offset="0.181" stop-color="#011ccc"/><stop offset="0.194" stop-color="#1b18cc"/><stop offset="0.222" stop-color="#2d0dcc"/><stop offset="0.236" stop-color="#3400cc"/><stop offset="0.319" stop-color="#5400cc"/><stop offset="0.500" stop-color="#7e00cc"/><stop offset="0.833" stop-color="#af00cc"/><stop offset="1.000" stop-color="#c300cc"/></linearGradient><linearGradient id="o182" gradientUnits="userSpaceOnUse" x1="145.8" x2="279.6" y1="0" y2="0"><stop offset="0.000" stop-color="#0058cc"/><stop offset="0.104" stop-color="#003dcc"/><stop offset="0.149" stop-color="#0029cc"/><stop offset="0.164" stop-color="#001ecc"/><stop offset="0.194" stop-color="#1f00cc"/><stop offset="0.239" stop-color="#3a00cc"/><stop offset="0.343" stop-color="#5b00cc"/><stop offset="0.552" stop-color="#8400cc"/><stop offset="0.940" stop-color="#b700cc"/><stop offset="1.000" stop-color="#bd00cc"/></linearGradient><linearGradient id="o183" gradientUnits="userSpaceOnUse" x1="147.3" x2="272.7" y1="0" y2="0"><stop offset="0.000" stop-color="#0052cc"/><stop offset="0.095" stop-color="#0039cc"/><stop offset="0.143" stop-color="#0022cc"/><stop offset="0.159" stop-color="#0011cc"/><stop offset="0.175" stop-color="#1a00cc"/><stop offset="0.206" stop-color="#3000cc"/><stop offset="0.286" stop-color="#4d00cc"/><stop offset="0.460" stop-color="#7300cc"/><stop offset="0.794" stop-color="#a200cc"/><stop offset="1.000" stop-color="#b800cc"/></linearGradient><linearGradient id="o184" gradientUnits="userSpaceOnUse" x1="148.8" x2="265.9" y1="0" y2="0"><stop offset="0.000" stop-color="#004ccc"/><stop offset="0.085" stop-color="#0035cc"/><stop offset="0.119" stop-color="#0025cc"/><stop offset="0.136" stop-color="#0018cc"/><stop offset="0.153" stop-color="#1400cc"/><stop offset="0.169" stop-color="#2300cc"/><stop offset="0.220" stop-color="#3b00cc"/><stop offset="0.356" stop-color="#5f00cc"/><stop offset="0.627" stop-color="#8a00cc"/><stop offset="1.000" stop-color="#b300cc"/></linearGradient><linearGradient id="o185" gradientUnits="userSpaceOnUse" x1="150.4" x2="259.0" y1="0" y2="0"><stop offset="0.000" stop-color="#0045cc"/><stop offset="0.073" stop-color="#002fcc"/><stop offset="0.109" stop-color="#001ccc"/><stop offset="0.127" stop-color="#0c00cc"/><stop offset="0.145" stop-color="#2000cc"/><stop offset="0.200" stop-color="#3900cc"/><stop offset="0.327" stop-color="#5900cc"/><stop offset="0.600" stop-color="#8400cc"/><stop offset="1.000" stop-color="#ae00cc"/></linearGradient><linearGradient id="o186" gradientUnits="userSpaceOnUse" x1="152.0" x2="252.2" y1="0" y2="0"><stop offset="0.000" stop-color="#003ccc"/><stop offset="0.059" stop-color="#0029cc"/><stop offset="0.078" stop-color="#001fcc"/><stop offset="0.098" stop-color="#000bcc"/><stop offset="0.118" stop-color="#1c00cc"/><stop offset="0.157" stop-color="#3000cc"/><stop offset="0.275" stop-color="#5000cc"/><stop offset="0.529" stop-color="#7800cc"/><stop offset="1.000" stop-color="#a800cc"/></linearGradient><linearGradient id="o187" gradientUnits="userSpaceOnUse" x1="153.7" x2="245.3" y1="0" y2="0"><stop offset="0.000" stop-color="#0031cc"/><stop offset="0.043" stop-color="#0020cc"/><stop offset="0.065" stop-color="#000fcc"/><stop offset="0.087" stop-color="#1a00cc"/><stop offset="0.130" stop-color="#2f00cc"/><stop offset="0.261" stop-color="#4f00cc"/><stop offset="0.543" stop-color="#7800cc"/><stop offset="1.000" stop-color="#a300cc"/></linearGradient><linearGradient id="o188" gradientUnits="userSpaceOnUse" x1="155.5" x2="238.5" y1="0" y2="0"><stop offset="0.000" stop-color="#0022cc"/><stop offset="0.024" stop-color="#0014cc"/><stop offset="0.048" stop-color="#1700cc"/><stop offset="0.095" stop-color="#2d00cc"/><stop offset="0.214" stop-color="#4a00cc"/><stop offset="0.476" stop-color="#6e00cc"/><stop offset="1.000" stop-color="#9e00cc"/></linearGradient><linearGradient id="o189" gradientUnits="userSpaceOnUse" x1="157.3" x2="231.6" y1="0" y2="0"><stop offset="0.000" stop-color="#1500cc"/><stop offset="0.053" stop-color="#2c00cc"/><stop offset="0.184" stop-color="#4800cc"/><stop offset="0.474" stop-color="#6d00cc"/><stop offset="1.000" stop-color="#9800cc"/></linearGradient><linearGradient id="o190" gradientUnits="userSpaceOnUse" x1="159.2" x2="224.8" y1="0" y2="0"><stop offset="0.000" stop-color="#2b00cc"/><stop offset="0.152" stop-color="#4800cc"/><stop offset="0.485" stop-color="#6d00cc"/><stop offset="1.000" stop-color="#9300cc"/></linearGradient><linearGradient id="o191" gradientUnits="userSpaceOnUse" x1="161.1" x2="217.9" y1="0" y2="0"><stop offset="0.000" stop-color="#3800cc"/><stop offset="0.276" stop-color="#5a00cc"/><stop offset="0.828" stop-color="#8300cc"/><stop offset="1.000" stop-color="#8d00cc"/></linearGradient><linearGradient id="o192" gradientUnits="userSpaceOnUse" x1="163.1" x2="211.1" y1="0" y2="0"><stop offset="0.000" stop-color="#4200cc"/><stop offset="0.417" stop-color="#6600cc"/><stop offset="1.000" stop-color="#8700cc"/></linearGradient><linearGradient id="o193" gradientUnits="userSpaceOnUse" x1="165.1" x2="204.3" y1="0" y2="0"><stop offset="0.000" stop-color="#4a00cc"/><stop offset="0.650" stop-color="#7200cc"/><stop offset="1.000" stop-color="#8100cc"/></linearGradient><linearGradient id="o194" gradientUnits="userSpaceOnUse" x1="167.4" x2="197.6" y1="0" y2="0"><stop offset="0.000" stop-color="#5200cc"/><stop offset="0.937" stop-color="#7900cc"/><stop offset="1.000" stop-color="#7b00cc"/></linearGradient><linearGradient id="o195" gradientUnits="userSpaceOnUse" x1="170.4" x2="190.7" y1="0" y2="0"><stop offset="0.000" stop-color="#5a00cc"/><stop offset="1.000" stop-color="#7500cc"/></linearGradient><linearGradient id="o196" gradientUnits="userSpaceOnUse" x1="175.3" x2="183.4" y1="0" y2="0"><stop offset="0.000" stop-color="#6300cc"/><stop offset="1.000" stop-color="#6e00cc"/></linearGradient><linearGradient id="i0" gradientUnits="userSpaceOnUse" x1="282.4" x2="287.6" y1="0" y2="0"><stop offset="0.000" stop-color="#00ff22"/><stop offset="0.333" stop-color="#0eff0a"/><stop offset="0.667" stop-color="#24ff00"/><stop offset="1.000" stop-color="#31ff00"/></linearGradient><linearGradient id="i1" gradientUnits="userSpaceOnUse" x1="281.5" x2="291.6" y1="0" y2="0"><stop offset="0.000" stop-color="#00ff2b"/><stop offset="0.167" stop-color="#0dff1d"/><stop offset="0.333" stop-color="#21ff19"/><stop offset="0.833" stop-color="#3eff00"/><stop offset="1.000" stop-color="#45ff00"/></linearGradient><linearGradient id="i2" gradientUnits="userSpaceOnUse" x1="280.7" x2="295.6" y1="0" y2="0"><stop offset="0.000" stop-color="#00ff32"/><stop offset="0.125" stop-color="#11ff27"/><stop offset="0.250" stop-color="#24ff24"/><stop offset="0.625" stop-color="#40ff15"/><stop offset="0.875" stop-color="#4eff00"/><stop offset="1.000" stop-color="#54ff00"/></linearGradient><linearGradient id="i3" gradientUnits="userSpaceOnUse" x1="279.8" x2="299.6" y1="0" y2="0"><stop offset="0.000" stop-color="#00ff38"/><stop offset="0.100" stop-color="#13ff2f"/><stop offset="0.200" stop-color="#26ff2c"/><stop offset="0.500" stop-color="#42ff21"/><stop offset="0.800" stop-color="#55ff0e"/><stop offset="0.900" stop-color="#5bff00"/><stop offset="1.000" stop-color="#61ff00"/></linearGradient><linearGradient id="i4" gradientUnits="userSpaceOnUse" x1="278.9" x2="303.6" y1="0" y2="0"><stop offset="0.000" stop-color="#00ff3d"/><stop offset="0.077" stop-color="#12ff36"/><stop offset="0.154" stop-color="#25ff33"/><stop offset="0.385" stop-color="#41ff2b"/><stop offset="0.769" stop-color="#5eff16"/><stop offset="0.923" stop-color="#67ff00"/><stop offset="1.000" stop-color="#6cff00"/></linearGradient><linearGradient id="i5" gradientUnits="userSpaceOnUse" x1="278.0" x2="307.6" y1="0" y2="0"><stop offset="0.000" stop-color="#00ff43"/><stop offset="0.067" stop-color="#13ff3b"/><stop offset="0.133" stop-color="#26ff39"/><stop offset="0.333" stop-color="#43ff32"/><stop offset="0.733" stop-color="#64ff1d"/><stop offset="0.867" stop-color="#6dff0e"/><stop offset="0.933" stop-color="#72ff00"/><stop offset="1.000" stop-color="#77ff00"/></linearGradient><linearGradient id="i6" gradientUnits="userSpaceOnUse" x1="277.1" x2="311.6" y1="0" y2="0"><stop offset="0.000" stop-color="#00ff47"/><stop offset="0.111" stop-color="#26ff3f"/><stop offset="0.278" stop-color="#42ff39"/><stop offset="0.667" stop-color="#68ff25"/><stop offset="0.833" stop-color="#74ff16"/><stop offset="0.944" stop-color="#7cff00"/><stop offset="1.000" stop-color="#80ff00"/></linearGradient><linearGradient id="i7" gradientUnits="userSpaceOnUse" x1="276.3" x2="315.6" y1="0" y2="0"><stop offset="0.000" stop-color="#00ff4c"/><stop offset="0.100" stop-color="#27ff44"/><stop offset="0.250" stop-color="#43ff3e"/><stop offset="0.600" stop-color="#6aff2d"/><stop offset="0.850" stop-color="#7eff17"/><stop offset="0.950" stop-color="#85ff00"/><stop offset="1.000" stop-color="#8aff00"/></linearGradient><linearGradient id="i8" gradientUnits="userSpaceOnUse" x1="275.4" x2="319.6" y1="0" y2="0"><stop offset="0.000" stop-color="#00ff50"/><stop offset="0.087" stop-color="#26ff49"/><stop offset="0.217" stop-color="#43ff44"/><stop offset="0.522" stop-color="#69ff35"/><stop offset="0.826" stop-color="#84ff1d"/><stop offset="0.913" stop-color="#8bff0d"/><stop offset="0.957" stop-color="#8fff00"/><stop offset="1.000" stop-color="#92ff00"/></linearGradient><linearGradient id="i9" gradientUnits="userSpaceOnUse" x1="274.5" x2="323.6" y1="0" y2="0"><stop offset="0.000" stop-color="#00ff54"/><stop offset="0.080" stop-color="#27ff4d"/><stop offset="0.200" stop-color="#44ff48"/><stop offset="0.480" stop-color="#6aff3b"/><stop offset="0.800" stop-color="#8aff23"/><stop offset="0.880" stop-color="#90ff18"/><stop offset="0.960" stop-color="#97ff00"/><stop offset="1.000" stop-color="#9bff00"/></linearGradient><linearGradient id="i10" gradientUnits="userSpaceOnUse" x1="273.6" x2="327.6" y1="0" y2="0"><stop offset="0.000" stop-color="#00ff58"/><stop offset="0.074" stop-color="#27ff51"/><stop offset="0.185" stop-color="#45ff4d"/><stop offset="0.444" stop-color="#6cff40"/><stop offset="0.778" stop-color="#8fff28"/><stop offset="0.889" stop-color="#99ff18"/><stop offset="0.926" stop-color="#9cff0f"/><stop offset="0.963" stop-color="#a0ff00"/><stop offset="1.000" stop-color="#a3ff00"/></linearGradient><linearGradient id="i11" gradientUnits="userSpaceOnUse" x1="272.7" x2="331.6" y1="0" y2="0"><stop offset="0.000" stop-color="#00ff5b"/><stop offset="0.067" stop-color="#27ff55"/><stop offset="0.167" stop-color="#44ff51"/><stop offset="0.400" stop-color="#6bff46"/><stop offset="0.767" stop-color="#95ff2b"/><stop offset="0.900" stop-color="#a2ff18"/><stop offset="0.967" stop-color="#a8ff00"/><stop offset="1.000" stop-color="#abff00"/></linearGradient><linearGradient id="i12" gradientUnits="userSpaceOnUse" x1="271.8" x2="335.6" y1="0" y2="0"><stop offset="0.000" stop-color="#00ff5f"/><stop offset="0.063" stop-color="#28ff59"/><stop offset="0.156" stop-color="#45ff55"/><stop offset="0.375" stop-color="#6cff4b"/><stop offset="0.750" stop-color="#9aff2f"/><stop offset="0.906" stop-color="#aaff19"/><stop offset="0.937" stop-color="#adff0f"/><stop offset="0.969" stop-color="#b0ff00"/><stop offset="1.000" stop-color="#b3ff00"/></linearGradient><linearGradient id="i13" gradientUnits="userSpaceOnUse" x1="271.0" x2="339.6" y1="0" y2="0"><stop offset="0.000" stop-color="#00ff63"/><stop offset="0.057" stop-color="#27ff5d"/><stop offset="0.143" stop-color="#45ff59"/><stop offset="0.343" stop-color="#6cff50"/><stop offset="0.743" stop-color="#a0ff32"/><stop offset="0.886" stop-color="#afff1f"/><stop offset="0.943" stop-color="#b5ff0f"/><stop offset="0.971" stop-color="#b8ff00"/><stop offset="1.000" stop-color="#bbff00"/></linearGradient><linearGradient id="i14" gradientUnits="userSpaceOnUse" x1="270.1" x2="343.6" y1="0" y2="0"><stop offset="0.000" stop-color="#00ff66"/><stop offset="0.054" stop-color="#28ff61"/><stop offset="0.135" stop-color="#45ff5d"/><stop offset="0.324" stop-color="#6dff54"/><stop offset="0.703" stop-color="#a1ff39"/><stop offset="0.892" stop-color="#b7ff1f"/><stop offset="0.946" stop-color="#bdff0f"/><stop offset="0.973" stop-color="#c0ff00"/><stop offset="1.000" stop-color="#c3ff00"/></linearGradient><linearGradient id="i15" gradientUnits="userSpaceOnUse" x1="269.2" x2="347.6" y1="0" y2="0"><stop offset="0.000" stop-color="#00ff69"/><stop offset="0.050" stop-color="#28ff64"/><stop offset="0.125" stop-color="#45ff61"/><stop offset="0.300" stop-color="#6dff58"/><stop offset="0.650" stop-color="#a1ff40"/><stop offset="0.850" stop-color="#b9ff29"/><stop offset="0.925" stop-color="#c2ff19"/><stop offset="0.975" stop-color="#c7ff00"/><stop offset="1.000" stop-color="#caff00"/></linearGradient><linearGradient id="i16" gradientUnits="userSpaceOnUse" x1="268.3" x2="351.6" y1="0" y2="0"><stop offset="0.000" stop-color="#00ff6d"/><stop offset="0.048" stop-color="#28ff68"/><stop offset="0.119" stop-color="#46ff65"/><stop offset="0.286" stop-color="#6eff5c"/><stop offset="0.619" stop-color="#a3ff45"/><stop offset="0.857" stop-color="#c1ff2a"/><stop offset="0.929" stop-color="#c9ff19"/><stop offset="0.952" stop-color="#ccff0f"/><stop offset="0.976" stop-color="#cfff00"/><stop offset="1.000" stop-color="#d2ff00"/></linearGradient><linearGradient id="i17" gradientUnits="userSpaceOnUse" x1="267.4" x2="355.6" y1="0" y2="0"><stop offset="0.000" stop-color="#00ff70"/><stop offset="0.044" stop-color="#28ff6b"/><stop offset="0.111" stop-color="#46ff68"/><stop offset="0.267" stop-color="#6eff60"/><stop offset="0.578" stop-color="#a2ff4b"/><stop offset="0.822" stop-color="#c3ff31"/><stop offset="0.933" stop-color="#d1ff19"/><stop offset="0.978" stop-color="#d7ff00"/><stop offset="1.000" stop-color="#daff00"/></linearGradient><linearGradient id="i18" gradientUnits="userSpaceOnUse" x1="266.5" x2="359.6" y1="0" y2="0"><stop offset="0.000" stop-color="#00ff73"/><stop offset="0.043" stop-color="#28ff6f"/><stop offset="0.106" stop-color="#46ff6c"/><stop offset="0.255" stop-color="#6fff64"/><stop offset="0.553" stop-color="#a4ff50"/><stop offset="0.809" stop-color="#c8ff35"/><stop offset="0.915" stop-color="#d6ff20"/><stop offset="0.957" stop-color="#dcff10"/><stop offset="0.979" stop-color="#deff00"/><stop offset="1.000" stop-color="#e1ff00"/></linearGradient><linearGradient id="i19" gradientUnits="userSpaceOnUse" x1="265.7" x2="363.6" y1="0" y2="0"><stop offset="0.000" stop-color="#00ff76"/><stop offset="0.041" stop-color="#29ff72"/><stop offset="0.102" stop-color="#47ff6f"/><stop offset="0.245" stop-color="#70ff68"/><stop offset="0.531" stop-color="#a6ff55"/><stop offset="0.816" stop-color="#d0ff36"/><stop offset="0.918" stop-color="#deff21"/><stop offset="0.959" stop-color="#e3ff10"/><stop offset="0.980" stop-color="#e6ff00"/><stop offset="1.000" stop-color="#e9ff00"/></linearGradient><linearGradient id="i20" gradientUnits="userSpaceOnUse" x1="264.8" x2="367.6" y1="0" y2="0"><stop offset="0.000" stop-color="#00ff79"/><stop offset="0.038" stop-color="#29ff75"/><stop offset="0.096" stop-color="#47ff72"/><stop offset="0.231" stop-color="#70ff6b"/><stop offset="0.500" stop-color="#a5ff5a"/><stop offset="0.788" stop-color="#d3ff3c"/><stop offset="0.904" stop-color="#e3ff27"/><stop offset="0.942" stop-color="#e8ff1a"/><stop offset="0.962" stop-color="#ebff10"/><stop offset="0.981" stop-color="#eeff00"/><stop offset="1.000" stop-color="#f0ff00"/></linearGradient><linearGradient id="i21" gradientUnits="userSpaceOnUse" x1="263.9" x2="371.6" y1="0" y2="0"><stop offset="0.000" stop-color="#00ff7c"/><stop offset="0.037" stop-color="#29ff78"/><stop offset="0.093" stop-color="#48ff76"/><stop offset="0.222" stop-color="#71ff6f"/><stop offset="0.481" stop-color="#a7ff5e"/><stop offset="0.778" stop-color="#d7ff40"/><stop offset="0.907" stop-color="#ebff27"/><stop offset="0.944" stop-color="#f0ff1b"/><stop offset="0.963" stop-color="#f3ff10"/><stop offset="0.981" stop-color="#f6ff00"/><stop offset="1.000" stop-color="#f8ff00"/></linearGradient><linearGradient id="i22" gradientUnits="userSpaceOnUse" x1="263.0" x2="375.6" y1="0" y2="0"><stop offset="0.000" stop-color="#00ff7f"/><stop offset="0.035" stop-color="#29ff7b"/><stop offset="0.088" stop-color="#48ff79"/><stop offset="0.211" stop-color="#71ff72"/><stop offset="0.456" stop-color="#a7ff62"/><stop offset="0.772" stop-color="#ddff42"/><stop offset="0.912" stop-color="#f3ff27"/><stop offset="0.947" stop-color="#f8ff1b"/><stop offset="0.965" stop-color="#fbff10"/><stop offset="0.982" stop-color="#fdff00"/><stop offset="1.000" stop-color="#fffe00"/></linearGradient><linearGradient id="i23" gradientUnits="userSpaceOnUse" x1="262.1" x2="379.6" y1="0" y2="0"><stop offset="0.000" stop-color="#00ff82"/><stop offset="0.034" stop-color="#29ff7f"/><stop offset="0.085" stop-color="#48ff7c"/><stop offset="0.203" stop-color="#72ff76"/><stop offset="0.441" stop-color="#a8ff66"/><stop offset="0.746" stop-color="#dfff48"/><stop offset="0.898" stop-color="#f8ff2d"/><stop offset="0.949" stop-color="#fffe1b"/><stop offset="0.966" stop-color="#fffb10"/><stop offset="0.983" stop-color="#fff900"/><stop offset="1.000" stop-color="#fff600"/></linearGradient><linearGradient id="i24" gradientUnits="userSpaceOnUse" x1="261.3" x2="383.6" y1="0" y2="0"><stop offset="0.000" stop-color="#00ff85"/><stop offset="0.032" stop-color="#29ff82"/><stop offset="0.081" stop-color="#48ff7f"/><stop offset="0.194" stop-color="#72ff79"/><stop offset="0.419" stop-color="#a8ff6b"/><stop offset="0.742" stop-color="#e5ff4b"/><stop offset="0.887" stop-color="#fdff31"/><stop offset="0.952" stop-color="#fff61a"/><stop offset="0.968" stop-color="#fff410"/><stop offset="0.984" stop-color="#fff100"/><stop offset="1.000" stop-color="#ffef00"/></linearGradient><linearGradient id="i25" gradientUnits="userSpaceOnUse" x1="260.4" x2="387.6" y1="0" y2="0"><stop offset="0.000" stop-color="#00ff88"/><stop offset="0.031" stop-color="#2aff85"/><stop offset="0.078" stop-color="#49ff82"/><stop offset="0.187" stop-color="#73ff7c"/><stop offset="0.406" stop-color="#aaff6e"/><stop offset="0.734" stop-color="#eaff4e"/><stop offset="0.859" stop-color="#fffe39"/><stop offset="0.938" stop-color="#fff121"/><stop offset="0.969" stop-color="#ffed10"/><stop offset="0.984" stop-color="#ffea00"/><stop offset="1.000" stop-color="#ffe800"/></linearGradient><linearGradient id="i26" gradientUnits="userSpaceOnUse" x1="259.5" x2="391.6" y1="0" y2="0"><stop offset="0.000" stop-color="#00ff8b"/><stop offset="0.030" stop-color="#2aff88"/><stop offset="0.075" stop-color="#49ff85"/><stop offset="0.164" stop-color="#6eff81"/><stop offset="0.358" stop-color="#a3ff75"/><stop offset="0.701" stop-color="#eaff55"/><stop offset="0.821" stop-color="#fffe42"/><stop offset="0.940" stop-color="#ffea20"/><stop offset="0.970" stop-color="#ffe60f"/><stop offset="0.985" stop-color="#ffe400"/><stop offset="1.000" stop-color="#ffe200"/></linearGradient><linearGradient id="i27" gradientUnits="userSpaceOnUse" x1="258.6" x2="395.6" y1="0" y2="0"><stop offset="0.000" stop-color="#00ff8e"/><stop offset="0.029" stop-color="#2aff8b"/><stop offset="0.072" stop-color="#49ff89"/><stop offset="0.159" stop-color="#6fff84"/><stop offset="0.348" stop-color="#a5ff78"/><stop offset="0.696" stop-color="#efff58"/><stop offset="0.783" stop-color="#fffe4b"/><stop offset="0.928" stop-color="#ffe626"/><stop offset="0.957" stop-color="#ffe119"/><stop offset="0.971" stop-color="#ffdf0f"/><stop offset="0.986" stop-color="#ffdd00"/><stop offset="1.000" stop-color="#ffdb00"/></linearGradient><linearGradient id="i28" gradientUnits="userSpaceOnUse" x1="257.7" x2="399.6" y1="0" y2="0"><stop offset="0.000" stop-color="#00ff91"/><stop offset="0.028" stop-color="#2aff8e"/><stop offset="0.070" stop-color="#4aff8c"/><stop offset="0.155" stop-color="#70ff87"/><stop offset="0.338" stop-color="#a6ff7c"/><stop offset="0.690" stop-color="#f4ff5b"/><stop offset="0.761" stop-color="#fffc50"/><stop offset="0.915" stop-color="#ffe12a"/><stop offset="0.958" stop-color="#ffdb19"/><stop offset="0.972" stop-color="#ffd90f"/><stop offset="0.986" stop-color="#ffd700"/><stop offset="1.000" stop-color="#ffd500"/></linearGradient><linearGradient id="i29" gradientUnits="userSpaceOnUse" x1="256.8" x2="403.6" y1="0" y2="0"><stop offset="0.000" stop-color="#00ff94"/><stop offset="0.027" stop-color="#2aff91"/><stop offset="0.068" stop-color="#4aff8f"/><stop offset="0.162" stop-color="#75ff8a"/><stop offset="0.311" stop-color="#a3ff81"/><stop offset="0.689" stop-color="#faff5d"/><stop offset="0.743" stop-color="#fff954"/><stop offset="0.919" stop-color="#ffda29"/><stop offset="0.959" stop-color="#ffd418"/><stop offset="0.986" stop-color="#ffd100"/><stop offset="1.000" stop-color="#ffcf00"/></linearGradient><linearGradient id="i30" gradientUnits="userSpaceOnUse" x1="256.0" x2="407.6" y1="0" y2="0"><stop offset="0.000" stop-color="#00ff97"/><stop offset="0.026" stop-color="#2bff94"/><stop offset="0.066" stop-color="#4cff93"/><stop offset="0.145" stop-color="#75ff91"/><stop offset="0.276" stop-color="#a0ff8a"/><stop offset="0.684" stop-color="#ffff60"/><stop offset="0.908" stop-color="#ffd62d"/><stop offset="0.961" stop-color="#ffcf18"/><stop offset="0.974" stop-color="#ffcd0f"/><stop offset="0.987" stop-color="#ffcb00"/><stop offset="1.000" stop-color="#ffc900"/></linearGradient><linearGradient id="i31" gradientUnits="userSpaceOnUse" x1="255.1" x2="411.6" y1="0" y2="0"><stop offset="0.000" stop-color="#02ff9a"/><stop offset="0.025" stop-color="#2fff98"/><stop offset="0.051" stop-color="#47ff98"/><stop offset="0.114" stop-color="#6dff97"/><stop offset="0.228" stop-color="#98ff93"/><stop offset="0.456" stop-color="#d1ff7e"/><stop offset="0.658" stop-color="#fffe66"/><stop offset="0.911" stop-color="#ffd02c"/><stop offset="0.962" stop-color="#ffc918"/><stop offset="0.987" stop-color="#ffc500"/><stop offset="1.000" stop-color="#ffc400"/></linearGradient><linearGradient id="i32" gradientUnits="userSpaceOnUse" x1="254.2" x2="415.6" y1="0" y2="0"><stop offset="0.000" stop-color="#08ff9f"/><stop offset="0.025" stop-color="#34ff9e"/><stop offset="0.062" stop-color="#56ff9e"/><stop offset="0.136" stop-color="#7dff9d"/><stop offset="0.259" stop-color="#a7ff97"/><stop offset="0.481" stop-color="#dcff80"/><stop offset="0.630" stop-color="#ffff6c"/><stop offset="0.877" stop-color="#ffd036"/><stop offset="0.951" stop-color="#ffc51e"/><stop offset="0.975" stop-color="#ffc10e"/><stop offset="0.988" stop-color="#ffc000"/><stop offset="1.000" stop-color="#ffbe00"/></linearGradient><linearGradient id="i33" gradientUnits="userSpaceOnUse" x1="253.3" x2="419.6" y1="0" y2="0"><stop offset="0.000" stop-color="#0effa4"/><stop offset="0.024" stop-color="#39ffa3"/><stop offset="0.060" stop-color="#5affa3"/><stop offset="0.131" stop-color="#81ffa2"/><stop offset="0.262" stop-color="#adff9d"/><stop offset="0.476" stop-color="#e1ff86"/><stop offset="0.607" stop-color="#fffe71"/><stop offset="0.845" stop-color="#ffcf3e"/><stop offset="0.940" stop-color="#ffc122"/><stop offset="0.976" stop-color="#ffbc0e"/><stop offset="0.988" stop-color="#ffba00"/><stop offset="1.000" stop-color="#ffb900"/></linearGradient><linearGradient id="i34" gradientUnits="userSpaceOnUse" x1="252.4" x2="423.6" y1="0" y2="0"><stop offset="0.000" stop-color="#13ffa9"/><stop offset="0.023" stop-color="#3fffa8"/><stop offset="0.058" stop-color="#5fffa8"/><stop offset="0.128" stop-color="#85ffa8"/><stop offset="0.256" stop-color="#b1ffa3"/><stop offset="0.465" stop-color="#e3ff8d"/><stop offset="0.581" stop-color="#ffff78"/><stop offset="0.802" stop-color="#ffd147"/><stop offset="0.930" stop-color="#ffbd26"/><stop offset="0.965" stop-color="#ffb817"/><stop offset="0.988" stop-color="#ffb500"/><stop offset="1.000" stop-color="#ffb400"/></linearGradient><linearGradient id="i35" gradientUnits="userSpaceOnUse" x1="251.6" x2="427.6" y1="0" y2="0"><stop offset="0.000" stop-color="#19ffae"/><stop offset="0.022" stop-color="#43ffad"/><stop offset="0.056" stop-color="#64ffad"/><stop offset="0.124" stop-color="#89ffad"/><stop offset="0.247" stop-color="#b4ffa9"/><stop offset="0.449" stop-color="#e5ff95"/><stop offset="0.562" stop-color="#fffe81"/><stop offset="0.640" stop-color="#ffeb6a"/><stop offset="0.899" stop-color="#ffbd30"/><stop offset="0.966" stop-color="#ffb316"/><stop offset="0.989" stop-color="#ffb000"/><stop offset="1.000" stop-color="#ffaf00"/></linearGradient><linearGradient id="i36" gradientUnits="userSpaceOnUse" x1="250.7" x2="431.6" y1="0" y2="0"><stop offset="0.000" stop-color="#1fffb2"/><stop offset="0.022" stop-color="#49ffb1"/><stop offset="0.055" stop-color="#68ffb2"/><stop offset="0.121" stop-color="#8effb2"/><stop offset="0.242" stop-color="#b8ffae"/><stop offset="0.440" stop-color="#e7ff9b"/><stop offset="0.538" stop-color="#ffff8a"/><stop offset="0.637" stop-color="#ffe66b"/><stop offset="0.890" stop-color="#ffb932"/><stop offset="0.956" stop-color="#ffaf1c"/><stop offset="0.978" stop-color="#ffad0d"/><stop offset="0.989" stop-color="#ffab00"/><stop offset="1.000" stop-color="#ffaa00"/></linearGradient><linearGradient id="i37" gradientUnits="userSpaceOnUse" x1="249.8" x2="435.6" y1="0" y2="0"><stop offset="0.000" stop-color="#24ffb7"/><stop offset="0.022" stop-color="#4effb6"/><stop offset="0.054" stop-color="#6dffb6"/><stop offset="0.118" stop-color="#92ffb7"/><stop offset="0.237" stop-color="#bbffb4"/><stop offset="0.430" stop-color="#eaffa2"/><stop offset="0.527" stop-color="#fffd90"/><stop offset="0.645" stop-color="#ffdf69"/><stop offset="0.903" stop-color="#ffb22f"/><stop offset="0.968" stop-color="#ffa916"/><stop offset="0.989" stop-color="#ffa600"/><stop offset="1.000" stop-color="#ffa500"/></linearGradient><linearGradient id="i38" gradientUnits="userSpaceOnUse" x1="248.9" x2="439.6" y1="0" y2="0"><stop offset="0.000" stop-color="#2affbb"/><stop offset="0.021" stop-color="#52ffba"/><stop offset="0.052" stop-color="#71ffbb"/><stop offset="0.115" stop-color="#95ffbb"/><stop offset="0.229" stop-color="#beffb9"/><stop offset="0.427" stop-color="#edffa7"/><stop offset="0.510" stop-color="#fffc98"/><stop offset="0.656" stop-color="#ffd867"/><stop offset="0.906" stop-color="#ffad2e"/><stop offset="0.969" stop-color="#ffa416"/><stop offset="0.990" stop-color="#ffa200"/><stop offset="1.000" stop-color="#ffa100"/></linearGradient><linearGradient id="i39" gradientUnits="userSpaceOnUse" x1="248.0" x2="443.6" y1="0" y2="0"><stop offset="0.000" stop-color="#2fffbf"/><stop offset="0.020" stop-color="#57ffbe"/><stop offset="0.051" stop-color="#76ffbf"/><stop offset="0.112" stop-color="#9affc0"/><stop offset="0.214" stop-color="#beffbe"/><stop offset="0.408" stop-color="#edffae"/><stop offset="0.490" stop-color="#fffda0"/><stop offset="0.653" stop-color="#ffd368"/><stop offset="0.908" stop-color="#ffa82e"/><stop offset="0.969" stop-color="#ff9f15"/><stop offset="0.990" stop-color="#ff9d00"/><stop offset="1.000" stop-color="#ff9c00"/></linearGradient><linearGradient id="i40" gradientUnits="userSpaceOnUse" x1="247.1" x2="447.6" y1="0" y2="0"><stop offset="0.000" stop-color="#34ffc3"/><stop offset="0.020" stop-color="#5cffc2"/><stop offset="0.050" stop-color="#7affc3"/><stop offset="0.109" stop-color="#9dffc4"/><stop offset="0.208" stop-color="#c1ffc3"/><stop offset="0.396" stop-color="#eeffb5"/><stop offset="0.475" stop-color="#fffca7"/><stop offset="0.663" stop-color="#ffcc65"/><stop offset="0.911" stop-color="#ffa32d"/><stop offset="0.970" stop-color="#ff9b15"/><stop offset="0.990" stop-color="#ff9800"/><stop offset="1.000" stop-color="#ff9700"/></linearGradient><linearGradient id="i41" gradientUnits="userSpaceOnUse" x1="246.3" x2="451.6" y1="0" y2="0"><stop offset="0.000" stop-color="#39ffc6"/><stop offset="0.019" stop-color="#60ffc6"/><stop offset="0.049" stop-color="#7effc7"/><stop offset="0.107" stop-color="#a1ffc8"/><stop offset="0.204" stop-color="#c5ffc8"/><stop offset="0.388" stop-color="#f1ffba"/><stop offset="0.456" stop-color="#fffdaf"/><stop offset="0.660" stop-color="#ffc866"/><stop offset="0.913" stop-color="#ff9e2d"/><stop offset="0.971" stop-color="#ff9615"/><stop offset="0.990" stop-color="#ff9400"/><stop offset="1.000" stop-color="#ff9300"/></linearGradient><linearGradient id="i42" gradientUnits="userSpaceOnUse" x1="245.4" x2="455.6" y1="0" y2="0"><stop offset="0.000" stop-color="#3effca"/><stop offset="0.019" stop-color="#64ffca"/><stop offset="0.047" stop-color="#82ffcb"/><stop offset="0.104" stop-color="#a5ffcc"/><stop offset="0.198" stop-color="#c7ffcc"/><stop offset="0.377" stop-color="#f2ffc0"/><stop offset="0.443" stop-color="#fffcb5"/><stop offset="0.623" stop-color="#ffce74"/><stop offset="0.670" stop-color="#ffc264"/><stop offset="0.915" stop-color="#ff992c"/><stop offset="0.972" stop-color="#ff9115"/><stop offset="0.991" stop-color="#ff8f00"/><stop offset="1.000" stop-color="#ff8e00"/></linearGradient><linearGradient id="i43" gradientUnits="userSpaceOnUse" x1="244.5" x2="459.6" y1="0" y2="0"><stop offset="0.000" stop-color="#43ffcd"/><stop offset="0.019" stop-color="#69ffcd"/><stop offset="0.046" stop-color="#86ffce"/><stop offset="0.102" stop-color="#a8ffd0"/><stop offset="0.194" stop-color="#cbffd0"/><stop offset="0.380" stop-color="#f6ffc4"/><stop offset="0.426" stop-color="#fffdbc"/><stop offset="0.602" stop-color="#ffcf7d"/><stop offset="0.667" stop-color="#ffbe65"/><stop offset="0.917" stop-color="#ff952c"/><stop offset="0.972" stop-color="#ff8d14"/><stop offset="0.991" stop-color="#ff8b00"/><stop offset="1.000" stop-color="#ff8a00"/></linearGradient><linearGradient id="i44" gradientUnits="userSpaceOnUse" x1="243.6" x2="463.6" y1="0" y2="0"><stop offset="0.000" stop-color="#47ffd1"/><stop offset="0.018" stop-color="#6dffd1"/><stop offset="0.045" stop-color="#8affd2"/><stop offset="0.100" stop-color="#acffd4"/><stop offset="0.191" stop-color="#ceffd4"/><stop offset="0.373" stop-color="#f8ffc8"/><stop offset="0.418" stop-color="#fffcc0"/><stop offset="0.591" stop-color="#ffce82"/><stop offset="0.664" stop-color="#ffba65"/><stop offset="0.909" stop-color="#ff912e"/><stop offset="0.964" stop-color="#ff8a1a"/><stop offset="0.982" stop-color="#ff870c"/><stop offset="0.991" stop-color="#ff8600"/><stop offset="1.000" stop-color="#ff8600"/></linearGradient><linearGradient id="i45" gradientUnits="userSpaceOnUse" x1="242.7" x2="467.6" y1="0" y2="0"><stop offset="0.000" stop-color="#4cffd4"/><stop offset="0.018" stop-color="#71ffd4"/><stop offset="0.044" stop-color="#8effd5"/><stop offset="0.097" stop-color="#afffd7"/><stop offset="0.186" stop-color="#d0ffd8"/><stop offset="0.363" stop-color="#f8ffcd"/><stop offset="0.407" stop-color="#fffbc5"/><stop offset="0.575" stop-color="#ffcf89"/><stop offset="0.664" stop-color="#ffb565"/><stop offset="0.912" stop-color="#ff8d2d"/><stop offset="0.965" stop-color="#ff8519"/><stop offset="0.982" stop-color="#ff830c"/><stop offset="0.991" stop-color="#ff8200"/><stop offset="1.000" stop-color="#ff8100"/></linearGradient><linearGradient id="i46" gradientUnits="userSpaceOnUse" x1="241.8" x2="471.5" y1="0" y2="0"><stop offset="0.000" stop-color="#50ffd7"/><stop offset="0.017" stop-color="#75ffd7"/><stop offset="0.043" stop-color="#91ffd8"/><stop offset="0.096" stop-color="#b3ffda"/><stop offset="0.183" stop-color="#d3ffdc"/><stop offset="0.357" stop-color="#faffd2"/><stop offset="0.400" stop-color="#fffac9"/><stop offset="0.565" stop-color="#ffce8e"/><stop offset="0.661" stop-color="#ffb266"/><stop offset="0.913" stop-color="#ff882d"/><stop offset="0.974" stop-color="#ff8014"/><stop offset="0.991" stop-color="#ff7e00"/><stop offset="1.000" stop-color="#ff7d00"/></linearGradient><linearGradient id="i47" gradientUnits="userSpaceOnUse" x1="241.0" x2="475.5" y1="0" y2="0"><stop offset="0.000" stop-color="#54ffda"/><stop offset="0.017" stop-color="#78ffda"/><stop offset="0.042" stop-color="#94ffdb"/><stop offset="0.093" stop-color="#b6ffde"/><stop offset="0.178" stop-color="#d6ffdf"/><stop offset="0.347" stop-color="#fbffd6"/><stop offset="0.390" stop-color="#fff9cd"/><stop offset="0.551" stop-color="#ffcf94"/><stop offset="0.653" stop-color="#ffaf68"/><stop offset="0.915" stop-color="#ff832c"/><stop offset="0.975" stop-color="#ff7b14"/><stop offset="0.992" stop-color="#ff7900"/><stop offset="1.000" stop-color="#ff7900"/></linearGradient><linearGradient id="i48" gradientUnits="userSpaceOnUse" x1="240.1" x2="479.5" y1="0" y2="0"><stop offset="0.000" stop-color="#57ffdc"/><stop offset="0.017" stop-color="#7cffdd"/><stop offset="0.042" stop-color="#98ffde"/><stop offset="0.092" stop-color="#b9ffe0"/><stop offset="0.175" stop-color="#d9ffe3"/><stop offset="0.342" stop-color="#fcffda"/><stop offset="0.442" stop-color="#ffeabe"/><stop offset="0.600" stop-color="#ffbc7f"/><stop offset="0.650" stop-color="#ffab68"/><stop offset="0.917" stop-color="#ff7f2c"/><stop offset="0.975" stop-color="#ff7713"/><stop offset="0.992" stop-color="#ff7500"/><stop offset="1.000" stop-color="#ff7400"/></linearGradient><linearGradient id="i49" gradientUnits="userSpaceOnUse" x1="239.2" x2="483.5" y1="0" y2="0"><stop offset="0.000" stop-color="#5bffdf"/><stop offset="0.016" stop-color="#7fffdf"/><stop offset="0.041" stop-color="#9bffe1"/><stop offset="0.089" stop-color="#bcffe3"/><stop offset="0.171" stop-color="#dbffe6"/><stop offset="0.333" stop-color="#fdffdf"/><stop offset="0.455" stop-color="#ffe4bb"/><stop offset="0.610" stop-color="#ffb47a"/><stop offset="0.650" stop-color="#ffa768"/><stop offset="0.911" stop-color="#ff7b2e"/><stop offset="0.967" stop-color="#ff7318"/><stop offset="0.984" stop-color="#ff710c"/><stop offset="0.992" stop-color="#ff7000"/><stop offset="1.000" stop-color="#ff7000"/></linearGradient><linearGradient id="i50" gradientUnits="userSpaceOnUse" x1="238.3" x2="487.5" y1="0" y2="0"><stop offset="0.000" stop-color="#5effe2"/><stop offset="0.016" stop-color="#82ffe2"/><stop offset="0.040" stop-color="#9effe3"/><stop offset="0.088" stop-color="#bfffe6"/><stop offset="0.168" stop-color="#deffe8"/><stop offset="0.328" stop-color="#feffe2"/><stop offset="0.464" stop-color="#ffdfb8"/><stop offset="0.616" stop-color="#ffae76"/><stop offset="0.648" stop-color="#ffa369"/><stop offset="0.912" stop-color="#ff772d"/><stop offset="0.968" stop-color="#ff6f18"/><stop offset="0.984" stop-color="#ff6d0c"/><stop offset="0.992" stop-color="#ff6c00"/><stop offset="1.000" stop-color="#ff6b00"/></linearGradient><linearGradient id="i51" gradientUnits="userSpaceOnUse" x1="237.4" x2="491.5" y1="0" y2="0"><stop offset="0.000" stop-color="#61ffe4"/><stop offset="0.016" stop-color="#84ffe4"/><stop offset="0.039" stop-color="#a0ffe6"/><stop offset="0.086" stop-color="#c1ffe8"/><stop offset="0.156" stop-color="#deffeb"/><stop offset="0.320" stop-color="#ffffe6"/><stop offset="0.461" stop-color="#ffddba"/><stop offset="0.609" stop-color="#ffac79"/><stop offset="0.648" stop-color="#ff9f69"/><stop offset="0.914" stop-color="#ff722d"/><stop offset="0.969" stop-color="#ff6a18"/><stop offset="0.984" stop-color="#ff680b"/><stop offset="0.992" stop-color="#ff6700"/><stop offset="1.000" stop-color="#ff6700"/></linearGradient><linearGradient id="i52" gradientUnits="userSpaceOnUse" x1="236.6" x2="495.5" y1="0" y2="0"><stop offset="0.000" stop-color="#63ffe6"/><stop offset="0.015" stop-color="#87ffe7"/><stop offset="0.038" stop-color="#a3ffe8"/><stop offset="0.085" stop-color="#c4ffeb"/><stop offset="0.154" stop-color="#e0ffed"/><stop offset="0.308" stop-color="#feffea"/><stop offset="0.438" stop-color="#ffe1c3"/><stop offset="0.585" stop-color="#ffb184"/><stop offset="0.638" stop-color="#ff9d6b"/><stop offset="0.915" stop-color="#ff6e2d"/><stop offset="0.969" stop-color="#ff6618"/><stop offset="0.985" stop-color="#ff640b"/><stop offset="0.992" stop-color="#ff6300"/><stop offset="1.000" stop-color="#ff6200"/></linearGradient><linearGradient id="i53" gradientUnits="userSpaceOnUse" x1="235.7" x2="499.5" y1="0" y2="0"><stop offset="0.000" stop-color="#66ffe8"/><stop offset="0.015" stop-color="#89ffe9"/><stop offset="0.038" stop-color="#a5ffea"/><stop offset="0.083" stop-color="#c6ffed"/><stop offset="0.152" stop-color="#e2fff0"/><stop offset="0.295" stop-color="#feffed"/><stop offset="0.417" stop-color="#ffe5cc"/><stop offset="0.561" stop-color="#ffb68f"/><stop offset="0.636" stop-color="#ff996c"/><stop offset="0.917" stop-color="#ff692c"/><stop offset="0.970" stop-color="#ff6118"/><stop offset="0.985" stop-color="#ff5f0b"/><stop offset="0.992" stop-color="#ff5e00"/><stop offset="1.000" stop-color="#ff5e00"/></linearGradient><linearGradient id="i54" gradientUnits="userSpaceOnUse" x1="234.8" x2="503.5" y1="0" y2="0"><stop offset="0.000" stop-color="#68ffeb"/><stop offset="0.015" stop-color="#8bffeb"/><stop offset="0.037" stop-color="#a7ffec"/><stop offset="0.081" stop-color="#c8ffef"/><stop offset="0.148" stop-color="#e4fff2"/><stop offset="0.267" stop-color="#fbfff1"/><stop offset="0.326" stop-color="#fff9e8"/><stop offset="0.459" stop-color="#ffd6bc"/><stop offset="0.607" stop-color="#ff9f77"/><stop offset="0.637" stop-color="#ff956b"/><stop offset="0.911" stop-color="#ff662e"/><stop offset="0.970" stop-color="#ff5d17"/><stop offset="0.985" stop-color="#ff5a0b"/><stop offset="0.993" stop-color="#ff5900"/><stop offset="1.000" stop-color="#ff5900"/></linearGradient><linearGradient id="i55" gradientUnits="userSpaceOnUse" x1="233.9" x2="507.5" y1="0" y2="0"><stop offset="0.000" stop-color="#69ffed"/><stop offset="0.015" stop-color="#8cffed"/><stop offset="0.036" stop-color="#a9ffee"/><stop offset="0.080" stop-color="#cafff1"/><stop offset="0.146" stop-color="#e6fff4"/><stop offset="0.255" stop-color="#fbfff4"/><stop offset="0.314" stop-color="#fffaec"/><stop offset="0.438" stop-color="#ffdbc5"/><stop offset="0.584" stop-color="#ffa482"/><stop offset="0.628" stop-color="#ff936d"/><stop offset="0.912" stop-color="#ff612e"/><stop offset="0.971" stop-color="#ff5817"/><stop offset="0.985" stop-color="#ff550b"/><stop offset="0.993" stop-color="#ff5500"/><stop offset="1.000" stop-color="#ff5400"/></linearGradient><linearGradient id="i56" gradientUnits="userSpaceOnUse" x1="233.0" x2="511.5" y1="0" y2="0"><stop offset="0.000" stop-color="#6affef"/><stop offset="0.014" stop-color="#8effef"/><stop offset="0.036" stop-color="#aafff0"/><stop offset="0.079" stop-color="#cbfff2"/><stop offset="0.143" stop-color="#e8fff5"/><stop offset="0.236" stop-color="#fafff7"/><stop offset="0.300" stop-color="#fffbf0"/><stop offset="0.421" stop-color="#ffdecb"/><stop offset="0.564" stop-color="#ffa88b"/><stop offset="0.621" stop-color="#ff906f"/><stop offset="0.914" stop-color="#ff5c2d"/><stop offset="0.971" stop-color="#ff5317"/><stop offset="0.986" stop-color="#ff500b"/><stop offset="0.993" stop-color="#ff5000"/><stop offset="1.000" stop-color="#ff4f00"/></linearGradient><linearGradient id="i57" gradientUnits="userSpaceOnUse" x1="232.1" x2="515.5" y1="0" y2="0"><stop offset="0.000" stop-color="#6bfff1"/><stop offset="0.014" stop-color="#8ffff1"/><stop offset="0.035" stop-color="#abfff2"/><stop offset="0.077" stop-color="#cdfff4"/><stop offset="0.141" stop-color="#eafff7"/><stop offset="0.232" stop-color="#fbfff9"/><stop offset="0.296" stop-color="#fffbf2"/><stop offset="0.415" stop-color="#ffddce"/><stop offset="0.556" stop-color="#ffa78e"/><stop offset="0.613" stop-color="#ff8e71"/><stop offset="0.915" stop-color="#ff572d"/><stop offset="0.972" stop-color="#ff4e17"/><stop offset="0.986" stop-color="#ff4b0b"/><stop offset="0.993" stop-color="#ff4a00"/><stop offset="1.000" stop-color="#ff4a00"/></linearGradient><linearGradient id="i58" gradientUnits="userSpaceOnUse" x1="231.3" x2="519.5" y1="0" y2="0"><stop offset="0.000" stop-color="#6cfff3"/><stop offset="0.014" stop-color="#8ffff3"/><stop offset="0.034" stop-color="#acfff4"/><stop offset="0.076" stop-color="#cefff6"/><stop offset="0.138" stop-color="#ebfff8"/><stop offset="0.221" stop-color="#fbfffa"/><stop offset="0.290" stop-color="#fffbf4"/><stop offset="0.400" stop-color="#ffe0d4"/><stop offset="0.538" stop-color="#ffab96"/><stop offset="0.607" stop-color="#ff8b72"/><stop offset="0.910" stop-color="#ff532e"/><stop offset="0.972" stop-color="#ff4816"/><stop offset="0.986" stop-color="#ff460b"/><stop offset="0.993" stop-color="#ff4500"/><stop offset="1.000" stop-color="#ff4500"/></linearGradient><linearGradient id="i59" gradientUnits="userSpaceOnUse" x1="230.4" x2="523.5" y1="0" y2="0"><stop offset="0.000" stop-color="#6cfff4"/><stop offset="0.014" stop-color="#90fff5"/><stop offset="0.034" stop-color="#adfff6"/><stop offset="0.075" stop-color="#cffff7"/><stop offset="0.136" stop-color="#ecfffa"/><stop offset="0.211" stop-color="#fbfffc"/><stop offset="0.279" stop-color="#fffbf6"/><stop offset="0.388" stop-color="#ffe2d8"/><stop offset="0.517" stop-color="#ffb0a0"/><stop offset="0.605" stop-color="#ff8772"/><stop offset="0.912" stop-color="#ff4e2e"/><stop offset="0.973" stop-color="#ff4216"/><stop offset="0.986" stop-color="#ff400b"/><stop offset="0.993" stop-color="#ff3f00"/><stop offset="1.000" stop-color="#ff3f00"/></linearGradient><linearGradient id="i60" gradientUnits="userSpaceOnUse" x1="229.5" x2="527.5" y1="0" y2="0"><stop offset="0.000" stop-color="#6bfff6"/><stop offset="0.013" stop-color="#90fff7"/><stop offset="0.033" stop-color="#adfff7"/><stop offset="0.073" stop-color="#cffff9"/><stop offset="0.133" stop-color="#edfffb"/><stop offset="0.207" stop-color="#fcfffd"/><stop offset="0.280" stop-color="#fffbf7"/><stop offset="0.387" stop-color="#ffe0d8"/><stop offset="0.520" stop-color="#ffab9d"/><stop offset="0.600" stop-color="#ff8574"/><stop offset="0.913" stop-color="#ff482e"/><stop offset="0.973" stop-color="#ff3c16"/><stop offset="0.987" stop-color="#ff390b"/><stop offset="0.993" stop-color="#ff3800"/><stop offset="1.000" stop-color="#ff3800"/></linearGradient><linearGradient id="i61" gradientUnits="userSpaceOnUse" x1="228.6" x2="531.5" y1="0" y2="0"><stop offset="0.000" stop-color="#6bfff8"/><stop offset="0.013" stop-color="#90fff9"/><stop offset="0.033" stop-color="#adfff9"/><stop offset="0.072" stop-color="#d0fffa"/><stop offset="0.132" stop-color="#eefffc"/><stop offset="0.197" stop-color="#fcfffe"/><stop offset="0.270" stop-color="#fffcf9"/><stop offset="0.375" stop-color="#ffe2dd"/><stop offset="0.500" stop-color="#ffb0a6"/><stop offset="0.592" stop-color="#ff8275"/><stop offset="0.914" stop-color="#ff422d"/><stop offset="0.974" stop-color="#ff3516"/><stop offset="0.987" stop-color="#ff320b"/><stop offset="0.993" stop-color="#ff3100"/><stop offset="1.000" stop-color="#ff3100"/></linearGradient><linearGradient id="i62" gradientUnits="userSpaceOnUse" x1="227.7" x2="535.5" y1="0" y2="0"><stop offset="0.000" stop-color="#6afffa"/><stop offset="0.013" stop-color="#8ffffa"/><stop offset="0.032" stop-color="#adfffb"/><stop offset="0.071" stop-color="#d0fffc"/><stop offset="0.130" stop-color="#effffd"/><stop offset="0.195" stop-color="#fdfffe"/><stop offset="0.273" stop-color="#fffbf9"/><stop offset="0.377" stop-color="#ffe0dc"/><stop offset="0.506" stop-color="#ffa8a2"/><stop offset="0.584" stop-color="#ff8077"/><stop offset="0.916" stop-color="#ff3c2d"/><stop offset="0.974" stop-color="#ff2e16"/><stop offset="0.987" stop-color="#ff2a0b"/><stop offset="0.994" stop-color="#ff2900"/><stop offset="1.000" stop-color="#ff2900"/></linearGradient><linearGradient id="i63" gradientUnits="userSpaceOnUse" x1="226.9" x2="539.5" y1="0" y2="0"><stop offset="0.000" stop-color="#68fffc"/><stop offset="0.013" stop-color="#8efffc"/><stop offset="0.032" stop-color="#acfffd"/><stop offset="0.070" stop-color="#d0fffd"/><stop offset="0.127" stop-color="#effffe"/><stop offset="0.191" stop-color="#feffff"/><stop offset="0.274" stop-color="#fffaf9"/><stop offset="0.376" stop-color="#ffdedc"/><stop offset="0.503" stop-color="#ffa6a2"/><stop offset="0.580" stop-color="#ff7d78"/><stop offset="0.917" stop-color="#ff352d"/><stop offset="0.975" stop-color="#ff2416"/><stop offset="0.987" stop-color="#ff1f0a"/><stop offset="0.994" stop-color="#ff1e00"/><stop offset="1.000" stop-color="#ff1e00"/></linearGradient><linearGradient id="i64" gradientUnits="userSpaceOnUse" x1="226.0" x2="541.7" y1="0" y2="0"><stop offset="0.000" stop-color="#67fffe"/><stop offset="0.013" stop-color="#8dfffe"/><stop offset="0.032" stop-color="#acfffe"/><stop offset="0.070" stop-color="#d0fffe"/><stop offset="0.120" stop-color="#ecffff"/><stop offset="0.184" stop-color="#fdffff"/><stop offset="0.266" stop-color="#fffbfa"/><stop offset="0.367" stop-color="#ffdfdf"/><stop offset="0.494" stop-color="#ffa7a7"/><stop offset="0.576" stop-color="#ff7b7a"/><stop offset="0.918" stop-color="#ff2f2e"/><stop offset="0.981" stop-color="#ff1615"/><stop offset="0.994" stop-color="#ff0c0a"/><stop offset="1.000" stop-color="#ff0800"/></linearGradient><linearGradient id="i65" gradientUnits="userSpaceOnUse" x1="225.1" x2="539.1" y1="0" y2="0"><stop offset="0.000" stop-color="#65feff"/><stop offset="0.013" stop-color="#8bfeff"/><stop offset="0.032" stop-color="#aafeff"/><stop offset="0.070" stop-color="#cffeff"/><stop offset="0.121" stop-color="#ecfeff"/><stop offset="0.185" stop-color="#fdffff"/><stop offset="0.268" stop-color="#fffafb"/><stop offset="0.369" stop-color="#ffdfe0"/><stop offset="0.490" stop-color="#ffaaac"/><stop offset="0.586" stop-color="#ff777a"/><stop offset="0.911" stop-color="#ff2e35"/><stop offset="0.968" stop-color="#ff1824"/><stop offset="0.981" stop-color="#ff0f1f"/><stop offset="0.994" stop-color="#ff001c"/><stop offset="1.000" stop-color="#ff001c"/></linearGradient><linearGradient id="i66" gradientUnits="userSpaceOnUse" x1="224.2" x2="533.3" y1="0" y2="0"><stop offset="0.000" stop-color="#62fbff"/><stop offset="0.013" stop-color="#89fcff"/><stop offset="0.032" stop-color="#a8fcff"/><stop offset="0.071" stop-color="#cdfcff"/><stop offset="0.123" stop-color="#eafdff"/><stop offset="0.187" stop-color="#fcfeff"/><stop offset="0.271" stop-color="#fffafb"/><stop offset="0.368" stop-color="#ffe1e4"/><stop offset="0.490" stop-color="#ffadb2"/><stop offset="0.594" stop-color="#ff757d"/><stop offset="0.910" stop-color="#ff2e3c"/><stop offset="0.968" stop-color="#ff182e"/><stop offset="0.981" stop-color="#ff0f2a"/><stop offset="0.994" stop-color="#ff0028"/><stop offset="1.000" stop-color="#ff0028"/></linearGradient><linearGradient id="i67" gradientUnits="userSpaceOnUse" x1="223.3" x2="527.5" y1="0" y2="0"><stop offset="0.000" stop-color="#60f9ff"/><stop offset="0.013" stop-color="#87f9ff"/><stop offset="0.033" stop-color="#a6faff"/><stop offset="0.072" stop-color="#cbfbff"/><stop offset="0.124" stop-color="#e9fcff"/><stop offset="0.190" stop-color="#fbfdff"/><stop offset="0.275" stop-color="#fffafc"/><stop offset="0.373" stop-color="#ffe1e5"/><stop offset="0.497" stop-color="#ffadb5"/><stop offset="0.608" stop-color="#ff727e"/><stop offset="0.908" stop-color="#ff2e42"/><stop offset="0.967" stop-color="#ff1835"/><stop offset="0.980" stop-color="#ff0f32"/><stop offset="0.993" stop-color="#ff0030"/><stop offset="1.000" stop-color="#ff0030"/></linearGradient><linearGradient id="i68" gradientUnits="userSpaceOnUse" x1="222.4" x2="521.8" y1="0" y2="0"><stop offset="0.000" stop-color="#5df7ff"/><stop offset="0.013" stop-color="#84f7ff"/><stop offset="0.033" stop-color="#a4f8ff"/><stop offset="0.073" stop-color="#c9f9ff"/><stop offset="0.127" stop-color="#e7faff"/><stop offset="0.193" stop-color="#fafdff"/><stop offset="0.273" stop-color="#fffafc"/><stop offset="0.373" stop-color="#ffe2e8"/><stop offset="0.500" stop-color="#ffaeb9"/><stop offset="0.620" stop-color="#ff6f7f"/><stop offset="0.913" stop-color="#ff2d47"/><stop offset="0.973" stop-color="#ff153b"/><stop offset="0.993" stop-color="#ff0037"/><stop offset="1.000" stop-color="#ff0037"/></linearGradient><linearGradient id="i69" gradientUnits="userSpaceOnUse" x1="221.6" x2="516.0" y1="0" y2="0"><stop offset="0.000" stop-color="#59f5ff"/><stop offset="0.014" stop-color="#81f5ff"/><stop offset="0.034" stop-color="#a1f6ff"/><stop offset="0.074" stop-color="#c7f7ff"/><stop offset="0.128" stop-color="#e5f9ff"/><stop offset="0.196" stop-color="#f9fbff"/><stop offset="0.277" stop-color="#fff9fc"/><stop offset="0.378" stop-color="#ffe1e9"/><stop offset="0.507" stop-color="#ffaebb"/><stop offset="0.635" stop-color="#ff6c80"/><stop offset="0.912" stop-color="#ff2d4c"/><stop offset="0.973" stop-color="#ff1541"/><stop offset="0.993" stop-color="#ff003e"/><stop offset="1.000" stop-color="#ff003e"/></linearGradient><linearGradient id="i70" gradientUnits="userSpaceOnUse" x1="220.7" x2="510.2" y1="0" y2="0"><stop offset="0.000" stop-color="#56f2ff"/><stop offset="0.014" stop-color="#7ef3ff"/><stop offset="0.034" stop-color="#9ef3ff"/><stop offset="0.076" stop-color="#c5f5ff"/><stop offset="0.131" stop-color="#e4f7ff"/><stop offset="0.207" stop-color="#f9faff"/><stop offset="0.283" stop-color="#fff8fc"/><stop offset="0.386" stop-color="#ffe0e9"/><stop offset="0.510" stop-color="#ffafbe"/><stop offset="0.641" stop-color="#ff6b83"/><stop offset="0.910" stop-color="#ff2e52"/><stop offset="0.972" stop-color="#ff1547"/><stop offset="0.993" stop-color="#ff0044"/><stop offset="1.000" stop-color="#ff0044"/></linearGradient><linearGradient id="i71" gradientUnits="userSpaceOnUse" x1="219.8" x2="504.5" y1="0" y2="0"><stop offset="0.000" stop-color="#52f0ff"/><stop offset="0.014" stop-color="#7bf0ff"/><stop offset="0.035" stop-color="#9bf1ff"/><stop offset="0.077" stop-color="#c2f3ff"/><stop offset="0.140" stop-color="#e4f6ff"/><stop offset="0.217" stop-color="#f9f9ff"/><stop offset="0.294" stop-color="#fff6fc"/><stop offset="0.399" stop-color="#ffdde8"/><stop offset="0.524" stop-color="#ffabbe"/><stop offset="0.657" stop-color="#ff6784"/><stop offset="0.916" stop-color="#ff2c56"/><stop offset="0.972" stop-color="#ff154c"/><stop offset="0.993" stop-color="#ff0049"/><stop offset="1.000" stop-color="#ff0049"/></linearGradient><linearGradient id="i72" gradientUnits="userSpaceOnUse" x1="218.9" x2="498.7" y1="0" y2="0"><stop offset="0.000" stop-color="#4eedff"/><stop offset="0.014" stop-color="#77edff"/><stop offset="0.036" stop-color="#98eeff"/><stop offset="0.079" stop-color="#bff1ff"/><stop offset="0.136" stop-color="#dff3ff"/><stop offset="0.214" stop-color="#f7f7ff"/><stop offset="0.293" stop-color="#fff5fc"/><stop offset="0.400" stop-color="#ffdde9"/><stop offset="0.529" stop-color="#ffabc1"/><stop offset="0.671" stop-color="#ff6485"/><stop offset="0.914" stop-color="#ff2c5b"/><stop offset="0.971" stop-color="#ff1551"/><stop offset="0.993" stop-color="#ff004f"/><stop offset="1.000" stop-color="#ff004e"/></linearGradient><linearGradient id="i73" gradientUnits="userSpaceOnUse" x1="218.0" x2="493.0" y1="0" y2="0"><stop offset="0.000" stop-color="#4aeaff"/><stop offset="0.014" stop-color="#74ebff"/><stop offset="0.036" stop-color="#95ecff"/><stop offset="0.080" stop-color="#bceeff"/><stop offset="0.145" stop-color="#e0f2ff"/><stop offset="0.225" stop-color="#f7f5ff"/><stop offset="0.304" stop-color="#fff2fc"/><stop offset="0.413" stop-color="#ffd9e8"/><stop offset="0.543" stop-color="#ffa7c0"/><stop offset="0.681" stop-color="#ff6287"/><stop offset="0.913" stop-color="#ff2d60"/><stop offset="0.971" stop-color="#ff1556"/><stop offset="0.993" stop-color="#ff0054"/><stop offset="1.000" stop-color="#ff0053"/></linearGradient><linearGradient id="i74" gradientUnits="userSpaceOnUse" x1="217.2" x2="487.2" y1="0" y2="0"><stop offset="0.000" stop-color="#45e8ff"/><stop offset="0.015" stop-color="#70e8ff"/><stop offset="0.037" stop-color="#91e9ff"/><stop offset="0.081" stop-color="#b9ecff"/><stop offset="0.147" stop-color="#ddefff"/><stop offset="0.235" stop-color="#f7f3ff"/><stop offset="0.309" stop-color="#fff0fc"/><stop offset="0.426" stop-color="#ffd5e7"/><stop offset="0.559" stop-color="#ffa3bf"/><stop offset="0.691" stop-color="#ff6089"/><stop offset="0.919" stop-color="#ff2b63"/><stop offset="0.971" stop-color="#ff155b"/><stop offset="0.978" stop-color="#ff105a"/><stop offset="0.985" stop-color="#ff0559"/><stop offset="0.993" stop-color="#ff0058"/><stop offset="1.000" stop-color="#ff0058"/></linearGradient><linearGradient id="i75" gradientUnits="userSpaceOnUse" x1="216.3" x2="481.4" y1="0" y2="0"><stop offset="0.000" stop-color="#41e5ff"/><stop offset="0.015" stop-color="#6ce5ff"/><stop offset="0.038" stop-color="#8ee6ff"/><stop offset="0.083" stop-color="#b6e9ff"/><stop offset="0.150" stop-color="#dbedff"/><stop offset="0.241" stop-color="#f6f1ff"/><stop offset="0.316" stop-color="#ffeefc"/><stop offset="0.436" stop-color="#ffd3e7"/><stop offset="0.571" stop-color="#ff9fbf"/><stop offset="0.707" stop-color="#ff5d8a"/><stop offset="0.917" stop-color="#ff2b68"/><stop offset="0.970" stop-color="#ff1660"/><stop offset="0.977" stop-color="#ff105f"/><stop offset="0.985" stop-color="#ff055e"/><stop offset="0.992" stop-color="#ff005d"/><stop offset="1.000" stop-color="#ff005d"/></linearGradient><linearGradient id="i76" gradientUnits="userSpaceOnUse" x1="215.4" x2="475.7" y1="0" y2="0"><stop offset="0.000" stop-color="#3ce2ff"/><stop offset="0.015" stop-color="#67e2ff"/><stop offset="0.038" stop-color="#8ae3ff"/><stop offset="0.076" stop-color="#ade6ff"/><stop offset="0.137" stop-color="#d2e9ff"/><stop offset="0.221" stop-color="#efedff"/><stop offset="0.321" stop-color="#ffecfd"/><stop offset="0.443" stop-color="#ffd1e7"/><stop offset="0.580" stop-color="#ff9ec0"/><stop offset="0.718" stop-color="#ff5a8c"/><stop offset="0.924" stop-color="#ff296b"/><stop offset="0.969" stop-color="#ff1665"/><stop offset="0.977" stop-color="#ff1063"/><stop offset="0.985" stop-color="#ff0562"/><stop offset="0.992" stop-color="#ff0062"/><stop offset="1.000" stop-color="#ff0061"/></linearGradient><linearGradient id="i77" gradientUnits="userSpaceOnUse" x1="214.5" x2="469.9" y1="0" y2="0"><stop offset="0.000" stop-color="#37deff"/><stop offset="0.016" stop-color="#63dfff"/><stop offset="0.039" stop-color="#86e0ff"/><stop offset="0.078" stop-color="#aae3ff"/><stop offset="0.141" stop-color="#cfe6ff"/><stop offset="0.227" stop-color="#edeaff"/><stop offset="0.328" stop-color="#ffe9fd"/><stop offset="0.461" stop-color="#ffcbe5"/><stop offset="0.594" stop-color="#ff9ac0"/><stop offset="0.734" stop-color="#ff578e"/><stop offset="0.922" stop-color="#ff2a70"/><stop offset="0.969" stop-color="#ff1669"/><stop offset="0.977" stop-color="#ff1068"/><stop offset="0.984" stop-color="#ff0667"/><stop offset="0.992" stop-color="#ff0066"/><stop offset="1.000" stop-color="#ff0066"/></linearGradient><linearGradient id="i78" gradientUnits="userSpaceOnUse" x1="213.6" x2="464.1" y1="0" y2="0"><stop offset="0.000" stop-color="#32dbff"/><stop offset="0.016" stop-color="#5fdcff"/><stop offset="0.040" stop-color="#82ddff"/><stop offset="0.079" stop-color="#a6dfff"/><stop offset="0.143" stop-color="#cce3ff"/><stop offset="0.230" stop-color="#ebe7ff"/><stop offset="0.333" stop-color="#ffe7fe"/><stop offset="0.468" stop-color="#ffc9e5"/><stop offset="0.603" stop-color="#ff98c1"/><stop offset="0.746" stop-color="#ff5490"/><stop offset="0.929" stop-color="#ff2773"/><stop offset="0.968" stop-color="#ff166e"/><stop offset="0.976" stop-color="#ff106c"/><stop offset="0.984" stop-color="#ff056b"/><stop offset="0.992" stop-color="#ff006b"/><stop offset="1.000" stop-color="#ff006a"/></linearGradient><linearGradient id="i79" gradientUnits="userSpaceOnUse" x1="212.7" x2="458.4" y1="0" y2="0"><stop offset="0.000" stop-color="#2dd8ff"/><stop offset="0.016" stop-color="#5ad8ff"/><stop offset="0.041" stop-color="#7edaff"/><stop offset="0.081" stop-color="#a3dcff"/><stop offset="0.146" stop-color="#c9e0ff"/><stop offset="0.236" stop-color="#e9e4ff"/><stop offset="0.350" stop-color="#ffe2fd"/><stop offset="0.488" stop-color="#ffc3e3"/><stop offset="0.626" stop-color="#ff90be"/><stop offset="0.756" stop-color="#ff5292"/><stop offset="0.927" stop-color="#ff2878"/><stop offset="0.967" stop-color="#ff1772"/><stop offset="0.976" stop-color="#ff1171"/><stop offset="0.984" stop-color="#ff0670"/><stop offset="0.992" stop-color="#ff006f"/><stop offset="1.000" stop-color="#ff006f"/></linearGradient><linearGradient id="i80" gradientUnits="userSpaceOnUse" x1="211.9" x2="452.6" y1="0" y2="0"><stop offset="0.000" stop-color="#27d4ff"/><stop offset="0.017" stop-color="#55d4ff"/><stop offset="0.041" stop-color="#7ad6ff"/><stop offset="0.083" stop-color="#9fd9ff"/><stop offset="0.149" stop-color="#c6dcff"/><stop offset="0.240" stop-color="#e7e1ff"/><stop offset="0.355" stop-color="#ffe0fe"/><stop offset="0.504" stop-color="#ffbde2"/><stop offset="0.645" stop-color="#ff8abd"/><stop offset="0.769" stop-color="#ff4f94"/><stop offset="0.926" stop-color="#ff287c"/><stop offset="0.967" stop-color="#ff1776"/><stop offset="0.975" stop-color="#ff1175"/><stop offset="0.983" stop-color="#ff0674"/><stop offset="0.992" stop-color="#ff0074"/><stop offset="1.000" stop-color="#ff0073"/></linearGradient><linearGradient id="i81" gradientUnits="userSpaceOnUse" x1="211.0" x2="446.9" y1="0" y2="0"><stop offset="0.000" stop-color="#22d0ff"/><stop offset="0.017" stop-color="#51d1ff"/><stop offset="0.034" stop-color="#6bd2ff"/><stop offset="0.076" stop-color="#95d4ff"/><stop offset="0.144" stop-color="#bfd8ff"/><stop offset="0.237" stop-color="#e3ddff"/><stop offset="0.364" stop-color="#ffdcfe"/><stop offset="0.517" stop-color="#ffb9e1"/><stop offset="0.661" stop-color="#ff85bc"/><stop offset="0.780" stop-color="#ff4d97"/><stop offset="0.932" stop-color="#ff2680"/><stop offset="0.975" stop-color="#ff117a"/><stop offset="0.983" stop-color="#ff0679"/><stop offset="0.992" stop-color="#ff0078"/><stop offset="1.000" stop-color="#ff0077"/></linearGradient><linearGradient id="i82" gradientUnits="userSpaceOnUse" x1="210.1" x2="441.1" y1="0" y2="0"><stop offset="0.000" stop-color="#1ccdff"/><stop offset="0.017" stop-color="#4ccdff"/><stop offset="0.034" stop-color="#67ceff"/><stop offset="0.069" stop-color="#8ad0ff"/><stop offset="0.129" stop-color="#b3d4ff"/><stop offset="0.216" stop-color="#d8d8ff"/><stop offset="0.353" stop-color="#fbd9ff"/><stop offset="0.422" stop-color="#ffcff6"/><stop offset="0.569" stop-color="#ffa8d8"/><stop offset="0.716" stop-color="#ff6fb1"/><stop offset="0.793" stop-color="#ff4a99"/><stop offset="0.931" stop-color="#ff2684"/><stop offset="0.974" stop-color="#ff117e"/><stop offset="0.983" stop-color="#ff067d"/><stop offset="0.991" stop-color="#ff007c"/><stop offset="1.000" stop-color="#ff007c"/></linearGradient><linearGradient id="i83" gradientUnits="userSpaceOnUse" x1="209.2" x2="435.3" y1="0" y2="0"><stop offset="0.000" stop-color="#17c9ff"/><stop offset="0.018" stop-color="#47c9ff"/><stop offset="0.035" stop-color="#62caff"/><stop offset="0.070" stop-color="#86ccff"/><stop offset="0.132" stop-color="#afd0ff"/><stop offset="0.219" stop-color="#d5d4ff"/><stop offset="0.360" stop-color="#fad5ff"/><stop offset="0.404" stop-color="#ffd1fb"/><stop offset="0.561" stop-color="#ffabdd"/><stop offset="0.711" stop-color="#ff73b7"/><stop offset="0.807" stop-color="#ff479b"/><stop offset="0.939" stop-color="#ff2387"/><stop offset="0.974" stop-color="#ff1183"/><stop offset="0.982" stop-color="#ff0581"/><stop offset="0.991" stop-color="#ff0081"/><stop offset="1.000" stop-color="#ff0080"/></linearGradient><linearGradient id="i84" gradientUnits="userSpaceOnUse" x1="208.3" x2="429.6" y1="0" y2="0"><stop offset="0.000" stop-color="#11c5ff"/><stop offset="0.018" stop-color="#42c5ff"/><stop offset="0.036" stop-color="#5ec6ff"/><stop offset="0.072" stop-color="#82c8ff"/><stop offset="0.135" stop-color="#acccff"/><stop offset="0.225" stop-color="#d3d0ff"/><stop offset="0.369" stop-color="#f9d0ff"/><stop offset="0.414" stop-color="#ffccfc"/><stop offset="0.577" stop-color="#ffa5dc"/><stop offset="0.721" stop-color="#ff71b9"/><stop offset="0.820" stop-color="#ff449d"/><stop offset="0.937" stop-color="#ff248c"/><stop offset="0.973" stop-color="#ff1287"/><stop offset="0.982" stop-color="#ff0686"/><stop offset="0.991" stop-color="#ff0085"/><stop offset="1.000" stop-color="#ff0084"/></linearGradient><linearGradient id="i85" gradientUnits="userSpaceOnUse" x1="207.4" x2="423.8" y1="0" y2="0"><stop offset="0.000" stop-color="#0bc0ff"/><stop offset="0.018" stop-color="#3cc0ff"/><stop offset="0.037" stop-color="#59c2ff"/><stop offset="0.073" stop-color="#7dc4ff"/><stop offset="0.138" stop-color="#a8c7ff"/><stop offset="0.229" stop-color="#d0cbff"/><stop offset="0.376" stop-color="#f7ccff"/><stop offset="0.422" stop-color="#ffc8fd"/><stop offset="0.596" stop-color="#ff9fdb"/><stop offset="0.743" stop-color="#ff69b8"/><stop offset="0.835" stop-color="#ff409f"/><stop offset="0.945" stop-color="#ff218f"/><stop offset="0.972" stop-color="#ff128b"/><stop offset="0.982" stop-color="#ff068a"/><stop offset="0.991" stop-color="#ff0089"/><stop offset="1.000" stop-color="#ff0089"/></linearGradient><linearGradient id="i86" gradientUnits="userSpaceOnUse" x1="206.6" x2="418.0" y1="0" y2="0"><stop offset="0.000" stop-color="#05bcff"/><stop offset="0.019" stop-color="#37bcff"/><stop offset="0.038" stop-color="#54bdff"/><stop offset="0.075" stop-color="#79bfff"/><stop offset="0.142" stop-color="#a5c3ff"/><stop offset="0.236" stop-color="#cec7ff"/><stop offset="0.387" stop-color="#f6c7ff"/><stop offset="0.443" stop-color="#ffc2fc"/><stop offset="0.613" stop-color="#ff99da"/><stop offset="0.764" stop-color="#ff62b7"/><stop offset="0.849" stop-color="#ff3da1"/><stop offset="0.953" stop-color="#ff1d92"/><stop offset="0.972" stop-color="#ff1290"/><stop offset="0.981" stop-color="#ff068f"/><stop offset="0.991" stop-color="#ff008e"/><stop offset="1.000" stop-color="#ff008d"/></linearGradient><linearGradient id="i87" gradientUnits="userSpaceOnUse" x1="205.7" x2="412.3" y1="0" y2="0"><stop offset="0.000" stop-color="#00b8ff"/><stop offset="0.019" stop-color="#32b7ff"/><stop offset="0.038" stop-color="#4fb8ff"/><stop offset="0.077" stop-color="#75bbff"/><stop offset="0.144" stop-color="#a1beff"/><stop offset="0.240" stop-color="#cbc2ff"/><stop offset="0.394" stop-color="#f5c2ff"/><stop offset="0.452" stop-color="#ffbdfd"/><stop offset="0.635" stop-color="#ff91d9"/><stop offset="0.779" stop-color="#ff5db8"/><stop offset="0.856" stop-color="#ff3ba5"/><stop offset="0.952" stop-color="#ff1d97"/><stop offset="0.971" stop-color="#ff1294"/><stop offset="0.981" stop-color="#ff0693"/><stop offset="0.990" stop-color="#ff0092"/><stop offset="1.000" stop-color="#ff0092"/></linearGradient><linearGradient id="i88" gradientUnits="userSpaceOnUse" x1="204.8" x2="406.5" y1="0" y2="0"><stop offset="0.000" stop-color="#00b5ff"/><stop offset="0.020" stop-color="#2db3ff"/><stop offset="0.040" stop-color="#4ab4ff"/><stop offset="0.079" stop-color="#71b6ff"/><stop offset="0.149" stop-color="#9db9ff"/><stop offset="0.248" stop-color="#c8bdff"/><stop offset="0.406" stop-color="#f4bcff"/><stop offset="0.465" stop-color="#ffb8fd"/><stop offset="0.653" stop-color="#ff8bd8"/><stop offset="0.802" stop-color="#ff55b7"/><stop offset="0.871" stop-color="#ff37a7"/><stop offset="0.950" stop-color="#ff1e9c"/><stop offset="0.970" stop-color="#ff1299"/><stop offset="0.980" stop-color="#ff0698"/><stop offset="0.990" stop-color="#ff0097"/><stop offset="1.000" stop-color="#ff0096"/></linearGradient><linearGradient id="i89" gradientUnits="userSpaceOnUse" x1="203.9" x2="400.7" y1="0" y2="0"><stop offset="0.000" stop-color="#00b2ff"/><stop offset="0.020" stop-color="#2db0ff"/><stop offset="0.061" stop-color="#5ab0ff"/><stop offset="0.121" stop-color="#88b3ff"/><stop offset="0.212" stop-color="#b5b6ff"/><stop offset="0.343" stop-color="#e0b8ff"/><stop offset="0.485" stop-color="#ffb1fd"/><stop offset="0.667" stop-color="#ff86d9"/><stop offset="0.808" stop-color="#ff54bb"/><stop offset="0.879" stop-color="#ff35aa"/><stop offset="0.960" stop-color="#ff199f"/><stop offset="0.970" stop-color="#ff129e"/><stop offset="0.980" stop-color="#ff069c"/><stop offset="0.990" stop-color="#ff009b"/><stop offset="1.000" stop-color="#ff009b"/></linearGradient><linearGradient id="i90" gradientUnits="userSpaceOnUse" x1="203.0" x2="395.0" y1="0" y2="0"><stop offset="0.000" stop-color="#00afff"/><stop offset="0.021" stop-color="#2dadff"/><stop offset="0.052" stop-color="#4eabff"/><stop offset="0.125" stop-color="#84aeff"/><stop offset="0.219" stop-color="#b3b1ff"/><stop offset="0.354" stop-color="#dfb3ff"/><stop offset="0.500" stop-color="#ffabfd"/><stop offset="0.688" stop-color="#ff7ed9"/><stop offset="0.833" stop-color="#ff4aba"/><stop offset="0.896" stop-color="#ff30ad"/><stop offset="0.958" stop-color="#ff19a4"/><stop offset="0.969" stop-color="#ff13a2"/><stop offset="0.979" stop-color="#ff06a1"/><stop offset="0.990" stop-color="#ff00a0"/><stop offset="1.000" stop-color="#ff009f"/></linearGradient><linearGradient id="i91" gradientUnits="userSpaceOnUse" x1="202.2" x2="389.2" y1="0" y2="0"><stop offset="0.000" stop-color="#00acff"/><stop offset="0.021" stop-color="#2caaff"/><stop offset="0.053" stop-color="#4da8ff"/><stop offset="0.149" stop-color="#8ca9ff"/><stop offset="0.255" stop-color="#bbacff"/><stop offset="0.415" stop-color="#e9acff"/><stop offset="0.521" stop-color="#ffa4fd"/><stop offset="0.713" stop-color="#ff76d7"/><stop offset="0.851" stop-color="#ff44bb"/><stop offset="0.915" stop-color="#ff2aaf"/><stop offset="0.968" stop-color="#ff13a7"/><stop offset="0.979" stop-color="#ff06a6"/><stop offset="0.989" stop-color="#ff00a5"/><stop offset="1.000" stop-color="#ff00a4"/></linearGradient><linearGradient id="i92" gradientUnits="userSpaceOnUse" x1="201.3" x2="383.5" y1="0" y2="0"><stop offset="0.000" stop-color="#00a9ff"/><stop offset="0.022" stop-color="#2ca7ff"/><stop offset="0.054" stop-color="#4da5ff"/><stop offset="0.163" stop-color="#8da4ff"/><stop offset="0.272" stop-color="#bba7ff"/><stop offset="0.435" stop-color="#eaa5ff"/><stop offset="0.533" stop-color="#ff9efe"/><stop offset="0.728" stop-color="#ff6fd8"/><stop offset="0.859" stop-color="#ff41be"/><stop offset="0.957" stop-color="#ff1aae"/><stop offset="0.967" stop-color="#ff13ac"/><stop offset="0.978" stop-color="#ff06ab"/><stop offset="0.989" stop-color="#ff00aa"/><stop offset="1.000" stop-color="#ff00a9"/></linearGradient><linearGradient id="i93" gradientUnits="userSpaceOnUse" x1="200.4" x2="377.7" y1="0" y2="0"><stop offset="0.000" stop-color="#00a6ff"/><stop offset="0.022" stop-color="#2ca4ff"/><stop offset="0.056" stop-color="#4da2ff"/><stop offset="0.124" stop-color="#749fff"/><stop offset="0.247" stop-color="#ada0ff"/><stop offset="0.393" stop-color="#daa0ff"/><stop offset="0.551" stop-color="#ff97ff"/><stop offset="0.753" stop-color="#ff66d8"/><stop offset="0.876" stop-color="#ff3ac0"/><stop offset="0.966" stop-color="#ff13b1"/><stop offset="0.978" stop-color="#ff06b0"/><stop offset="0.989" stop-color="#ff00af"/><stop offset="1.000" stop-color="#ff00ad"/></linearGradient><linearGradient id="i94" gradientUnits="userSpaceOnUse" x1="199.5" x2="371.9" y1="0" y2="0"><stop offset="0.000" stop-color="#00a4ff"/><stop offset="0.023" stop-color="#2ca1ff"/><stop offset="0.057" stop-color="#4c9fff"/><stop offset="0.126" stop-color="#739cff"/><stop offset="0.253" stop-color="#a99aff"/><stop offset="0.402" stop-color="#d89aff"/><stop offset="0.575" stop-color="#ff8ffe"/><stop offset="0.770" stop-color="#ff60d9"/><stop offset="0.897" stop-color="#ff32c1"/><stop offset="0.966" stop-color="#ff13b6"/><stop offset="0.977" stop-color="#ff06b5"/><stop offset="0.989" stop-color="#ff00b4"/><stop offset="1.000" stop-color="#ff00b2"/></linearGradient><linearGradient id="i95" gradientUnits="userSpaceOnUse" x1="198.6" x2="366.2" y1="0" y2="0"><stop offset="0.000" stop-color="#00a1ff"/><stop offset="0.024" stop-color="#2c9eff"/><stop offset="0.060" stop-color="#4c9cff"/><stop offset="0.131" stop-color="#7398ff"/><stop offset="0.274" stop-color="#aa94ff"/><stop offset="0.440" stop-color="#dc92ff"/><stop offset="0.595" stop-color="#ff87ff"/><stop offset="0.786" stop-color="#ff59da"/><stop offset="0.940" stop-color="#ff20bf"/><stop offset="0.964" stop-color="#ff14bc"/><stop offset="0.976" stop-color="#ff06ba"/><stop offset="0.988" stop-color="#ff00b9"/><stop offset="1.000" stop-color="#ff00b7"/></linearGradient><linearGradient id="i96" gradientUnits="userSpaceOnUse" x1="197.7" x2="360.4" y1="0" y2="0"><stop offset="0.000" stop-color="#009eff"/><stop offset="0.024" stop-color="#2b9bff"/><stop offset="0.061" stop-color="#4b99ff"/><stop offset="0.134" stop-color="#7295ff"/><stop offset="0.317" stop-color="#b38dff"/><stop offset="0.512" stop-color="#e888ff"/><stop offset="0.622" stop-color="#ff7efe"/><stop offset="0.817" stop-color="#ff4dd9"/><stop offset="0.951" stop-color="#ff1bc3"/><stop offset="0.963" stop-color="#ff14c1"/><stop offset="0.976" stop-color="#ff06bf"/><stop offset="0.988" stop-color="#ff00be"/><stop offset="1.000" stop-color="#ff00bd"/></linearGradient><linearGradient id="i97" gradientUnits="userSpaceOnUse" x1="196.9" x2="354.6" y1="0" y2="0"><stop offset="0.000" stop-color="#009bff"/><stop offset="0.025" stop-color="#2b98ff"/><stop offset="0.063" stop-color="#4b96ff"/><stop offset="0.139" stop-color="#7292ff"/><stop offset="0.304" stop-color="#a988ff"/><stop offset="0.519" stop-color="#e480ff"/><stop offset="0.646" stop-color="#ff75ff"/><stop offset="0.835" stop-color="#ff45db"/><stop offset="0.949" stop-color="#ff1cc8"/><stop offset="0.962" stop-color="#ff14c7"/><stop offset="0.975" stop-color="#ff06c5"/><stop offset="0.987" stop-color="#ff00c3"/><stop offset="1.000" stop-color="#ff00c2"/></linearGradient><linearGradient id="i98" gradientUnits="userSpaceOnUse" x1="196.0" x2="348.9" y1="0" y2="0"><stop offset="0.000" stop-color="#0098ff"/><stop offset="0.026" stop-color="#2b95ff"/><stop offset="0.065" stop-color="#4b93ff"/><stop offset="0.143" stop-color="#718fff"/><stop offset="0.312" stop-color="#a884ff"/><stop offset="0.584" stop-color="#ec75ff"/><stop offset="0.675" stop-color="#ff6afe"/><stop offset="0.844" stop-color="#ff3fdf"/><stop offset="0.948" stop-color="#ff1cce"/><stop offset="0.961" stop-color="#ff15cc"/><stop offset="0.974" stop-color="#ff06ca"/><stop offset="0.987" stop-color="#ff00c9"/><stop offset="1.000" stop-color="#ff00c7"/></linearGradient><linearGradient id="i99" gradientUnits="userSpaceOnUse" x1="195.1" x2="343.1" y1="0" y2="0"><stop offset="0.000" stop-color="#0095ff"/><stop offset="0.027" stop-color="#2a92ff"/><stop offset="0.067" stop-color="#4a90ff"/><stop offset="0.147" stop-color="#708cff"/><stop offset="0.320" stop-color="#a681ff"/><stop offset="0.680" stop-color="#fb63ff"/><stop offset="0.733" stop-color="#ff59f8"/><stop offset="0.933" stop-color="#ff22d6"/><stop offset="0.960" stop-color="#ff15d2"/><stop offset="0.973" stop-color="#ff06d0"/><stop offset="0.987" stop-color="#ff00cf"/><stop offset="1.000" stop-color="#ff00cd"/></linearGradient><linearGradient id="i100" gradientUnits="userSpaceOnUse" x1="194.2" x2="337.4" y1="0" y2="0"><stop offset="0.000" stop-color="#0092ff"/><stop offset="0.028" stop-color="#2b8fff"/><stop offset="0.069" stop-color="#4a8dff"/><stop offset="0.153" stop-color="#7089ff"/><stop offset="0.333" stop-color="#a67dff"/><stop offset="0.681" stop-color="#f55dff"/><stop offset="0.750" stop-color="#ff52fb"/><stop offset="0.917" stop-color="#ff28df"/><stop offset="0.958" stop-color="#ff15d8"/><stop offset="0.972" stop-color="#ff06d6"/><stop offset="0.986" stop-color="#ff00d5"/><stop offset="1.000" stop-color="#ff00d3"/></linearGradient><linearGradient id="i101" gradientUnits="userSpaceOnUse" x1="193.3" x2="331.6" y1="0" y2="0"><stop offset="0.000" stop-color="#008fff"/><stop offset="0.029" stop-color="#2a8cff"/><stop offset="0.071" stop-color="#4a8aff"/><stop offset="0.157" stop-color="#6f85ff"/><stop offset="0.343" stop-color="#a57aff"/><stop offset="0.686" stop-color="#ef59ff"/><stop offset="0.771" stop-color="#ff4dfe"/><stop offset="0.914" stop-color="#ff28e5"/><stop offset="0.957" stop-color="#ff15df"/><stop offset="0.971" stop-color="#ff06dd"/><stop offset="0.986" stop-color="#ff00db"/><stop offset="1.000" stop-color="#ff00d9"/></linearGradient><linearGradient id="i102" gradientUnits="userSpaceOnUse" x1="192.5" x2="325.8" y1="0" y2="0"><stop offset="0.000" stop-color="#008cff"/><stop offset="0.030" stop-color="#2a89ff"/><stop offset="0.075" stop-color="#4a87ff"/><stop offset="0.164" stop-color="#6f82ff"/><stop offset="0.358" stop-color="#a576ff"/><stop offset="0.701" stop-color="#ec55ff"/><stop offset="0.806" stop-color="#ff45fe"/><stop offset="0.925" stop-color="#ff24ea"/><stop offset="0.955" stop-color="#ff16e5"/><stop offset="0.970" stop-color="#ff07e3"/><stop offset="0.985" stop-color="#ff00e1"/><stop offset="1.000" stop-color="#ff00df"/></linearGradient><linearGradient id="i103" gradientUnits="userSpaceOnUse" x1="191.6" x2="320.1" y1="0" y2="0"><stop offset="0.000" stop-color="#008aff"/><stop offset="0.031" stop-color="#2a86ff"/><stop offset="0.077" stop-color="#4984ff"/><stop offset="0.169" stop-color="#6e7fff"/><stop offset="0.369" stop-color="#a372ff"/><stop offset="0.708" stop-color="#e752ff"/><stop offset="0.846" stop-color="#ff3bfe"/><stop offset="0.938" stop-color="#ff1eef"/><stop offset="0.954" stop-color="#ff16ec"/><stop offset="0.969" stop-color="#ff06ea"/><stop offset="0.985" stop-color="#ff00e8"/><stop offset="1.000" stop-color="#ff00e6"/></linearGradient><linearGradient id="i104" gradientUnits="userSpaceOnUse" x1="190.7" x2="314.3" y1="0" y2="0"><stop offset="0.000" stop-color="#0087ff"/><stop offset="0.032" stop-color="#2a83ff"/><stop offset="0.081" stop-color="#4981ff"/><stop offset="0.177" stop-color="#6e7bff"/><stop offset="0.387" stop-color="#a36eff"/><stop offset="0.726" stop-color="#e44dff"/><stop offset="0.887" stop-color="#ff30fe"/><stop offset="0.952" stop-color="#ff17f4"/><stop offset="0.968" stop-color="#ff07f1"/><stop offset="0.984" stop-color="#ff00ef"/><stop offset="1.000" stop-color="#ff00ed"/></linearGradient><linearGradient id="i105" gradientUnits="userSpaceOnUse" x1="189.8" x2="308.5" y1="0" y2="0"><stop offset="0.000" stop-color="#0084ff"/><stop offset="0.033" stop-color="#2980ff"/><stop offset="0.083" stop-color="#487dff"/><stop offset="0.200" stop-color="#7277ff"/><stop offset="0.433" stop-color="#a968ff"/><stop offset="0.750" stop-color="#e248ff"/><stop offset="0.900" stop-color="#fb2bff"/><stop offset="0.950" stop-color="#ff17fb"/><stop offset="0.967" stop-color="#ff06f9"/><stop offset="0.983" stop-color="#ff00f6"/><stop offset="1.000" stop-color="#ff00f4"/></linearGradient><linearGradient id="i106" gradientUnits="userSpaceOnUse" x1="188.9" x2="302.8" y1="0" y2="0"><stop offset="0.000" stop-color="#0081ff"/><stop offset="0.035" stop-color="#2a7dff"/><stop offset="0.088" stop-color="#487aff"/><stop offset="0.211" stop-color="#7274ff"/><stop offset="0.456" stop-color="#a963ff"/><stop offset="0.754" stop-color="#dd45ff"/><stop offset="0.895" stop-color="#f32bff"/><stop offset="0.947" stop-color="#fb18ff"/><stop offset="0.965" stop-color="#fe07ff"/><stop offset="0.982" stop-color="#ff00fe"/><stop offset="1.000" stop-color="#ff00fb"/></linearGradient><linearGradient id="i107" gradientUnits="userSpaceOnUse" x1="188.0" x2="297.0" y1="0" y2="0"><stop offset="0.000" stop-color="#007eff"/><stop offset="0.036" stop-color="#297aff"/><stop offset="0.091" stop-color="#4877ff"/><stop offset="0.218" stop-color="#7170ff"/><stop offset="0.473" stop-color="#a75fff"/><stop offset="0.764" stop-color="#d841ff"/><stop offset="0.891" stop-color="#eb2aff"/><stop offset="0.945" stop-color="#f317ff"/><stop offset="0.964" stop-color="#f606ff"/><stop offset="0.982" stop-color="#f800ff"/><stop offset="1.000" stop-color="#fb00ff"/></linearGradient><linearGradient id="i108" gradientUnits="userSpaceOnUse" x1="187.2" x2="291.2" y1="0" y2="0"><stop offset="0.000" stop-color="#007aff"/><stop offset="0.038" stop-color="#2976ff"/><stop offset="0.094" stop-color="#4774ff"/><stop offset="0.226" stop-color="#706dff"/><stop offset="0.491" stop-color="#a65bff"/><stop offset="0.774" stop-color="#d33eff"/><stop offset="0.906" stop-color="#e624ff"/><stop offset="0.943" stop-color="#eb17ff"/><stop offset="0.962" stop-color="#ee05ff"/><stop offset="0.981" stop-color="#f100ff"/><stop offset="1.000" stop-color="#f300ff"/></linearGradient><linearGradient id="i109" gradientUnits="userSpaceOnUse" x1="186.3" x2="285.5" y1="0" y2="0"><stop offset="0.000" stop-color="#0077ff"/><stop offset="0.040" stop-color="#2973ff"/><stop offset="0.100" stop-color="#4770ff"/><stop offset="0.240" stop-color="#7069ff"/><stop offset="0.520" stop-color="#a656ff"/><stop offset="0.800" stop-color="#d038ff"/><stop offset="0.920" stop-color="#e11eff"/><stop offset="0.940" stop-color="#e317ff"/><stop offset="0.960" stop-color="#e606ff"/><stop offset="0.980" stop-color="#e900ff"/><stop offset="1.000" stop-color="#ec00ff"/></linearGradient><linearGradient id="i110" gradientUnits="userSpaceOnUse" x1="185.4" x2="279.7" y1="0" y2="0"><stop offset="0.000" stop-color="#0074ff"/><stop offset="0.042" stop-color="#2870ff"/><stop offset="0.104" stop-color="#476dff"/><stop offset="0.250" stop-color="#6f65ff"/><stop offset="0.542" stop-color="#a452ff"/><stop offset="0.813" stop-color="#cb34ff"/><stop offset="0.917" stop-color="#d91eff"/><stop offset="0.938" stop-color="#dc16ff"/><stop offset="0.958" stop-color="#de05ff"/><stop offset="0.979" stop-color="#e100ff"/><stop offset="1.000" stop-color="#e400ff"/></linearGradient><linearGradient id="i111" gradientUnits="userSpaceOnUse" x1="184.5" x2="274.0" y1="0" y2="0"><stop offset="0.000" stop-color="#0071ff"/><stop offset="0.044" stop-color="#296cff"/><stop offset="0.111" stop-color="#4769ff"/><stop offset="0.267" stop-color="#6f61ff"/><stop offset="0.578" stop-color="#a44cff"/><stop offset="0.822" stop-color="#c630ff"/><stop offset="0.911" stop-color="#d11eff"/><stop offset="0.933" stop-color="#d416ff"/><stop offset="0.956" stop-color="#d706ff"/><stop offset="0.978" stop-color="#da00ff"/><stop offset="1.000" stop-color="#dc00ff"/></linearGradient><linearGradient id="i112" gradientUnits="userSpaceOnUse" x1="183.6" x2="268.2" y1="0" y2="0"><stop offset="0.000" stop-color="#006eff"/><stop offset="0.047" stop-color="#2869ff"/><stop offset="0.116" stop-color="#4666ff"/><stop offset="0.279" stop-color="#6e5dff"/><stop offset="0.605" stop-color="#a347ff"/><stop offset="0.837" stop-color="#c12cff"/><stop offset="0.930" stop-color="#cc16ff"/><stop offset="0.953" stop-color="#cf05ff"/><stop offset="0.977" stop-color="#d200ff"/><stop offset="1.000" stop-color="#d500ff"/></linearGradient><linearGradient id="i113" gradientUnits="userSpaceOnUse" x1="182.7" x2="262.4" y1="0" y2="0"><stop offset="0.000" stop-color="#006bff"/><stop offset="0.050" stop-color="#2866ff"/><stop offset="0.125" stop-color="#4662ff"/><stop offset="0.300" stop-color="#6e59ff"/><stop offset="0.650" stop-color="#a340ff"/><stop offset="0.850" stop-color="#bc28ff"/><stop offset="0.925" stop-color="#c416ff"/><stop offset="0.950" stop-color="#c706ff"/><stop offset="0.975" stop-color="#ca00ff"/><stop offset="1.000" stop-color="#cd00ff"/></linearGradient><linearGradient id="i114" gradientUnits="userSpaceOnUse" x1="181.9" x2="256.7" y1="0" y2="0"><stop offset="0.000" stop-color="#0067ff"/><stop offset="0.053" stop-color="#2862ff"/><stop offset="0.132" stop-color="#455eff"/><stop offset="0.316" stop-color="#6d55ff"/><stop offset="0.684" stop-color="#a13bff"/><stop offset="0.868" stop-color="#b722ff"/><stop offset="0.921" stop-color="#bc15ff"/><stop offset="0.947" stop-color="#bf05ff"/><stop offset="1.000" stop-color="#c500ff"/></linearGradient><linearGradient id="i115" gradientUnits="userSpaceOnUse" x1="181.0" x2="250.9" y1="0" y2="0"><stop offset="0.000" stop-color="#0064ff"/><stop offset="0.057" stop-color="#285eff"/><stop offset="0.143" stop-color="#465aff"/><stop offset="0.343" stop-color="#6e50ff"/><stop offset="0.743" stop-color="#a232ff"/><stop offset="0.886" stop-color="#b11dff"/><stop offset="0.914" stop-color="#b415ff"/><stop offset="0.943" stop-color="#b706ff"/><stop offset="0.971" stop-color="#bb00ff"/><stop offset="1.000" stop-color="#be00ff"/></linearGradient><linearGradient id="i116" gradientUnits="userSpaceOnUse" x1="180.1" x2="245.1" y1="0" y2="0"><stop offset="0.000" stop-color="#0060ff"/><stop offset="0.061" stop-color="#275aff"/><stop offset="0.152" stop-color="#4557ff"/><stop offset="0.364" stop-color="#6c4cff"/><stop offset="0.727" stop-color="#9a31ff"/><stop offset="0.879" stop-color="#a91cff"/><stop offset="0.909" stop-color="#ac15ff"/><stop offset="0.939" stop-color="#af05ff"/><stop offset="1.000" stop-color="#b600ff"/></linearGradient><linearGradient id="i117" gradientUnits="userSpaceOnUse" x1="179.2" x2="239.4" y1="0" y2="0"><stop offset="0.000" stop-color="#005dff"/><stop offset="0.065" stop-color="#2757ff"/><stop offset="0.161" stop-color="#4452ff"/><stop offset="0.387" stop-color="#6b47ff"/><stop offset="0.742" stop-color="#952dff"/><stop offset="0.871" stop-color="#a11cff"/><stop offset="0.903" stop-color="#a414ff"/><stop offset="0.935" stop-color="#a703ff"/><stop offset="1.000" stop-color="#ae00ff"/></linearGradient><linearGradient id="i118" gradientUnits="userSpaceOnUse" x1="178.3" x2="233.6" y1="0" y2="0"><stop offset="0.000" stop-color="#0059ff"/><stop offset="0.071" stop-color="#2752ff"/><stop offset="0.179" stop-color="#444eff"/><stop offset="0.429" stop-color="#6c42ff"/><stop offset="0.786" stop-color="#9226ff"/><stop offset="0.893" stop-color="#9c15ff"/><stop offset="0.929" stop-color="#9f05ff"/><stop offset="1.000" stop-color="#a600ff"/></linearGradient><linearGradient id="i119" gradientUnits="userSpaceOnUse" x1="177.5" x2="227.9" y1="0" y2="0"><stop offset="0.000" stop-color="#0055ff"/><stop offset="0.077" stop-color="#274eff"/><stop offset="0.192" stop-color="#434aff"/><stop offset="0.462" stop-color="#6a3cff"/><stop offset="0.769" stop-color="#8925ff"/><stop offset="0.885" stop-color="#9314ff"/><stop offset="0.923" stop-color="#9702ff"/><stop offset="1.000" stop-color="#9e00ff"/></linearGradient><linearGradient id="i120" gradientUnits="userSpaceOnUse" x1="176.6" x2="222.1" y1="0" y2="0"><stop offset="0.000" stop-color="#0051ff"/><stop offset="0.087" stop-color="#274aff"/><stop offset="0.217" stop-color="#4444ff"/><stop offset="0.522" stop-color="#6b35ff"/><stop offset="0.783" stop-color="#8321ff"/><stop offset="0.870" stop-color="#8a14ff"/><stop offset="0.913" stop-color="#8e05ff"/><stop offset="1.000" stop-color="#9500ff"/></linearGradient><linearGradient id="i121" gradientUnits="userSpaceOnUse" x1="175.7" x2="216.3" y1="0" y2="0"><stop offset="0.000" stop-color="#004dff"/><stop offset="0.095" stop-color="#2645ff"/><stop offset="0.238" stop-color="#433fff"/><stop offset="0.571" stop-color="#692fff"/><stop offset="0.810" stop-color="#7d1bff"/><stop offset="0.857" stop-color="#8114ff"/><stop offset="0.905" stop-color="#8501ff"/><stop offset="1.000" stop-color="#8d00ff"/></linearGradient><linearGradient id="i122" gradientUnits="userSpaceOnUse" x1="174.8" x2="210.6" y1="0" y2="0"><stop offset="0.000" stop-color="#0048ff"/><stop offset="0.111" stop-color="#2740ff"/><stop offset="0.278" stop-color="#4439ff"/><stop offset="0.667" stop-color="#6a25ff"/><stop offset="0.833" stop-color="#7714ff"/><stop offset="0.889" stop-color="#7b05ff"/><stop offset="0.944" stop-color="#7f00ff"/><stop offset="1.000" stop-color="#8400ff"/></linearGradient><linearGradient id="i123" gradientUnits="userSpaceOnUse" x1="173.9" x2="204.8" y1="0" y2="0"><stop offset="0.000" stop-color="#0043ff"/><stop offset="0.125" stop-color="#263aff"/><stop offset="0.313" stop-color="#4233ff"/><stop offset="0.687" stop-color="#641fff"/><stop offset="0.813" stop-color="#6d13ff"/><stop offset="0.875" stop-color="#7100ff"/><stop offset="1.000" stop-color="#7a00ff"/></linearGradient><linearGradient id="i124" gradientUnits="userSpaceOnUse" x1="173.0" x2="199.0" y1="0" y2="0"><stop offset="0.000" stop-color="#003eff"/><stop offset="0.077" stop-color="#1336ff"/><stop offset="0.154" stop-color="#2734ff"/><stop offset="0.385" stop-color="#432cff"/><stop offset="0.692" stop-color="#5b1bff"/><stop offset="0.769" stop-color="#6014ff"/><stop offset="0.846" stop-color="#6505ff"/><stop offset="0.923" stop-color="#6b00ff"/><stop offset="1.000" stop-color="#7000ff"/></linearGradient><linearGradient id="i125" gradientUnits="userSpaceOnUse" x1="172.2" x2="193.3" y1="0" y2="0"><stop offset="0.000" stop-color="#0039ff"/><stop offset="0.091" stop-color="#1230ff"/><stop offset="0.182" stop-color="#252dff"/><stop offset="0.455" stop-color="#4223ff"/><stop offset="0.727" stop-color="#5413ff"/><stop offset="0.818" stop-color="#5900ff"/><stop offset="1.000" stop-color="#6500ff"/></linearGradient><linearGradient id="i126" gradientUnits="userSpaceOnUse" x1="171.3" x2="187.5" y1="0" y2="0"><stop offset="0.000" stop-color="#0033ff"/><stop offset="0.111" stop-color="#1028ff"/><stop offset="0.222" stop-color="#2425ff"/><stop offset="0.556" stop-color="#3f18ff"/><stop offset="0.667" stop-color="#4611ff"/><stop offset="0.778" stop-color="#4c00ff"/><stop offset="1.000" stop-color="#5900ff"/></linearGradient><linearGradient id="i127" gradientUnits="userSpaceOnUse" x1="170.4" x2="181.7" y1="0" y2="0"><stop offset="0.000" stop-color="#002cff"/><stop offset="0.167" stop-color="#111eff"/><stop offset="0.333" stop-color="#2519ff"/><stop offset="0.500" stop-color="#3012ff"/><stop offset="0.667" stop-color="#3900ff"/><stop offset="1.000" stop-color="#4a00ff"/></linearGradient><linearGradient id="i128" gradientUnits="userSpaceOnUse" x1="169.8" x2="176.0" y1="0" y2="0"><stop offset="0.000" stop-color="#0021ff"/><stop offset="0.250" stop-color="#0f0cff"/><stop offset="0.500" stop-color="#2300ff"/><stop offset="1.000" stop-color="#3800ff"/></linearGradient><radialGradient id="spg" cx="0.42" cy="0.38" r="0.62" fx="0.34" fy="0.28"><stop offset="0" stop-color="#9dff9d"/><stop offset="0.35" stop-color="#18e818"/><stop offset="1" stop-color="#0cac0c"/></radialGradient><radialGradient id="spr" cx="0.42" cy="0.38" r="0.62" fx="0.34" fy="0.28"><stop offset="0" stop-color="#ff8a68"/><stop offset="0.35" stop-color="#f02414"/><stop offset="1" stop-color="#c01008"/></radialGradient><radialGradient id="spb" cx="0.42" cy="0.38" r="0.62" fx="0.34" fy="0.28"><stop offset="0" stop-color="#6c7cff"/><stop offset="0.35" stop-color="#2c38ec"/><stop offset="1" stop-color="#1c22c0"/></radialGradient><radialGradient id="spy" cx="0.42" cy="0.38" r="0.62" fx="0.34" fy="0.28"><stop offset="0" stop-color="#ffffd4"/><stop offset="0.35" stop-color="#f2f28c"/><stop offset="1" stop-color="#c0c050"/></radialGradient><radialGradient id="spc" cx="0.42" cy="0.38" r="0.62" fx="0.34" fy="0.28"><stop offset="0" stop-color="#dcfffc"/><stop offset="0.35" stop-color="#84f0ea"/><stop offset="1" stop-color="#50bcbc"/></radialGradient><radialGradient id="spm" cx="0.42" cy="0.38" r="0.62" fx="0.34" fy="0.28"><stop offset="0" stop-color="#ff88f8"/><stop offset="0.35" stop-color="#f01ce0"/><stop offset="1" stop-color="#b410ac"/></radialGradient><linearGradient id="sqr" x1="0" y1="0" x2="1" y2="1"><stop offset="0" stop-color="#7a0c0c"/><stop offset="0.5" stop-color="#7a0c0c"/><stop offset="0.5" stop-color="#b03818"/><stop offset="1" stop-color="#b03818"/></linearGradient><linearGradient id="sqg" x1="0" y1="0" x2="1" y2="1"><stop offset="0" stop-color="#24400c"/><stop offset="0.5" stop-color="#24400c"/><stop offset="0.5" stop-color="#b03818"/><stop offset="1" stop-color="#b03818"/></linearGradient><linearGradient id="sqb" x1="0" y1="0" x2="1" y2="1"><stop offset="0" stop-color="#180c70"/><stop offset="0.5" stop-color="#180c70"/><stop offset="0.5" stop-color="#b03818"/><stop offset="1" stop-color="#b03818"/></linearGradient><linearGradient id="sqy" x1="0" y1="0" x2="1" y2="1"><stop offset="0" stop-color="#705010"/><stop offset="0.5" stop-color="#705010"/><stop offset="0.5" stop-color="#b03818"/><stop offset="1" stop-color="#b03818"/></linearGradient><linearGradient id="sqc" x1="0" y1="0" x2="1" y2="1"><stop offset="0" stop-color="#102858"/><stop offset="0.5" stop-color="#102858"/><stop offset="0.5" stop-color="#b03818"/><stop offset="1" stop-color="#b03818"/></linearGradient><linearGradient id="sqm" x1="0" y1="0" x2="1" y2="1"><stop offset="0" stop-color="#580c58"/><stop offset="0.5" stop-color="#580c58"/><stop offset="0.5" stop-color="#b03818"/><stop offset="1" stop-color="#b03818"/></linearGradient><linearGradient id="mg" gradientUnits="userSpaceOnUse" x1="0" x2="0" y1="166" y2="421"><stop offset="0" stop-color="#068a06"/><stop offset="0.35" stop-color="#0a8a70"/><stop offset="0.7" stop-color="#0a70a8"/><stop offset="1" stop-color="#1830b0"/></linearGradient><clipPath id="cl"><path d="M208.7 435.4L202.5 437.2L193.9 439.8L187.0 441.8L183.8 442.7L182.3 443.0L181.0 443.2L179.6 443.4L178.5 443.5L177.0 443.2L175.0 442.6L172.6 441.7L170.3 440.4L168.2 438.8L166.1 436.9L163.6 434.5L160.5 431.4L157.1 427.7L153.6 423.7L150.2 419.5L146.8 415.0L143.5 410.3L140.4 405.5L137.5 400.5L134.3 395.2L130.8 389.4L127.2 383.3L123.5 376.9L119.9 370.4L116.2 363.6L112.6 356.5L109.0 349.0L105.4 341.2L101.8 333.4L98.1 325.3L94.4 317.2L91.4 310.0L89.6 304.2L88.4 299.3L87.1 294.2L85.1 288.5L82.9 282.7L80.9 277.0L79.2 271.9L77.7 266.9L75.9 260.8L73.4 252.8L70.7 243.8L68.4 235.2L66.8 227.6L65.7 220.5L64.7 213.5L63.7 206.9L62.8 200.6L62.0 193.4L61.4 184.9L60.9 175.6L60.5 166.4L60.3 157.5L60.2 148.7L60.3 140.3L60.6 132.4L61.1 125.0L61.7 118.2L62.4 112.2L63.3 106.8L64.2 101.8L65.2 97.0L66.2 92.6L67.5 88.5L69.1 84.5L70.8 80.8L72.6 77.6L74.2 75.2L75.7 73.3L77.6 71.3L80.0 68.7L82.8 66.0L85.9 63.4L89.3 61.0L93.0 58.7L96.8 56.7L100.6 55.2L104.6 53.9L108.5 53.0L112.5 52.3L116.5 51.9L120.2 51.7L123.1 51.6L125.7 51.6L128.6 51.7L132.2 52.0L136.2 52.4L140.3 53.0L144.6 53.9L149.1 55.1L153.6 56.4L158.1 57.8L162.5 59.3L167.0 60.9L171.5 62.5L175.9 64.1L180.4 65.9L184.8 67.8L189.1 69.7L193.7 71.8L198.4 73.9L203.2 76.1L208.8 78.8L215.3 82.1L222.4 85.8L230.0 89.8L237.9 94.0L246.3 98.5L254.9 103.2L263.6 108.1L272.6 113.2L281.5 118.4L290.3 123.6L299.2 128.8L308.1 134.1L316.9 139.5L325.8 144.9L334.7 150.4L343.5 155.9L352.4 161.4L361.2 166.9L370.0 172.4L378.8 177.9L387.5 183.4L396.2 188.8L404.8 194.3L413.3 199.7L421.8 205.0L430.1 210.3L438.4 215.5L446.5 220.7L454.6 225.8L462.4 230.7L470.1 235.6L477.7 240.4L485.0 245.0L492.2 249.5L499.1 253.9L505.7 258.1L511.9 262.1L517.9 265.8L523.6 269.4L529.1 272.9L534.4 276.3L539.4 279.4L544.0 282.3L548.4 285.1L552.5 287.6L556.3 290.0L559.8 292.3L563.1 294.4L566.1 296.3L569.0 298.1L571.6 299.8L574.0 301.3L576.3 302.7L578.3 304.0L580.2 305.2L581.8 306.2L583.8 307.5L586.4 309.1L589.4 311.0L592.0 312.7L594.1 314.0L595.8 315.1L597.2 316.0L598.4 316.7L599.3 317.3L600.2 317.9L601.2 318.4L602.0 319.0L602.7 319.5L603.2 319.8L603.5 319.9L603.7 320.1Z"/></clipPath><clipPath id="ct"><path d="M540.7 294.1L284.0 165.7L279.5 167L170.20000000000005 422.6Z"/></clipPath></defs><path d="M58.5 0V475M133.5 0V475M208.5 0V475M284.5 0V475M360.5 0V475M435.5 0V475M510.5 0V475M586.5 0V475M0 403.5H681M0 356.5H681M0 308.5H681M0 261.5H681M0 213.5H681M0 166.5H681M0 118.5H681M0 71.5H681M0 23.5H681" stroke="#505456" stroke-width="1" fill="none"/><g clip-path="url(#cl)"><rect x="107.5" y="51.0" width="33.8" height="2.6" fill="url(#o0)"/><rect x="100.1" y="53.0" width="49.5" height="2.6" fill="url(#o1)"/><rect x="95.2" y="55.0" width="61.3" height="2.6" fill="url(#o2)"/><rect x="91.5" y="57.0" width="71.1" height="2.6" fill="url(#o3)"/><rect x="88.3" y="59.0" width="80.0" height="2.6" fill="url(#o4)"/><rect x="85.5" y="61.0" width="88.4" height="2.6" fill="url(#o5)"/><rect x="83.0" y="63.0" width="96.1" height="2.6" fill="url(#o6)"/><rect x="80.8" y="65.0" width="103.2" height="2.6" fill="url(#o7)"/><rect x="78.8" y="67.0" width="109.8" height="2.6" fill="url(#o8)"/><rect x="76.9" y="69.0" width="116.1" height="2.6" fill="url(#o9)"/><rect x="75.0" y="71.0" width="122.3" height="2.6" fill="url(#o10)"/><rect x="73.3" y="73.0" width="128.4" height="2.6" fill="url(#o11)"/><rect x="72.0" y="75.0" width="134.1" height="2.6" fill="url(#o12)"/><rect x="70.8" y="77.0" width="139.4" height="2.6" fill="url(#o13)"/><rect x="69.7" y="79.0" width="144.4" height="2.6" fill="url(#o14)"/><rect x="68.8" y="81.0" width="149.3" height="2.6" fill="url(#o15)"/><rect x="67.9" y="83.0" width="154.0" height="2.6" fill="url(#o16)"/><rect x="67.1" y="85.0" width="158.6" height="2.6" fill="url(#o17)"/><rect x="66.3" y="87.0" width="163.1" height="2.6" fill="url(#o18)"/><rect x="65.7" y="89.0" width="167.5" height="2.6" fill="url(#o19)"/><rect x="65.2" y="91.0" width="171.9" height="2.6" fill="url(#o20)"/><rect x="64.7" y="93.0" width="176.1" height="2.6" fill="url(#o21)"/><rect x="64.2" y="95.0" width="180.3" height="2.6" fill="url(#o22)"/><rect x="63.8" y="97.0" width="184.4" height="2.6" fill="url(#o23)"/><rect x="63.4" y="99.0" width="188.4" height="2.6" fill="url(#o24)"/><rect x="63.0" y="101.0" width="192.4" height="2.6" fill="url(#o25)"/><rect x="62.6" y="103.0" width="196.4" height="2.6" fill="url(#o26)"/><rect x="62.2" y="105.0" width="200.3" height="2.6" fill="url(#o27)"/><rect x="61.9" y="107.0" width="204.2" height="2.6" fill="url(#o28)"/><rect x="61.6" y="109.0" width="208.1" height="2.6" fill="url(#o29)"/><rect x="61.3" y="111.0" width="211.9" height="2.6" fill="url(#o30)"/><rect x="61.1" y="113.0" width="215.6" height="2.6" fill="url(#o31)"/><rect x="60.8" y="115.0" width="219.3" height="2.6" fill="url(#o32)"/><rect x="60.6" y="117.0" width="223.0" height="2.6" fill="url(#o33)"/><rect x="60.4" y="119.0" width="226.5" height="2.6" fill="url(#o34)"/><rect x="60.3" y="121.0" width="230.1" height="2.6" fill="url(#o35)"/><rect x="60.1" y="123.0" width="233.7" height="2.6" fill="url(#o36)"/><rect x="60.0" y="125.0" width="237.2" height="2.6" fill="url(#o37)"/><rect x="59.8" y="127.0" width="240.7" height="2.6" fill="url(#o38)"/><rect x="59.7" y="129.0" width="244.1" height="2.6" fill="url(#o39)"/><rect x="59.6" y="131.0" width="247.6" height="2.6" fill="url(#o40)"/><rect x="59.5" y="133.0" width="251.0" height="2.6" fill="url(#o41)"/><rect x="59.4" y="135.0" width="254.4" height="2.6" fill="url(#o42)"/><rect x="59.4" y="137.0" width="257.7" height="2.6" fill="url(#o43)"/><rect x="59.3" y="139.0" width="261.1" height="2.6" fill="url(#o44)"/><rect x="59.3" y="141.0" width="264.4" height="2.6" fill="url(#o45)"/><rect x="59.2" y="143.0" width="267.7" height="2.6" fill="url(#o46)"/><rect x="59.2" y="145.0" width="271.0" height="2.6" fill="url(#o47)"/><rect x="59.2" y="147.0" width="274.2" height="2.6" fill="url(#o48)"/><rect x="59.2" y="149.0" width="277.5" height="2.6" fill="url(#o49)"/><rect x="59.2" y="151.0" width="280.7" height="2.6" fill="url(#o50)"/><rect x="59.2" y="153.0" width="283.9" height="2.6" fill="url(#o51)"/><rect x="59.3" y="155.0" width="287.1" height="2.6" fill="url(#o52)"/><rect x="59.3" y="157.0" width="290.3" height="2.6" fill="url(#o53)"/><rect x="59.3" y="159.0" width="293.5" height="2.6" fill="url(#o54)"/><rect x="59.4" y="161.0" width="296.6" height="2.6" fill="url(#o55)"/><rect x="59.4" y="163.0" width="299.8" height="2.6" fill="url(#o56)"/><rect x="59.5" y="165.0" width="302.9" height="2.6" fill="url(#o57)"/><rect x="59.5" y="167.0" width="306.1" height="2.6" fill="url(#o58)"/><rect x="59.6" y="169.0" width="309.2" height="2.6" fill="url(#o59)"/><rect x="59.7" y="171.0" width="312.3" height="2.6" fill="url(#o60)"/><rect x="59.8" y="173.0" width="315.4" height="2.6" fill="url(#o61)"/><rect x="59.8" y="175.0" width="318.5" height="2.6" fill="url(#o62)"/><rect x="59.9" y="177.0" width="321.6" height="2.6" fill="url(#o63)"/><rect x="60.0" y="179.0" width="324.7" height="2.6" fill="url(#o64)"/><rect x="60.2" y="181.0" width="327.8" height="2.6" fill="url(#o65)"/><rect x="60.3" y="183.0" width="330.9" height="2.6" fill="url(#o66)"/><rect x="60.4" y="185.0" width="333.9" height="2.6" fill="url(#o67)"/><rect x="60.5" y="187.0" width="336.9" height="2.6" fill="url(#o68)"/><rect x="60.7" y="189.0" width="340.0" height="2.6" fill="url(#o69)"/><rect x="60.8" y="191.0" width="343.0" height="2.6" fill="url(#o70)"/><rect x="61.0" y="193.0" width="346.0" height="2.6" fill="url(#o71)"/><rect x="61.2" y="195.0" width="349.0" height="2.6" fill="url(#o72)"/><rect x="61.4" y="197.0" width="351.9" height="2.6" fill="url(#o73)"/><rect x="61.6" y="199.0" width="354.8" height="2.6" fill="url(#o74)"/><rect x="61.8" y="201.0" width="357.8" height="2.6" fill="url(#o75)"/><rect x="62.1" y="203.0" width="360.6" height="2.6" fill="url(#o76)"/><rect x="62.4" y="205.0" width="363.5" height="2.6" fill="url(#o77)"/><rect x="62.7" y="207.0" width="366.4" height="2.6" fill="url(#o78)"/><rect x="63.0" y="209.0" width="369.2" height="2.6" fill="url(#o79)"/><rect x="63.3" y="211.0" width="372.1" height="2.6" fill="url(#o80)"/><rect x="63.6" y="213.0" width="374.9" height="2.6" fill="url(#o81)"/><rect x="63.9" y="215.0" width="377.8" height="2.6" fill="url(#o82)"/><rect x="64.2" y="217.0" width="380.7" height="2.6" fill="url(#o83)"/><rect x="64.5" y="219.0" width="383.5" height="2.6" fill="url(#o84)"/><rect x="64.8" y="221.0" width="386.4" height="2.6" fill="url(#o85)"/><rect x="65.1" y="223.0" width="389.2" height="2.6" fill="url(#o86)"/><rect x="65.4" y="225.0" width="392.1" height="2.6" fill="url(#o87)"/><rect x="65.8" y="227.0" width="394.9" height="2.6" fill="url(#o88)"/><rect x="66.1" y="229.0" width="397.7" height="2.6" fill="url(#o89)"/><rect x="66.5" y="231.0" width="400.5" height="2.6" fill="url(#o90)"/><rect x="66.9" y="233.0" width="403.2" height="2.6" fill="url(#o91)"/><rect x="67.4" y="235.0" width="406.0" height="2.6" fill="url(#o92)"/><rect x="67.9" y="237.0" width="408.6" height="2.6" fill="url(#o93)"/><rect x="68.4" y="239.0" width="411.3" height="2.6" fill="url(#o94)"/><rect x="69.0" y="241.0" width="413.9" height="2.6" fill="url(#o95)"/><rect x="69.5" y="243.0" width="416.5" height="2.6" fill="url(#o96)"/><rect x="70.1" y="245.0" width="419.1" height="2.6" fill="url(#o97)"/><rect x="70.7" y="247.0" width="421.7" height="2.6" fill="url(#o98)"/><rect x="71.3" y="249.0" width="424.2" height="2.6" fill="url(#o99)"/><rect x="71.9" y="251.0" width="426.7" height="2.6" fill="url(#o100)"/><rect x="72.5" y="253.0" width="429.3" height="2.6" fill="url(#o101)"/><rect x="73.1" y="255.0" width="431.8" height="2.6" fill="url(#o102)"/><rect x="73.7" y="257.0" width="434.4" height="2.6" fill="url(#o103)"/><rect x="74.3" y="259.0" width="436.9" height="2.6" fill="url(#o104)"/><rect x="75.0" y="261.0" width="439.5" height="2.6" fill="url(#o105)"/><rect x="75.6" y="263.0" width="442.0" height="2.6" fill="url(#o106)"/><rect x="76.2" y="265.0" width="444.6" height="2.6" fill="url(#o107)"/><rect x="76.8" y="267.0" width="447.2" height="2.6" fill="url(#o108)"/><rect x="77.4" y="269.0" width="449.7" height="2.6" fill="url(#o109)"/><rect x="78.0" y="271.0" width="452.3" height="2.6" fill="url(#o110)"/><rect x="78.6" y="273.0" width="454.8" height="2.6" fill="url(#o111)"/><rect x="79.3" y="275.0" width="457.3" height="2.6" fill="url(#o112)"/><rect x="79.9" y="277.0" width="459.8" height="2.6" fill="url(#o113)"/><rect x="80.6" y="279.0" width="462.3" height="2.6" fill="url(#o114)"/><rect x="81.3" y="281.0" width="464.8" height="2.6" fill="url(#o115)"/><rect x="82.1" y="283.0" width="467.2" height="2.6" fill="url(#o116)"/><rect x="82.8" y="285.0" width="469.7" height="2.6" fill="url(#o117)"/><rect x="83.6" y="287.0" width="472.1" height="2.6" fill="url(#o118)"/><rect x="84.3" y="289.0" width="474.5" height="2.6" fill="url(#o119)"/><rect x="85.0" y="291.0" width="476.9" height="2.6" fill="url(#o120)"/><rect x="85.7" y="293.0" width="479.4" height="2.6" fill="url(#o121)"/><rect x="86.3" y="295.0" width="481.9" height="2.6" fill="url(#o122)"/><rect x="86.8" y="297.0" width="484.5" height="2.6" fill="url(#o123)"/><rect x="87.4" y="299.0" width="487.2" height="2.6" fill="url(#o124)"/><rect x="87.8" y="301.0" width="489.9" height="2.6" fill="url(#o125)"/><rect x="88.3" y="303.0" width="492.6" height="2.6" fill="url(#o126)"/><rect x="88.8" y="305.0" width="495.2" height="2.6" fill="url(#o127)"/><rect x="89.5" y="307.0" width="497.7" height="2.6" fill="url(#o128)"/><rect x="90.1" y="309.0" width="500.3" height="2.6" fill="url(#o129)"/><rect x="90.8" y="311.0" width="502.7" height="2.6" fill="url(#o130)"/><rect x="91.6" y="313.0" width="505.1" height="2.6" fill="url(#o131)"/><rect x="92.5" y="315.0" width="507.4" height="2.6" fill="url(#o132)"/><rect x="93.3" y="317.0" width="509.7" height="2.6" fill="url(#o133)"/><rect x="94.2" y="319.0" width="510.5" height="2.6" fill="url(#o134)"/><rect x="95.1" y="321.0" width="506.4" height="2.6" fill="url(#o135)"/><rect x="96.0" y="323.0" width="498.7" height="2.6" fill="url(#o136)"/><rect x="96.9" y="325.0" width="490.9" height="2.6" fill="url(#o137)"/><rect x="97.8" y="327.0" width="483.1" height="2.6" fill="url(#o138)"/><rect x="98.8" y="329.0" width="475.4" height="2.6" fill="url(#o139)"/><rect x="99.7" y="331.0" width="467.6" height="2.6" fill="url(#o140)"/><rect x="100.6" y="333.0" width="459.8" height="2.6" fill="url(#o141)"/><rect x="101.5" y="335.0" width="452.1" height="2.6" fill="url(#o142)"/><rect x="102.4" y="337.0" width="444.3" height="2.6" fill="url(#o143)"/><rect x="103.4" y="339.0" width="436.5" height="2.6" fill="url(#o144)"/><rect x="104.3" y="341.0" width="428.8" height="2.6" fill="url(#o145)"/><rect x="105.2" y="343.0" width="421.0" height="2.6" fill="url(#o146)"/><rect x="106.1" y="345.0" width="413.2" height="2.6" fill="url(#o147)"/><rect x="107.0" y="347.0" width="405.4" height="2.6" fill="url(#o148)"/><rect x="108.0" y="349.0" width="397.7" height="2.6" fill="url(#o149)"/><rect x="108.9" y="351.0" width="389.8" height="2.6" fill="url(#o150)"/><rect x="109.9" y="353.0" width="382.0" height="2.6" fill="url(#o151)"/><rect x="110.9" y="355.0" width="374.2" height="2.6" fill="url(#o152)"/><rect x="111.9" y="357.0" width="366.4" height="2.6" fill="url(#o153)"/><rect x="112.9" y="359.0" width="358.5" height="2.6" fill="url(#o154)"/><rect x="113.9" y="361.0" width="350.6" height="2.6" fill="url(#o155)"/><rect x="114.9" y="363.0" width="342.7" height="2.6" fill="url(#o156)"/><rect x="116.0" y="365.0" width="334.8" height="2.6" fill="url(#o157)"/><rect x="117.1" y="367.0" width="326.9" height="2.6" fill="url(#o158)"/><rect x="118.1" y="369.0" width="319.0" height="2.6" fill="url(#o159)"/><rect x="119.2" y="371.0" width="311.1" height="2.6" fill="url(#o160)"/><rect x="120.3" y="373.0" width="303.1" height="2.6" fill="url(#o161)"/><rect x="121.4" y="375.0" width="295.1" height="2.6" fill="url(#o162)"/><rect x="122.6" y="377.0" width="287.2" height="2.6" fill="url(#o163)"/><rect x="123.7" y="379.0" width="279.2" height="2.6" fill="url(#o164)"/><rect x="124.9" y="381.0" width="271.2" height="2.6" fill="url(#o165)"/><rect x="126.0" y="383.0" width="263.2" height="2.6" fill="url(#o166)"/><rect x="127.2" y="385.0" width="255.1" height="2.6" fill="url(#o167)"/><rect x="128.4" y="387.0" width="247.1" height="2.6" fill="url(#o168)"/><rect x="129.6" y="389.0" width="239.1" height="2.6" fill="url(#o169)"/><rect x="130.8" y="391.0" width="231.0" height="2.6" fill="url(#o170)"/><rect x="132.0" y="393.0" width="222.9" height="2.6" fill="url(#o171)"/><rect x="133.2" y="395.0" width="214.9" height="2.6" fill="url(#o172)"/><rect x="134.4" y="397.0" width="206.9" height="2.6" fill="url(#o173)"/><rect x="135.5" y="399.0" width="198.8" height="2.6" fill="url(#o174)"/><rect x="136.7" y="401.0" width="190.8" height="2.6" fill="url(#o175)"/><rect x="137.9" y="403.0" width="182.7" height="2.6" fill="url(#o176)"/><rect x="139.1" y="405.0" width="174.7" height="2.6" fill="url(#o177)"/><rect x="140.4" y="407.0" width="166.6" height="2.6" fill="url(#o178)"/><rect x="141.7" y="409.0" width="158.5" height="2.6" fill="url(#o179)"/><rect x="143.0" y="411.0" width="150.3" height="2.6" fill="url(#o180)"/><rect x="144.4" y="413.0" width="142.0" height="2.6" fill="url(#o181)"/><rect x="145.8" y="415.0" width="133.8" height="2.6" fill="url(#o182)"/><rect x="147.3" y="417.0" width="125.4" height="2.6" fill="url(#o183)"/><rect x="148.8" y="419.0" width="117.0" height="2.6" fill="url(#o184)"/><rect x="150.4" y="421.0" width="108.6" height="2.6" fill="url(#o185)"/><rect x="152.0" y="423.0" width="100.1" height="2.6" fill="url(#o186)"/><rect x="153.7" y="425.0" width="91.6" height="2.6" fill="url(#o187)"/><rect x="155.5" y="427.0" width="83.0" height="2.6" fill="url(#o188)"/><rect x="157.3" y="429.0" width="74.3" height="2.6" fill="url(#o189)"/><rect x="159.2" y="431.0" width="65.6" height="2.6" fill="url(#o190)"/><rect x="161.1" y="433.0" width="56.8" height="2.6" fill="url(#o191)"/><rect x="163.1" y="435.0" width="48.0" height="2.6" fill="url(#o192)"/><rect x="165.1" y="437.0" width="39.2" height="2.6" fill="url(#o193)"/><rect x="167.4" y="439.0" width="30.2" height="2.6" fill="url(#o194)"/><rect x="170.4" y="441.0" width="20.3" height="2.6" fill="url(#o195)"/><rect x="175.3" y="443.0" width="8.0" height="2.6" fill="url(#o196)"/><path d="M58.5 0V475M133.5 0V475M208.5 0V475M284.5 0V475M360.5 0V475M435.5 0V475M510.5 0V475M586.5 0V475M0 403.5H681M0 356.5H681M0 308.5H681M0 261.5H681M0 213.5H681M0 166.5H681M0 118.5H681M0 71.5H681M0 23.5H681" stroke="#000" stroke-opacity="0.45" stroke-width="1" fill="none"/></g><path d="M208.7 435.4L202.5 437.2L193.9 439.8L187.0 441.8L183.8 442.7L182.3 443.0L181.0 443.2L179.6 443.4L178.5 443.5L177.0 443.2L175.0 442.6L172.6 441.7L170.3 440.4L168.2 438.8L166.1 436.9L163.6 434.5L160.5 431.4L157.1 427.7L153.6 423.7L150.2 419.5L146.8 415.0L143.5 410.3L140.4 405.5L137.5 400.5L134.3 395.2L130.8 389.4L127.2 383.3L123.5 376.9L119.9 370.4L116.2 363.6L112.6 356.5L109.0 349.0L105.4 341.2L101.8 333.4L98.1 325.3L94.4 317.2L91.4 310.0L89.6 304.2L88.4 299.3L87.1 294.2L85.1 288.5L82.9 282.7L80.9 277.0L79.2 271.9L77.7 266.9L75.9 260.8L73.4 252.8L70.7 243.8L68.4 235.2L66.8 227.6L65.7 220.5L64.7 213.5L63.7 206.9L62.8 200.6L62.0 193.4L61.4 184.9L60.9 175.6L60.5 166.4L60.3 157.5L60.2 148.7L60.3 140.3L60.6 132.4L61.1 125.0L61.7 118.2L62.4 112.2L63.3 106.8L64.2 101.8L65.2 97.0L66.2 92.6L67.5 88.5L69.1 84.5L70.8 80.8L72.6 77.6L74.2 75.2L75.7 73.3L77.6 71.3L80.0 68.7L82.8 66.0L85.9 63.4L89.3 61.0L93.0 58.7L96.8 56.7L100.6 55.2L104.6 53.9L108.5 53.0L112.5 52.3L116.5 51.9L120.2 51.7L123.1 51.6L125.7 51.6L128.6 51.7L132.2 52.0L136.2 52.4L140.3 53.0L144.6 53.9L149.1 55.1L153.6 56.4L158.1 57.8L162.5 59.3L167.0 60.9L171.5 62.5L175.9 64.1L180.4 65.9L184.8 67.8L189.1 69.7L193.7 71.8L198.4 73.9L203.2 76.1L208.8 78.8L215.3 82.1L222.4 85.8L230.0 89.8L237.9 94.0L246.3 98.5L254.9 103.2L263.6 108.1L272.6 113.2L281.5 118.4L290.3 123.6L299.2 128.8L308.1 134.1L316.9 139.5L325.8 144.9L334.7 150.4L343.5 155.9L352.4 161.4L361.2 166.9L370.0 172.4L378.8 177.9L387.5 183.4L396.2 188.8L404.8 194.3L413.3 199.7L421.8 205.0L430.1 210.3L438.4 215.5L446.5 220.7L454.6 225.8L462.4 230.7L470.1 235.6L477.7 240.4L485.0 245.0L492.2 249.5L499.1 253.9L505.7 258.1L511.9 262.1L517.9 265.8L523.6 269.4L529.1 272.9L534.4 276.3L539.4 279.4L544.0 282.3L548.4 285.1L552.5 287.6L556.3 290.0L559.8 292.3L563.1 294.4L566.1 296.3L569.0 298.1L571.6 299.8L574.0 301.3L576.3 302.7L578.3 304.0L580.2 305.2L581.8 306.2L583.8 307.5L586.4 309.1L589.4 311.0L592.0 312.7L594.1 314.0L595.8 315.1L597.2 316.0L598.4 316.7L599.3 317.3L600.2 317.9L601.2 318.4L602.0 319.0L602.7 319.5L603.2 319.8L603.5 319.9L603.7 320.1Z" fill="none" stroke="#eca524" stroke-width="1.25"/><g clip-path="url(#ct)"><rect x="282.4" y="165.0" width="5.2" height="2.6" fill="url(#i0)"/><rect x="281.5" y="167.0" width="10.1" height="2.6" fill="url(#i1)"/><rect x="280.7" y="169.0" width="14.9" height="2.6" fill="url(#i2)"/><rect x="279.8" y="171.0" width="19.8" height="2.6" fill="url(#i3)"/><rect x="278.9" y="173.0" width="24.7" height="2.6" fill="url(#i4)"/><rect x="278.0" y="175.0" width="29.6" height="2.6" fill="url(#i5)"/><rect x="277.1" y="177.0" width="34.5" height="2.6" fill="url(#i6)"/><rect x="276.3" y="179.0" width="39.3" height="2.6" fill="url(#i7)"/><rect x="275.4" y="181.0" width="44.2" height="2.6" fill="url(#i8)"/><rect x="274.5" y="183.0" width="49.1" height="2.6" fill="url(#i9)"/><rect x="273.6" y="185.0" width="54.0" height="2.6" fill="url(#i10)"/><rect x="272.7" y="187.0" width="58.9" height="2.6" fill="url(#i11)"/><rect x="271.8" y="189.0" width="63.7" height="2.6" fill="url(#i12)"/><rect x="271.0" y="191.0" width="68.6" height="2.6" fill="url(#i13)"/><rect x="270.1" y="193.0" width="73.5" height="2.6" fill="url(#i14)"/><rect x="269.2" y="195.0" width="78.4" height="2.6" fill="url(#i15)"/><rect x="268.3" y="197.0" width="83.3" height="2.6" fill="url(#i16)"/><rect x="267.4" y="199.0" width="88.2" height="2.6" fill="url(#i17)"/><rect x="266.5" y="201.0" width="93.0" height="2.6" fill="url(#i18)"/><rect x="265.7" y="203.0" width="97.9" height="2.6" fill="url(#i19)"/><rect x="264.8" y="205.0" width="102.8" height="2.6" fill="url(#i20)"/><rect x="263.9" y="207.0" width="107.7" height="2.6" fill="url(#i21)"/><rect x="263.0" y="209.0" width="112.6" height="2.6" fill="url(#i22)"/><rect x="262.1" y="211.0" width="117.4" height="2.6" fill="url(#i23)"/><rect x="261.3" y="213.0" width="122.3" height="2.6" fill="url(#i24)"/><rect x="260.4" y="215.0" width="127.2" height="2.6" fill="url(#i25)"/><rect x="259.5" y="217.0" width="132.1" height="2.6" fill="url(#i26)"/><rect x="258.6" y="219.0" width="137.0" height="2.6" fill="url(#i27)"/><rect x="257.7" y="221.0" width="141.8" height="2.6" fill="url(#i28)"/><rect x="256.8" y="223.0" width="146.7" height="2.6" fill="url(#i29)"/><rect x="256.0" y="225.0" width="151.6" height="2.6" fill="url(#i30)"/><rect x="255.1" y="227.0" width="156.5" height="2.6" fill="url(#i31)"/><rect x="254.2" y="229.0" width="161.4" height="2.6" fill="url(#i32)"/><rect x="253.3" y="231.0" width="166.2" height="2.6" fill="url(#i33)"/><rect x="252.4" y="233.0" width="171.1" height="2.6" fill="url(#i34)"/><rect x="251.6" y="235.0" width="176.0" height="2.6" fill="url(#i35)"/><rect x="250.7" y="237.0" width="180.9" height="2.6" fill="url(#i36)"/><rect x="249.8" y="239.0" width="185.8" height="2.6" fill="url(#i37)"/><rect x="248.9" y="241.0" width="190.7" height="2.6" fill="url(#i38)"/><rect x="248.0" y="243.0" width="195.5" height="2.6" fill="url(#i39)"/><rect x="247.1" y="245.0" width="200.4" height="2.6" fill="url(#i40)"/><rect x="246.3" y="247.0" width="205.3" height="2.6" fill="url(#i41)"/><rect x="245.4" y="249.0" width="210.2" height="2.6" fill="url(#i42)"/><rect x="244.5" y="251.0" width="215.1" height="2.6" fill="url(#i43)"/><rect x="243.6" y="253.0" width="219.9" height="2.6" fill="url(#i44)"/><rect x="242.7" y="255.0" width="224.8" height="2.6" fill="url(#i45)"/><rect x="241.8" y="257.0" width="229.7" height="2.6" fill="url(#i46)"/><rect x="241.0" y="259.0" width="234.6" height="2.6" fill="url(#i47)"/><rect x="240.1" y="261.0" width="239.5" height="2.6" fill="url(#i48)"/><rect x="239.2" y="263.0" width="244.3" height="2.6" fill="url(#i49)"/><rect x="238.3" y="265.0" width="249.2" height="2.6" fill="url(#i50)"/><rect x="237.4" y="267.0" width="254.1" height="2.6" fill="url(#i51)"/><rect x="236.6" y="269.0" width="259.0" height="2.6" fill="url(#i52)"/><rect x="235.7" y="271.0" width="263.9" height="2.6" fill="url(#i53)"/><rect x="234.8" y="273.0" width="268.7" height="2.6" fill="url(#i54)"/><rect x="233.9" y="275.0" width="273.6" height="2.6" fill="url(#i55)"/><rect x="233.0" y="277.0" width="278.5" height="2.6" fill="url(#i56)"/><rect x="232.1" y="279.0" width="283.4" height="2.6" fill="url(#i57)"/><rect x="231.3" y="281.0" width="288.3" height="2.6" fill="url(#i58)"/><rect x="230.4" y="283.0" width="293.2" height="2.6" fill="url(#i59)"/><rect x="229.5" y="285.0" width="298.0" height="2.6" fill="url(#i60)"/><rect x="228.6" y="287.0" width="302.9" height="2.6" fill="url(#i61)"/><rect x="227.7" y="289.0" width="307.8" height="2.6" fill="url(#i62)"/><rect x="226.9" y="291.0" width="312.7" height="2.6" fill="url(#i63)"/><rect x="226.0" y="293.0" width="315.7" height="2.6" fill="url(#i64)"/><rect x="225.1" y="295.0" width="314.0" height="2.6" fill="url(#i65)"/><rect x="224.2" y="297.0" width="309.1" height="2.6" fill="url(#i66)"/><rect x="223.3" y="299.0" width="304.2" height="2.6" fill="url(#i67)"/><rect x="222.4" y="301.0" width="299.3" height="2.6" fill="url(#i68)"/><rect x="221.6" y="303.0" width="294.4" height="2.6" fill="url(#i69)"/><rect x="220.7" y="305.0" width="289.6" height="2.6" fill="url(#i70)"/><rect x="219.8" y="307.0" width="284.7" height="2.6" fill="url(#i71)"/><rect x="218.9" y="309.0" width="279.8" height="2.6" fill="url(#i72)"/><rect x="218.0" y="311.0" width="274.9" height="2.6" fill="url(#i73)"/><rect x="217.2" y="313.0" width="270.0" height="2.6" fill="url(#i74)"/><rect x="216.3" y="315.0" width="265.2" height="2.6" fill="url(#i75)"/><rect x="215.4" y="317.0" width="260.3" height="2.6" fill="url(#i76)"/><rect x="214.5" y="319.0" width="255.4" height="2.6" fill="url(#i77)"/><rect x="213.6" y="321.0" width="250.5" height="2.6" fill="url(#i78)"/><rect x="212.7" y="323.0" width="245.6" height="2.6" fill="url(#i79)"/><rect x="211.9" y="325.0" width="240.8" height="2.6" fill="url(#i80)"/><rect x="211.0" y="327.0" width="235.9" height="2.6" fill="url(#i81)"/><rect x="210.1" y="329.0" width="231.0" height="2.6" fill="url(#i82)"/><rect x="209.2" y="331.0" width="226.1" height="2.6" fill="url(#i83)"/><rect x="208.3" y="333.0" width="221.2" height="2.6" fill="url(#i84)"/><rect x="207.4" y="335.0" width="216.4" height="2.6" fill="url(#i85)"/><rect x="206.6" y="337.0" width="211.5" height="2.6" fill="url(#i86)"/><rect x="205.7" y="339.0" width="206.6" height="2.6" fill="url(#i87)"/><rect x="204.8" y="341.0" width="201.7" height="2.6" fill="url(#i88)"/><rect x="203.9" y="343.0" width="196.8" height="2.6" fill="url(#i89)"/><rect x="203.0" y="345.0" width="191.9" height="2.6" fill="url(#i90)"/><rect x="202.2" y="347.0" width="187.1" height="2.6" fill="url(#i91)"/><rect x="201.3" y="349.0" width="182.2" height="2.6" fill="url(#i92)"/><rect x="200.4" y="351.0" width="177.3" height="2.6" fill="url(#i93)"/><rect x="199.5" y="353.0" width="172.4" height="2.6" fill="url(#i94)"/><rect x="198.6" y="355.0" width="167.5" height="2.6" fill="url(#i95)"/><rect x="197.7" y="357.0" width="162.7" height="2.6" fill="url(#i96)"/><rect x="196.9" y="359.0" width="157.8" height="2.6" fill="url(#i97)"/><rect x="196.0" y="361.0" width="152.9" height="2.6" fill="url(#i98)"/><rect x="195.1" y="363.0" width="148.0" height="2.6" fill="url(#i99)"/><rect x="194.2" y="365.0" width="143.1" height="2.6" fill="url(#i100)"/><rect x="193.3" y="367.0" width="138.3" height="2.6" fill="url(#i101)"/><rect x="192.5" y="369.0" width="133.4" height="2.6" fill="url(#i102)"/><rect x="191.6" y="371.0" width="128.5" height="2.6" fill="url(#i103)"/><rect x="190.7" y="373.0" width="123.6" height="2.6" fill="url(#i104)"/><rect x="189.8" y="375.0" width="118.7" height="2.6" fill="url(#i105)"/><rect x="188.9" y="377.0" width="113.9" height="2.6" fill="url(#i106)"/><rect x="188.0" y="379.0" width="109.0" height="2.6" fill="url(#i107)"/><rect x="187.2" y="381.0" width="104.1" height="2.6" fill="url(#i108)"/><rect x="186.3" y="383.0" width="99.2" height="2.6" fill="url(#i109)"/><rect x="185.4" y="385.0" width="94.3" height="2.6" fill="url(#i110)"/><rect x="184.5" y="387.0" width="89.4" height="2.6" fill="url(#i111)"/><rect x="183.6" y="389.0" width="84.6" height="2.6" fill="url(#i112)"/><rect x="182.7" y="391.0" width="79.7" height="2.6" fill="url(#i113)"/><rect x="181.9" y="393.0" width="74.8" height="2.6" fill="url(#i114)"/><rect x="181.0" y="395.0" width="69.9" height="2.6" fill="url(#i115)"/><rect x="180.1" y="397.0" width="65.0" height="2.6" fill="url(#i116)"/><rect x="179.2" y="399.0" width="60.2" height="2.6" fill="url(#i117)"/><rect x="178.3" y="401.0" width="55.3" height="2.6" fill="url(#i118)"/><rect x="177.5" y="403.0" width="50.4" height="2.6" fill="url(#i119)"/><rect x="176.6" y="405.0" width="45.5" height="2.6" fill="url(#i120)"/><rect x="175.7" y="407.0" width="40.6" height="2.6" fill="url(#i121)"/><rect x="174.8" y="409.0" width="35.8" height="2.6" fill="url(#i122)"/><rect x="173.9" y="411.0" width="30.9" height="2.6" fill="url(#i123)"/><rect x="173.0" y="413.0" width="26.0" height="2.6" fill="url(#i124)"/><rect x="172.2" y="415.0" width="21.1" height="2.6" fill="url(#i125)"/><rect x="171.3" y="417.0" width="16.2" height="2.6" fill="url(#i126)"/><rect x="170.4" y="419.0" width="11.4" height="2.6" fill="url(#i127)"/><rect x="169.8" y="421.0" width="6.2" height="2.6" fill="url(#i128)"/></g><path d="M0 295.5H221.1M547.7 295.5H681M294.5 0V286.6M294.5 384V475" stroke="#fff" stroke-opacity="0.66" stroke-width="1" stroke-dasharray="4 3" fill="none"/><path d="M409.6 253.4L403.3 254.2L397.3 255.2L391.6 256.2L386.1 257.3L380.9 258.5L376.0 259.7L371.3 261.0L366.8 262.3L362.5 263.7L358.4 265.0L354.5 266.3L350.8 267.7L347.2 269.0L343.7 270.4L335.9 273.6L328.8 276.7L322.6 279.6L317.0 282.3L311.9 284.9L307.4 287.3L303.3 289.6L299.6 291.7L296.3 293.7L293.2 295.6L290.4 297.3L287.8 299.0L285.4 300.5L283.3 301.9L281.3 303.3L279.4 304.6L277.7 305.8L276.1 306.9L274.6 307.9L273.2 308.9L271.9 309.9L270.7 310.8L269.5 311.6L268.4 312.4L261.7 317.5L257.3 321.1L254.2 323.6L251.9 325.5L250.1 327.0L248.7 328.2L247.6 329.1L246.7 329.9L245.9 330.6L245.3 331.2L244.7 331.6L244.3 332.1L243.8 332.4L243.5 332.7L243.2 333.0L242.9 333.3L242.6 333.5L242.4 333.7L242.2 333.9L242.0 334.1L241.8 334.2L241.6 334.4L241.5 334.5L241.4 334.6L241.2 334.8" stroke="#000" stroke-width="1.3" fill="none"/><path d="M285.2 167.2L172.3 422.5M170.8 423.7L540.7 295.3" stroke="#000" stroke-opacity="0.5" stroke-width="2.6" fill="none"/><path d="M170.20000000000005 422.6L279.5 167L284.0 165.7L540 293.79999999999995Z" fill="none" stroke="#fff" stroke-width="3" stroke-linejoin="round"/><path d="M293.6 294.6L540.7 294.1M293.6 294.6L284.0 165.7M293.6 294.6L170.8 422.5M293.6 294.6L374.1 210.7M293.6 294.6L227.1 294.7M293.6 294.6L299.8 377.7" stroke="#000" stroke-opacity="0.8" stroke-width="0.9" stroke-dasharray="4 3.5" fill="none"/><path d="M142.0 32.0L128.4 52.0" stroke="#c8c8c8" stroke-width="0.8"/><text x="142.5" y="37.9" font-family="Liberation Serif,serif" font-size="10" fill="#cfcfcf">520 nm</text><path d="M256.0 74.5L241.6 94.1" stroke="#c8c8c8" stroke-width="0.8"/><text x="256.0" y="81.2" font-family="Liberation Serif,serif" font-size="10" fill="#cfcfcf">540 nm</text><path d="M46.7 174.5L60.5 169.6" stroke="#c8c8c8" stroke-width="0.8"/><text x="21.7" y="184.6" font-family="Liberation Serif,serif" font-size="10" fill="#cfcfcf">500 nm</text><path d="M359.6 137.0L345.5 157.0" stroke="#c8c8c8" stroke-width="0.8"/><text x="359.6" y="143.2" font-family="Liberation Serif,serif" font-size="10" fill="#cfcfcf">560 nm</text><path d="M433.0 183.0L418.7 201.4" stroke="#c8c8c8" stroke-width="0.8"/><text x="433.4" y="188.8" font-family="Liberation Serif,serif" font-size="10" fill="#cfcfcf">580 nm</text><path d="M483.0 214.0L469.4 233.9" stroke="#c8c8c8" stroke-width="0.8"/><text x="483.3" y="220.5" font-family="Liberation Serif,serif" font-size="10" fill="#cfcfcf">600 nm</text><path d="M530.5 245.0L516.5 263.0" stroke="#c8c8c8" stroke-width="0.8"/><text x="530.8" y="250.4" font-family="Liberation Serif,serif" font-size="10" fill="#cfcfcf">620 nm</text><path d="M583.0 277.0L569.0 295.6" stroke="#c8c8c8" stroke-width="0.8"/><text x="583.2" y="283.2" font-family="Liberation Serif,serif" font-size="10" fill="#cfcfcf">640 nm</text><path d="M604.5 291.0L590.5 309.5" stroke="#c8c8c8" stroke-width="0.8"/><text x="604.7" y="296.8" font-family="Liberation Serif,serif" font-size="10" fill="#cfcfcf">660 nm</text><path d="M613.5 298.0L600.4 316.2" stroke="#c8c8c8" stroke-width="0.8"/><text x="613.7" y="303.2" font-family="Liberation Serif,serif" font-size="10" fill="#cfcfcf">680 nm</text><path d="M104.4 371.6L117.7 367.6" stroke="#c8c8c8" stroke-width="0.8"/><text x="78.9" y="381.7" font-family="Liberation Serif,serif" font-size="10" fill="#cfcfcf">480 nm</text><path d="M136.0 425.0L150.9 420.0" stroke="#c8c8c8" stroke-width="0.8"/><text x="112.0" y="434.8" font-family="Liberation Serif,serif" font-size="10" fill="#cfcfcf">460 nm</text><path d="M147.6 438.3L160.8 434.0" stroke="#c8c8c8" stroke-width="0.8"/><text x="122.7" y="447.8" font-family="Liberation Serif,serif" font-size="10" fill="#cfcfcf">440 nm</text><path d="M154.2 444.0L168.5 439.0" stroke="#c8c8c8" stroke-width="0.8"/><text x="130.3" y="453.7" font-family="Liberation Serif,serif" font-size="10" fill="#cfcfcf">420 nm</text><text x="3" y="400.0" font-family="Liberation Serif,serif" font-size="14" fill="#f0f0f0">0.1</text><text x="3" y="352.4" font-family="Liberation Serif,serif" font-size="14" fill="#f0f0f0">0.2</text><text x="3" y="304.9" font-family="Liberation Serif,serif" font-size="14" fill="#f0f0f0">0.3</text><text x="3" y="257.3" font-family="Liberation Serif,serif" font-size="14" fill="#f0f0f0">0.4</text><text x="3" y="209.8" font-family="Liberation Serif,serif" font-size="14" fill="#f0f0f0">0.5</text><text x="3" y="162.2" font-family="Liberation Serif,serif" font-size="14" fill="#f0f0f0">0.6</text><text x="3" y="114.7" font-family="Liberation Serif,serif" font-size="14" fill="#f0f0f0">0.7</text><text x="3" y="67.1" font-family="Liberation Serif,serif" font-size="14" fill="#f0f0f0">0.8</text><text x="135.5" y="470.5" font-family="Liberation Serif,serif" font-size="14" fill="#f0f0f0">0.1</text><text x="211.0" y="470.5" font-family="Liberation Serif,serif" font-size="14" fill="#f0f0f0">0.2</text><text x="286.5" y="470.5" font-family="Liberation Serif,serif" font-size="14" fill="#f0f0f0">0.3</text><text x="362.0" y="470.5" font-family="Liberation Serif,serif" font-size="14" fill="#f0f0f0">0.4</text><text x="437.5" y="470.5" font-family="Liberation Serif,serif" font-size="14" fill="#f0f0f0">0.5</text><text x="513.0" y="470.5" font-family="Liberation Serif,serif" font-size="14" fill="#f0f0f0">0.6</text><text x="588.5" y="470.5" font-family="Liberation Serif,serif" font-size="14" fill="#f0f0f0">0.7</text><text x="516.5" y="413.5" font-family="Liberation Sans,sans-serif" font-weight="bold" font-size="16" fill="#4c4e4e">hcfr.sourceforge.net</text><rect x="284.5" y="255.5" width="14" height="14" fill="#44c41c" stroke="url(#sqg)" stroke-width="1"/><circle cx="290.6" cy="263.3" r="6.5" fill="#043c04" opacity="0.8"/><circle cx="289.7" cy="262.7" r="5.6" fill="url(#spg)"/><rect x="289.1" y="261.7" width="1.2" height="2.2" fill="#000"/><rect x="282.5" y="223.5" width="14" height="14" fill="#44c41c" stroke="url(#sqg)" stroke-width="1"/><circle cx="288.2" cy="231.1" r="6.5" fill="#043c04" opacity="0.8"/><circle cx="287.3" cy="230.5" r="5.6" fill="url(#spg)"/><rect x="286.7" y="229.5" width="1.2" height="2.2" fill="#000"/><rect x="279.5" y="191.5" width="14" height="14" fill="#44c41c" stroke="url(#sqg)" stroke-width="1"/><circle cx="285.3" cy="198.9" r="6.5" fill="#043c04" opacity="0.8"/><circle cx="284.4" cy="198.3" r="5.6" fill="url(#spg)"/><rect x="283.8" y="197.3" width="1.2" height="2.2" fill="#000"/><rect x="277.5" y="159.5" width="14" height="14" fill="#44c41c" stroke="url(#sqg)" stroke-width="1"/><circle cx="282.1" cy="166.8" r="6.5" fill="#043c04" opacity="0.8"/><circle cx="281.2" cy="166.2" r="5.6" fill="url(#spg)"/><rect x="280.6" y="165.2" width="1.2" height="2.2" fill="#000"/><rect x="348.5" y="287.5" width="14" height="14" fill="#e01c1c" stroke="url(#sqr)" stroke-width="1"/><circle cx="356.1" cy="295.6" r="6.5" fill="#400000" opacity="0.8"/><circle cx="355.2" cy="295.0" r="5.6" fill="url(#spr)"/><rect x="410.5" y="287.5" width="14" height="14" fill="#e01c1c" stroke="url(#sqr)" stroke-width="1"/><circle cx="421.0" cy="294.9" r="6.5" fill="#400000" opacity="0.8"/><circle cx="420.1" cy="294.3" r="5.6" fill="url(#spr)"/><rect x="472.5" y="287.5" width="14" height="14" fill="#e01c1c" stroke="url(#sqr)" stroke-width="1"/><circle cx="481.0" cy="294.8" r="6.5" fill="#400000" opacity="0.8"/><circle cx="480.1" cy="294.2" r="5.6" fill="url(#spr)"/><rect x="534.5" y="287.5" width="14" height="14" fill="#e01c1c" stroke="url(#sqr)" stroke-width="1"/><circle cx="539.9" cy="294.2" r="6.5" fill="#400000" opacity="0.8"/><circle cx="539.0" cy="293.6" r="5.6" fill="url(#spr)"/><rect x="256.5" y="320.5" width="14" height="14" fill="#3434e0" stroke="url(#sqb)" stroke-width="1"/><circle cx="263.3" cy="327.6" r="6.5" fill="#060640" opacity="0.8"/><circle cx="262.4" cy="327.0" r="5.6" fill="url(#spb)"/><rect x="225.5" y="352.5" width="14" height="14" fill="#3434e0" stroke="url(#sqb)" stroke-width="1"/><circle cx="232.6" cy="359.6" r="6.5" fill="#060640" opacity="0.8"/><circle cx="231.7" cy="359.0" r="5.6" fill="url(#spb)"/><rect x="194.5" y="383.5" width="14" height="14" fill="#3434e0" stroke="url(#sqb)" stroke-width="1"/><circle cx="201.9" cy="391.6" r="6.5" fill="#060640" opacity="0.8"/><circle cx="201.0" cy="391.0" r="5.6" fill="url(#spb)"/><rect x="164.5" y="415.5" width="14" height="14" fill="#3434e0" stroke="url(#sqb)" stroke-width="1"/><circle cx="171.2" cy="423.6" r="6.5" fill="#060640" opacity="0.8"/><circle cx="170.2" cy="423.0" r="5.6" fill="url(#spb)"/><rect x="307.5" y="267.5" width="14" height="14" fill="#e0d44c" stroke="url(#sqy)" stroke-width="1"/><circle cx="314.1" cy="274.5" r="6.5" fill="#505010" opacity="0.8"/><circle cx="313.2" cy="273.9" r="5.6" fill="url(#spy)"/><rect x="312.6" y="272.9" width="1.2" height="2.2" fill="#000"/><rect x="327.5" y="246.5" width="14" height="14" fill="#e0d44c" stroke="url(#sqy)" stroke-width="1"/><circle cx="334.2" cy="253.5" r="6.5" fill="#505010" opacity="0.8"/><circle cx="333.3" cy="252.9" r="5.6" fill="url(#spy)"/><rect x="332.7" y="251.9" width="1.2" height="2.2" fill="#000"/><rect x="347.5" y="225.5" width="14" height="14" fill="#e0d44c" stroke="url(#sqy)" stroke-width="1"/><circle cx="354.4" cy="232.6" r="6.5" fill="#505010" opacity="0.8"/><circle cx="353.5" cy="232.0" r="5.6" fill="url(#spy)"/><rect x="352.9" y="231.0" width="1.2" height="2.2" fill="#000"/><rect x="367.5" y="204.5" width="14" height="14" fill="#e0d44c" stroke="url(#sqy)" stroke-width="1"/><circle cx="374.0" cy="211.8" r="6.5" fill="#505010" opacity="0.8"/><circle cx="373.1" cy="211.2" r="5.6" fill="url(#spy)"/><rect x="372.5" y="210.2" width="1.2" height="2.2" fill="#000"/><rect x="270.5" y="288.5" width="14" height="14" fill="#48d8e0" stroke="url(#sqc)" stroke-width="1"/><circle cx="275.7" cy="295.9" r="6.5" fill="#0c4848" opacity="0.8"/><circle cx="274.8" cy="295.3" r="5.6" fill="url(#spc)"/><rect x="274.2" y="294.3" width="1.2" height="2.2" fill="#000"/><rect x="253.5" y="288.5" width="14" height="14" fill="#48d8e0" stroke="url(#sqc)" stroke-width="1"/><circle cx="259.4" cy="295.9" r="6.5" fill="#0c4848" opacity="0.8"/><circle cx="258.5" cy="295.3" r="5.6" fill="url(#spc)"/><rect x="257.9" y="294.3" width="1.2" height="2.2" fill="#000"/><rect x="237.5" y="288.5" width="14" height="14" fill="#48d8e0" stroke="url(#sqc)" stroke-width="1"/><circle cx="242.0" cy="295.7" r="6.5" fill="#0c4848" opacity="0.8"/><circle cx="241.1" cy="295.1" r="5.6" fill="url(#spc)"/><rect x="240.5" y="294.1" width="1.2" height="2.2" fill="#000"/><rect x="220.5" y="288.5" width="14" height="14" fill="#48d8e0" stroke="url(#sqc)" stroke-width="1"/><circle cx="225.4" cy="294.8" r="6.5" fill="#0c4848" opacity="0.8"/><circle cx="224.5" cy="294.2" r="5.6" fill="url(#spc)"/><rect x="223.9" y="293.2" width="1.2" height="2.2" fill="#000"/><rect x="288.5" y="308.5" width="14" height="14" fill="#d418c8" stroke="url(#sqm)" stroke-width="1"/><circle cx="295.8" cy="317.7" r="6.5" fill="#300030" opacity="0.8"/><circle cx="294.9" cy="317.1" r="5.6" fill="url(#spm)"/><rect x="294.3" y="316.1" width="1.2" height="2.2" fill="#000"/><rect x="289.5" y="329.5" width="14" height="14" fill="#d418c8" stroke="url(#sqm)" stroke-width="1"/><circle cx="297.9" cy="337.9" r="6.5" fill="#300030" opacity="0.8"/><circle cx="297.0" cy="337.3" r="5.6" fill="url(#spm)"/><rect x="296.4" y="336.3" width="1.2" height="2.2" fill="#000"/><rect x="291.5" y="350.5" width="14" height="14" fill="#d418c8" stroke="url(#sqm)" stroke-width="1"/><circle cx="299.4" cy="358.5" r="6.5" fill="#300030" opacity="0.8"/><circle cx="298.5" cy="357.9" r="5.6" fill="url(#spm)"/><rect x="297.9" y="356.9" width="1.2" height="2.2" fill="#000"/><rect x="293.5" y="371.5" width="14" height="14" fill="#d418c8" stroke="url(#sqm)" stroke-width="1"/><circle cx="301.0" cy="378.8" r="6.5" fill="#300030" opacity="0.8"/><circle cx="300.1" cy="378.2" r="5.6" fill="url(#spm)"/><rect x="299.5" y="377.2" width="1.2" height="2.2" fill="#000"/><circle cx="293.4" cy="296.8" r="8.6" fill="#000" opacity="0.35"/><circle cx="293.2" cy="296.4" r="7.6" fill="#000" opacity="0.88"/><circle cx="292.5" cy="295.8" r="5.8" fill="url(#spm)"/><rect x="292.0" y="294.8" width="1.2" height="2.2" fill="#000"/></svg></div></div></div></div></body></html>
